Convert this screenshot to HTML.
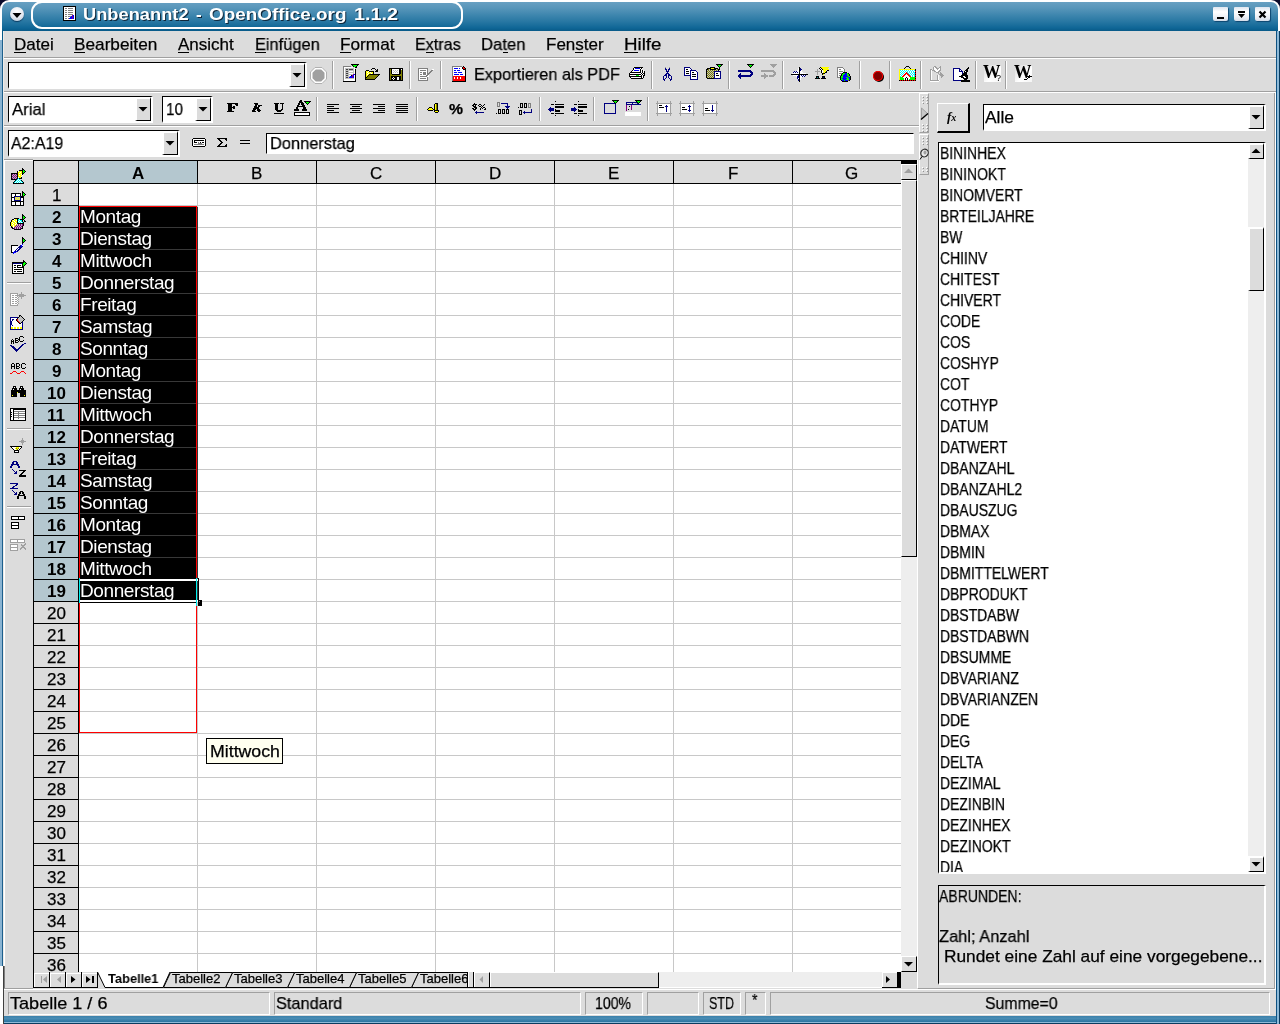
<!DOCTYPE html><html><head><meta charset="utf-8"><style>html,body{margin:0;padding:0;width:1280px;height:1024px;overflow:hidden;background:#dcdcdc;}.a{position:absolute;}.t{font-family:"Liberation Sans",sans-serif;white-space:nowrap;color:#000;will-change:transform;-webkit-text-stroke:0.25px currentColor;}svg.a{overflow:visible}</style></head><body>
<div class="a" style="left:0px;top:0px;width:2px;height:966px;background:#8ab4d2"></div>
<div class="a" style="left:2px;top:0px;width:1px;height:966px;background:#1d5f8c"></div>
<div class="a" style="left:0px;top:966px;width:3px;height:58px;background:#fff"></div>
<div class="a" style="left:3px;top:966px;width:1px;height:58px;background:#404040"></div>
<div class="a" style="left:4px;top:966px;width:1px;height:23px;background:#808080"></div>
<div class="a" style="left:4px;top:1016px;width:1272px;height:6px;background:linear-gradient(to bottom,#3a80aa,#4a8cb4 40%,#2a74a0)"></div>
<div class="a" style="left:4px;top:1022px;width:1275px;height:1px;background:#8ebad8"></div>
<div class="a" style="left:4px;top:1023px;width:1276px;height:1px;background:#0a3c60"></div>
<div class="a" style="left:0px;top:0px;width:1280px;height:31px;background:#0a0a2a"></div>
<div class="a" style="left:0;top:0;width:1280px;height:40px;border-radius:9px 9px 0 0;background:#fff"></div>
<div class="a" style="left:2px;top:2px;width:1276px;height:38px;border-radius:7px 7px 0 0;background:linear-gradient(to bottom,#68a0c2 0px,#5896ba 6px,#3e86ae 13px,#2676a2 20px,#0f6696 26px,#085a88 29px,#085a88 38px)"></div>
<div class="a" style="left:31px;top:1px;width:432px;height:28px;border:2px solid #fff;border-radius:11px;box-sizing:border-box"></div>
<div class="a" style="left:10px;top:7px;width:14px;height:14px;border-radius:50%;background:radial-gradient(circle at 50% 30%,#ffffff,#e4e8f0 55%,#b4c0d0);box-shadow:0 1px 1px #0a3a60"></div>
<svg class="a" style="left:12px;top:12px" width="10" height="7" viewBox="0 0 10 7" shape-rendering="crispEdges"><polygon points="0.5,1 9.5,1 5,6" fill="#000" shape-rendering="geometricPrecision"/></svg>
<svg class="a" style="left:63px;top:6px" width="13" height="15" shape-rendering="crispEdges"><rect x="0" y="0" width="13" height="1" fill="#000000"/><rect x="0" y="1" width="1" height="1" fill="#000000"/><rect x="1" y="1" width="11" height="1" fill="#ffffff"/><rect x="12" y="1" width="1" height="1" fill="#000000"/><rect x="0" y="2" width="1" height="1" fill="#000000"/><rect x="1" y="2" width="1" height="1" fill="#ffffff"/><rect x="2" y="2" width="2" height="1" fill="#808080"/><rect x="4" y="2" width="1" height="1" fill="#ffffff"/><rect x="5" y="2" width="5" height="1" fill="#808080"/><rect x="10" y="2" width="2" height="1" fill="#ffffff"/><rect x="12" y="2" width="1" height="1" fill="#000000"/><rect x="0" y="3" width="1" height="1" fill="#000000"/><rect x="1" y="3" width="11" height="1" fill="#ffffff"/><rect x="12" y="3" width="1" height="1" fill="#000000"/><rect x="0" y="4" width="1" height="1" fill="#000000"/><rect x="1" y="4" width="1" height="1" fill="#ffffff"/><rect x="2" y="4" width="2" height="1" fill="#808080"/><rect x="4" y="4" width="1" height="1" fill="#ffffff"/><rect x="5" y="4" width="5" height="1" fill="#808080"/><rect x="10" y="4" width="2" height="1" fill="#ffffff"/><rect x="12" y="4" width="1" height="1" fill="#000000"/><rect x="0" y="5" width="1" height="1" fill="#000000"/><rect x="1" y="5" width="11" height="1" fill="#ffffff"/><rect x="12" y="5" width="1" height="1" fill="#000000"/><rect x="0" y="6" width="1" height="1" fill="#000000"/><rect x="1" y="6" width="1" height="1" fill="#ffffff"/><rect x="2" y="6" width="2" height="1" fill="#808080"/><rect x="4" y="6" width="1" height="1" fill="#ffffff"/><rect x="5" y="6" width="5" height="1" fill="#808080"/><rect x="10" y="6" width="2" height="1" fill="#ffffff"/><rect x="12" y="6" width="1" height="1" fill="#000000"/><rect x="0" y="7" width="1" height="1" fill="#000000"/><rect x="1" y="7" width="11" height="1" fill="#ffffff"/><rect x="12" y="7" width="1" height="1" fill="#000000"/><rect x="0" y="8" width="1" height="1" fill="#000000"/><rect x="1" y="8" width="1" height="1" fill="#ffffff"/><rect x="2" y="8" width="2" height="1" fill="#808080"/><rect x="4" y="8" width="1" height="1" fill="#ffffff"/><rect x="5" y="8" width="5" height="1" fill="#808080"/><rect x="10" y="8" width="2" height="1" fill="#ffffff"/><rect x="12" y="8" width="1" height="1" fill="#000000"/><rect x="0" y="9" width="1" height="1" fill="#000000"/><rect x="1" y="9" width="8" height="1" fill="#ffffff"/><rect x="9" y="9" width="1" height="1" fill="#800080"/><rect x="10" y="9" width="1" height="1" fill="#0000ff"/><rect x="11" y="9" width="1" height="1" fill="#ffffff"/><rect x="12" y="9" width="1" height="1" fill="#000000"/><rect x="0" y="10" width="1" height="1" fill="#000000"/><rect x="1" y="10" width="1" height="1" fill="#ffffff"/><rect x="2" y="10" width="2" height="1" fill="#808080"/><rect x="4" y="10" width="1" height="1" fill="#ffffff"/><rect x="5" y="10" width="3" height="1" fill="#808080"/><rect x="8" y="10" width="1" height="1" fill="#0000ff"/><rect x="9" y="10" width="1" height="1" fill="#800080"/><rect x="10" y="10" width="1" height="1" fill="#0000ff"/><rect x="11" y="10" width="1" height="1" fill="#ffffff"/><rect x="12" y="10" width="1" height="1" fill="#000000"/><rect x="0" y="11" width="1" height="1" fill="#000000"/><rect x="1" y="11" width="6" height="1" fill="#ffffff"/><rect x="7" y="11" width="2" height="1" fill="#0000ff"/><rect x="9" y="11" width="1" height="1" fill="#800080"/><rect x="10" y="11" width="1" height="1" fill="#0000ff"/><rect x="11" y="11" width="1" height="1" fill="#ffffff"/><rect x="12" y="11" width="1" height="1" fill="#000000"/><rect x="0" y="12" width="1" height="1" fill="#000000"/><rect x="1" y="12" width="1" height="1" fill="#ffffff"/><rect x="2" y="12" width="2" height="1" fill="#808080"/><rect x="4" y="12" width="1" height="1" fill="#ffffff"/><rect x="5" y="12" width="1" height="1" fill="#808080"/><rect x="6" y="12" width="3" height="1" fill="#0000ff"/><rect x="9" y="12" width="1" height="1" fill="#800080"/><rect x="10" y="12" width="1" height="1" fill="#0000ff"/><rect x="11" y="12" width="1" height="1" fill="#ffffff"/><rect x="12" y="12" width="1" height="1" fill="#000000"/><rect x="0" y="13" width="1" height="1" fill="#000000"/><rect x="1" y="13" width="11" height="1" fill="#ffffff"/><rect x="12" y="13" width="1" height="1" fill="#000000"/><rect x="0" y="14" width="13" height="1" fill="#000000"/></svg>
<div class="a t" style="left:83.40px;top:5.61px;font-size:17px;line-height:17px;font-weight:bold;-webkit-text-stroke:0;transform:scaleX(1.0754);transform-origin:0 0;color:#fff;text-shadow:1px 1px 0 #10283c">Unbenannt2</div>
<div class="a t" style="left:196.20px;top:5.61px;font-size:17px;line-height:17px;font-weight:bold;-webkit-text-stroke:0;color:#fff;text-shadow:1px 1px 0 #10283c">-</div>
<div class="a t" style="left:208.75px;top:5.61px;font-size:17px;line-height:17px;font-weight:bold;-webkit-text-stroke:0;transform:scaleX(1.1112);transform-origin:0 0;color:#fff;text-shadow:1px 1px 0 #10283c">OpenOffice.org</div>
<div class="a t" style="left:354.30px;top:5.61px;font-size:17px;line-height:17px;font-weight:bold;-webkit-text-stroke:0;transform:scaleX(1.1640);transform-origin:0 0;color:#fff;text-shadow:1px 1px 0 #10283c">1.1.2</div>
<div class="a" style="left:1213px;top:7px;width:15px;height:14px;border-radius:1px 1px 2px 2px;background:linear-gradient(to bottom,#dfe6f0,#ffffff 35%,#eef1f6 70%,#d4dce8);box-shadow:1px 1px 1px #0c4670"></div>
<div class="a" style="left:1234px;top:7px;width:15px;height:14px;border-radius:1px 1px 2px 2px;background:linear-gradient(to bottom,#dfe6f0,#ffffff 35%,#eef1f6 70%,#d4dce8);box-shadow:1px 1px 1px #0c4670"></div>
<div class="a" style="left:1255px;top:7px;width:15px;height:14px;border-radius:1px 1px 2px 2px;background:linear-gradient(to bottom,#dfe6f0,#ffffff 35%,#eef1f6 70%,#d4dce8);box-shadow:1px 1px 1px #0c4670"></div>
<svg class="a" style="left:1217px;top:10px" width="9" height="9" viewBox="0 0 9 9" shape-rendering="crispEdges"><rect x="0" y="7" width="7" height="2" fill="#000"/></svg>
<svg class="a" style="left:1237px;top:10px" width="9" height="9" viewBox="0 0 9 9" shape-rendering="crispEdges"><rect x="1" y="1" width="7" height="2" fill="#000"/><polygon points="1,4 8,4 4.5,8" fill="#000" shape-rendering="geometricPrecision"/></svg>
<svg class="a" style="left:1258px;top:10px" width="9" height="9" viewBox="0 0 9 9" shape-rendering="crispEdges"><path d="M1.5 1.5 L7.5 7.5 M7.5 1.5 L1.5 7.5" stroke="#000" stroke-width="2.2" shape-rendering="geometricPrecision"/></svg>
<div class="a" style="left:1276px;top:31px;width:1px;height:993px;background:#0e5282"></div>
<div class="a" style="left:1277px;top:31px;width:2px;height:993px;background:#8ebad8"></div>
<div class="a" style="left:1279px;top:31px;width:1px;height:993px;background:#0a3c60"></div>
<div class="a" style="left:3px;top:31px;width:1273px;height:26px;background:#dcdcdc"></div>
<div class="a" style="left:3px;top:57px;width:1273px;height:1px;background:#a0a0a0"></div>
<div class="a" style="left:3px;top:58px;width:1273px;height:1px;background:#ffffff"></div>
<div class="a t" style="left:13.70px;top:35.61px;font-size:17px;line-height:17px;transform:scaleX(0.9924);transform-origin:0 0;">Datei</div>
<div class="a" style="left:14px;top:52px;width:12px;height:1px;background:#000"></div>
<div class="a t" style="left:74.25px;top:35.61px;font-size:17px;line-height:17px;transform:scaleX(1.0128);transform-origin:0 0;">Bearbeiten</div>
<div class="a" style="left:74px;top:52px;width:11px;height:1px;background:#000"></div>
<div class="a t" style="left:178.00px;top:35.61px;font-size:17px;line-height:17px;">Ansicht</div>
<div class="a" style="left:178px;top:52px;width:11px;height:1px;background:#000"></div>
<div class="a t" style="left:254.60px;top:35.61px;font-size:17px;line-height:17px;transform:scaleX(0.9642);transform-origin:0 0;">Einfügen</div>
<div class="a" style="left:255px;top:52px;width:11px;height:1px;background:#000"></div>
<div class="a t" style="left:340.00px;top:35.61px;font-size:17px;line-height:17px;transform:scaleX(1.0130);transform-origin:0 0;">Format</div>
<div class="a" style="left:340px;top:52px;width:11px;height:1px;background:#000"></div>
<div class="a t" style="left:415.00px;top:35.61px;font-size:17px;line-height:17px;transform:scaleX(0.9492);transform-origin:0 0;">Extras</div>
<div class="a" style="left:426px;top:52px;width:8px;height:1px;background:#000"></div>
<div class="a t" style="left:481.25px;top:35.61px;font-size:17px;line-height:17px;transform:scaleX(0.9802);transform-origin:0 0;">Daten</div>
<div class="a" style="left:503px;top:52px;width:5px;height:1px;background:#000"></div>
<div class="a t" style="left:546.25px;top:35.61px;font-size:17px;line-height:17px;">Fenster</div>
<div class="a" style="left:575px;top:52px;width:8px;height:1px;background:#000"></div>
<div class="a t" style="left:623.75px;top:35.61px;font-size:17px;line-height:17px;transform:scaleX(1.1029);transform-origin:0 0;">Hilfe</div>
<div class="a" style="left:624px;top:52px;width:14px;height:1px;background:#000"></div>
<div class="a" style="left:3px;top:91px;width:1273px;height:1px;background:#a0a0a0"></div>
<div class="a" style="left:3px;top:92px;width:1273px;height:1px;background:#ffffff"></div>
<div class="a" style="left:8px;top:62px;width:299px;height:27px;background:#fff;border-top:1px solid #000;border-left:1px solid #000;border-right:2px solid #fff;border-bottom:2px solid #fff;box-sizing:border-box"></div>
<div class="a" style="left:289px;top:63px;width:16px;height:24px;background:#dcdcdc;border-top:2px solid #fff;border-left:2px solid #fff;border-right:1px solid #000;border-bottom:1px solid #000;box-sizing:border-box"></div>
<svg class="a" style="left:289px;top:73px" width="16" height="6" viewBox="0 0 16 6" shape-rendering="crispEdges"><polygon points="3.5,0 12.5,0 8.0,4.5" fill="#000" shape-rendering="geometricPrecision"/></svg>
<div class="a" style="left:332px;top:61px;width:1px;height:28px;background:#a0a0a0"></div>
<div class="a" style="left:333px;top:61px;width:1px;height:28px;background:#fff"></div>
<div class="a" style="left:409px;top:61px;width:1px;height:28px;background:#a0a0a0"></div>
<div class="a" style="left:410px;top:61px;width:1px;height:28px;background:#fff"></div>
<div class="a" style="left:440px;top:61px;width:1px;height:28px;background:#a0a0a0"></div>
<div class="a" style="left:441px;top:61px;width:1px;height:28px;background:#fff"></div>
<div class="a" style="left:651px;top:61px;width:1px;height:28px;background:#a0a0a0"></div>
<div class="a" style="left:652px;top:61px;width:1px;height:28px;background:#fff"></div>
<div class="a" style="left:728px;top:61px;width:1px;height:28px;background:#a0a0a0"></div>
<div class="a" style="left:729px;top:61px;width:1px;height:28px;background:#fff"></div>
<div class="a" style="left:782px;top:61px;width:1px;height:28px;background:#a0a0a0"></div>
<div class="a" style="left:783px;top:61px;width:1px;height:28px;background:#fff"></div>
<div class="a" style="left:859px;top:61px;width:1px;height:28px;background:#a0a0a0"></div>
<div class="a" style="left:860px;top:61px;width:1px;height:28px;background:#fff"></div>
<div class="a" style="left:889px;top:61px;width:1px;height:28px;background:#a0a0a0"></div>
<div class="a" style="left:890px;top:61px;width:1px;height:28px;background:#fff"></div>
<div class="a" style="left:920px;top:61px;width:1px;height:28px;background:#a0a0a0"></div>
<div class="a" style="left:921px;top:61px;width:1px;height:28px;background:#fff"></div>
<div class="a" style="left:975px;top:61px;width:1px;height:28px;background:#a0a0a0"></div>
<div class="a" style="left:976px;top:61px;width:1px;height:28px;background:#fff"></div>
<div class="a" style="left:1005px;top:61px;width:1px;height:28px;background:#a0a0a0"></div>
<div class="a" style="left:1006px;top:61px;width:1px;height:28px;background:#fff"></div>
<div class="a t" style="left:473.60px;top:65.61px;font-size:17px;line-height:17px;transform:scaleX(0.9592);transform-origin:0 0;">Exportieren als PDF</div>
<div class="a" style="left:3px;top:125px;width:916px;height:1px;background:#a0a0a0"></div>
<div class="a" style="left:3px;top:126px;width:916px;height:1px;background:#ffffff"></div>
<div class="a" style="left:8px;top:96px;width:145px;height:27px;background:#fff;border-top:1px solid #000;border-left:1px solid #000;border-right:2px solid #fff;border-bottom:2px solid #fff;box-sizing:border-box"></div>
<div class="a" style="left:135px;top:97px;width:16px;height:24px;background:#dcdcdc;border-top:2px solid #fff;border-left:2px solid #fff;border-right:1px solid #000;border-bottom:1px solid #000;box-sizing:border-box"></div>
<svg class="a" style="left:135px;top:107px" width="16" height="6" viewBox="0 0 16 6" shape-rendering="crispEdges"><polygon points="3.5,0 12.5,0 8.0,4.5" fill="#000" shape-rendering="geometricPrecision"/></svg>
<div class="a" style="left:162px;top:96px;width:51px;height:27px;background:#fff;border-top:1px solid #000;border-left:1px solid #000;border-right:2px solid #fff;border-bottom:2px solid #fff;box-sizing:border-box"></div>
<div class="a" style="left:195px;top:97px;width:16px;height:24px;background:#dcdcdc;border-top:2px solid #fff;border-left:2px solid #fff;border-right:1px solid #000;border-bottom:1px solid #000;box-sizing:border-box"></div>
<svg class="a" style="left:195px;top:107px" width="16" height="6" viewBox="0 0 16 6" shape-rendering="crispEdges"><polygon points="3.5,0 12.5,0 8.0,4.5" fill="#000" shape-rendering="geometricPrecision"/></svg>
<div class="a t" style="left:11.50px;top:100.61px;font-size:17px;line-height:17px;transform:scaleX(0.9853);transform-origin:0 0;">Arial</div>
<div class="a t" style="left:166.00px;top:100.61px;font-size:17px;line-height:17px;transform:scaleX(0.8995);transform-origin:0 0;">10</div>
<div class="a" style="left:316px;top:97px;width:1px;height:24px;background:#a0a0a0"></div>
<div class="a" style="left:317px;top:97px;width:1px;height:24px;background:#fff"></div>
<div class="a" style="left:416px;top:97px;width:1px;height:24px;background:#a0a0a0"></div>
<div class="a" style="left:417px;top:97px;width:1px;height:24px;background:#fff"></div>
<div class="a" style="left:539px;top:97px;width:1px;height:24px;background:#a0a0a0"></div>
<div class="a" style="left:540px;top:97px;width:1px;height:24px;background:#fff"></div>
<div class="a" style="left:593px;top:97px;width:1px;height:24px;background:#a0a0a0"></div>
<div class="a" style="left:594px;top:97px;width:1px;height:24px;background:#fff"></div>
<div class="a" style="left:647px;top:97px;width:1px;height:24px;background:#a0a0a0"></div>
<div class="a" style="left:648px;top:97px;width:1px;height:24px;background:#fff"></div>
<div class="a" style="left:8px;top:130px;width:172px;height:27px;background:#fff;border-top:1px solid #000;border-left:1px solid #000;border-right:2px solid #fff;border-bottom:2px solid #fff;box-sizing:border-box"></div>
<div class="a" style="left:162px;top:131px;width:16px;height:24px;background:#dcdcdc;border-top:2px solid #fff;border-left:2px solid #fff;border-right:1px solid #000;border-bottom:1px solid #000;box-sizing:border-box"></div>
<svg class="a" style="left:162px;top:141px" width="16" height="6" viewBox="0 0 16 6" shape-rendering="crispEdges"><polygon points="3.5,0 12.5,0 8.0,4.5" fill="#000" shape-rendering="geometricPrecision"/></svg>
<div class="a t" style="left:11.20px;top:134.61px;font-size:17px;line-height:17px;transform:scaleX(0.9373);transform-origin:0 0;">A2:A19</div>
<div class="a" style="left:266px;top:133px;width:648px;height:21px;background:#fff;border-top:1px solid #000;border-left:1px solid #000;border-right:1px solid #fff;border-bottom:1px solid #fff;box-sizing:border-box"></div>
<div class="a t" style="left:270.30px;top:134.61px;font-size:17px;line-height:17px;transform:scaleX(0.9647);transform-origin:0 0;">Donnerstag</div>
<div class="a" style="left:3px;top:159px;width:30px;height:1px;background:#a0a0a0"></div>
<div class="a" style="left:4px;top:160px;width:29px;height:1px;background:#fff"></div>
<div class="a" style="left:4px;top:160px;width:1px;height:806px;background:#fff"></div>
<div class="a" style="left:3px;top:31px;width:1px;height:935px;background:#eeebe8"></div>
<div class="a" style="left:7px;top:282px;width:24px;height:1px;background:#a0a0a0"></div>
<div class="a" style="left:7px;top:283px;width:24px;height:1px;background:#fff"></div>
<div class="a" style="left:7px;top:428px;width:24px;height:1px;background:#a0a0a0"></div>
<div class="a" style="left:7px;top:429px;width:24px;height:1px;background:#fff"></div>
<div class="a" style="left:7px;top:506px;width:24px;height:1px;background:#a0a0a0"></div>
<div class="a" style="left:7px;top:507px;width:24px;height:1px;background:#fff"></div>
<div class="a" style="left:79px;top:184px;width:822px;height:788px;background:#fff"></div>
<div class="a" style="left:34px;top:161px;width:44px;height:22px;background:#dcdcdc"></div>
<div class="a" style="left:79px;top:161px;width:118px;height:22px;background:#b4c7cf"></div>
<div class="a" style="left:198px;top:161px;width:703px;height:22px;background:#dcdcdc"></div>
<div class="a" style="left:34px;top:184px;width:44px;height:21px;background:#dcdcdc"></div>
<div class="a" style="left:34px;top:206px;width:44px;height:21px;background:#b4c7cf"></div>
<div class="a" style="left:34px;top:228px;width:44px;height:21px;background:#b4c7cf"></div>
<div class="a" style="left:34px;top:250px;width:44px;height:21px;background:#b4c7cf"></div>
<div class="a" style="left:34px;top:272px;width:44px;height:21px;background:#b4c7cf"></div>
<div class="a" style="left:34px;top:294px;width:44px;height:21px;background:#b4c7cf"></div>
<div class="a" style="left:34px;top:316px;width:44px;height:21px;background:#b4c7cf"></div>
<div class="a" style="left:34px;top:338px;width:44px;height:21px;background:#b4c7cf"></div>
<div class="a" style="left:34px;top:360px;width:44px;height:21px;background:#b4c7cf"></div>
<div class="a" style="left:34px;top:382px;width:44px;height:21px;background:#b4c7cf"></div>
<div class="a" style="left:34px;top:404px;width:44px;height:21px;background:#b4c7cf"></div>
<div class="a" style="left:34px;top:426px;width:44px;height:21px;background:#b4c7cf"></div>
<div class="a" style="left:34px;top:448px;width:44px;height:21px;background:#b4c7cf"></div>
<div class="a" style="left:34px;top:470px;width:44px;height:21px;background:#b4c7cf"></div>
<div class="a" style="left:34px;top:492px;width:44px;height:21px;background:#b4c7cf"></div>
<div class="a" style="left:34px;top:514px;width:44px;height:21px;background:#b4c7cf"></div>
<div class="a" style="left:34px;top:536px;width:44px;height:21px;background:#b4c7cf"></div>
<div class="a" style="left:34px;top:558px;width:44px;height:21px;background:#b4c7cf"></div>
<div class="a" style="left:34px;top:580px;width:44px;height:21px;background:#b4c7cf"></div>
<div class="a" style="left:34px;top:602px;width:44px;height:21px;background:#dcdcdc"></div>
<div class="a" style="left:34px;top:624px;width:44px;height:21px;background:#dcdcdc"></div>
<div class="a" style="left:34px;top:646px;width:44px;height:21px;background:#dcdcdc"></div>
<div class="a" style="left:34px;top:668px;width:44px;height:21px;background:#dcdcdc"></div>
<div class="a" style="left:34px;top:690px;width:44px;height:21px;background:#dcdcdc"></div>
<div class="a" style="left:34px;top:712px;width:44px;height:21px;background:#dcdcdc"></div>
<div class="a" style="left:34px;top:734px;width:44px;height:21px;background:#dcdcdc"></div>
<div class="a" style="left:34px;top:756px;width:44px;height:21px;background:#dcdcdc"></div>
<div class="a" style="left:34px;top:778px;width:44px;height:21px;background:#dcdcdc"></div>
<div class="a" style="left:34px;top:800px;width:44px;height:21px;background:#dcdcdc"></div>
<div class="a" style="left:34px;top:822px;width:44px;height:21px;background:#dcdcdc"></div>
<div class="a" style="left:34px;top:844px;width:44px;height:21px;background:#dcdcdc"></div>
<div class="a" style="left:34px;top:866px;width:44px;height:21px;background:#dcdcdc"></div>
<div class="a" style="left:34px;top:888px;width:44px;height:21px;background:#dcdcdc"></div>
<div class="a" style="left:34px;top:910px;width:44px;height:21px;background:#dcdcdc"></div>
<div class="a" style="left:34px;top:932px;width:44px;height:21px;background:#dcdcdc"></div>
<div class="a" style="left:34px;top:954px;width:44px;height:18px;background:#dcdcdc"></div>
<div class="a" style="left:79px;top:205px;width:822px;height:1px;background:#c8c8c8"></div>
<div class="a" style="left:79px;top:227px;width:822px;height:1px;background:#c8c8c8"></div>
<div class="a" style="left:79px;top:249px;width:822px;height:1px;background:#c8c8c8"></div>
<div class="a" style="left:79px;top:271px;width:822px;height:1px;background:#c8c8c8"></div>
<div class="a" style="left:79px;top:293px;width:822px;height:1px;background:#c8c8c8"></div>
<div class="a" style="left:79px;top:315px;width:822px;height:1px;background:#c8c8c8"></div>
<div class="a" style="left:79px;top:337px;width:822px;height:1px;background:#c8c8c8"></div>
<div class="a" style="left:79px;top:359px;width:822px;height:1px;background:#c8c8c8"></div>
<div class="a" style="left:79px;top:381px;width:822px;height:1px;background:#c8c8c8"></div>
<div class="a" style="left:79px;top:403px;width:822px;height:1px;background:#c8c8c8"></div>
<div class="a" style="left:79px;top:425px;width:822px;height:1px;background:#c8c8c8"></div>
<div class="a" style="left:79px;top:447px;width:822px;height:1px;background:#c8c8c8"></div>
<div class="a" style="left:79px;top:469px;width:822px;height:1px;background:#c8c8c8"></div>
<div class="a" style="left:79px;top:491px;width:822px;height:1px;background:#c8c8c8"></div>
<div class="a" style="left:79px;top:513px;width:822px;height:1px;background:#c8c8c8"></div>
<div class="a" style="left:79px;top:535px;width:822px;height:1px;background:#c8c8c8"></div>
<div class="a" style="left:79px;top:557px;width:822px;height:1px;background:#c8c8c8"></div>
<div class="a" style="left:79px;top:579px;width:822px;height:1px;background:#c8c8c8"></div>
<div class="a" style="left:79px;top:601px;width:822px;height:1px;background:#c8c8c8"></div>
<div class="a" style="left:79px;top:623px;width:822px;height:1px;background:#c8c8c8"></div>
<div class="a" style="left:79px;top:645px;width:822px;height:1px;background:#c8c8c8"></div>
<div class="a" style="left:79px;top:667px;width:822px;height:1px;background:#c8c8c8"></div>
<div class="a" style="left:79px;top:689px;width:822px;height:1px;background:#c8c8c8"></div>
<div class="a" style="left:79px;top:711px;width:822px;height:1px;background:#c8c8c8"></div>
<div class="a" style="left:79px;top:733px;width:822px;height:1px;background:#c8c8c8"></div>
<div class="a" style="left:79px;top:755px;width:822px;height:1px;background:#c8c8c8"></div>
<div class="a" style="left:79px;top:777px;width:822px;height:1px;background:#c8c8c8"></div>
<div class="a" style="left:79px;top:799px;width:822px;height:1px;background:#c8c8c8"></div>
<div class="a" style="left:79px;top:821px;width:822px;height:1px;background:#c8c8c8"></div>
<div class="a" style="left:79px;top:843px;width:822px;height:1px;background:#c8c8c8"></div>
<div class="a" style="left:79px;top:865px;width:822px;height:1px;background:#c8c8c8"></div>
<div class="a" style="left:79px;top:887px;width:822px;height:1px;background:#c8c8c8"></div>
<div class="a" style="left:79px;top:909px;width:822px;height:1px;background:#c8c8c8"></div>
<div class="a" style="left:79px;top:931px;width:822px;height:1px;background:#c8c8c8"></div>
<div class="a" style="left:79px;top:953px;width:822px;height:1px;background:#c8c8c8"></div>
<div class="a" style="left:197px;top:184px;width:1px;height:788px;background:#c8c8c8"></div>
<div class="a" style="left:316px;top:184px;width:1px;height:788px;background:#c8c8c8"></div>
<div class="a" style="left:435px;top:184px;width:1px;height:788px;background:#c8c8c8"></div>
<div class="a" style="left:554px;top:184px;width:1px;height:788px;background:#c8c8c8"></div>
<div class="a" style="left:673px;top:184px;width:1px;height:788px;background:#c8c8c8"></div>
<div class="a" style="left:792px;top:184px;width:1px;height:788px;background:#c8c8c8"></div>
<div class="a" style="left:33px;top:160px;width:868px;height:1px;background:#000"></div>
<div class="a" style="left:33px;top:183px;width:868px;height:1px;background:#000"></div>
<div class="a" style="left:33px;top:160px;width:1px;height:812px;background:#000"></div>
<div class="a" style="left:78px;top:160px;width:1px;height:812px;background:#000"></div>
<div class="a" style="left:197px;top:161px;width:1px;height:22px;background:#000"></div>
<div class="a" style="left:316px;top:161px;width:1px;height:22px;background:#000"></div>
<div class="a" style="left:435px;top:161px;width:1px;height:22px;background:#000"></div>
<div class="a" style="left:554px;top:161px;width:1px;height:22px;background:#000"></div>
<div class="a" style="left:673px;top:161px;width:1px;height:22px;background:#000"></div>
<div class="a" style="left:792px;top:161px;width:1px;height:22px;background:#000"></div>
<div class="a" style="left:34px;top:205px;width:44px;height:1px;background:#000"></div>
<div class="a" style="left:34px;top:227px;width:44px;height:1px;background:#000"></div>
<div class="a" style="left:34px;top:249px;width:44px;height:1px;background:#000"></div>
<div class="a" style="left:34px;top:271px;width:44px;height:1px;background:#000"></div>
<div class="a" style="left:34px;top:293px;width:44px;height:1px;background:#000"></div>
<div class="a" style="left:34px;top:315px;width:44px;height:1px;background:#000"></div>
<div class="a" style="left:34px;top:337px;width:44px;height:1px;background:#000"></div>
<div class="a" style="left:34px;top:359px;width:44px;height:1px;background:#000"></div>
<div class="a" style="left:34px;top:381px;width:44px;height:1px;background:#000"></div>
<div class="a" style="left:34px;top:403px;width:44px;height:1px;background:#000"></div>
<div class="a" style="left:34px;top:425px;width:44px;height:1px;background:#000"></div>
<div class="a" style="left:34px;top:447px;width:44px;height:1px;background:#000"></div>
<div class="a" style="left:34px;top:469px;width:44px;height:1px;background:#000"></div>
<div class="a" style="left:34px;top:491px;width:44px;height:1px;background:#000"></div>
<div class="a" style="left:34px;top:513px;width:44px;height:1px;background:#000"></div>
<div class="a" style="left:34px;top:535px;width:44px;height:1px;background:#000"></div>
<div class="a" style="left:34px;top:557px;width:44px;height:1px;background:#000"></div>
<div class="a" style="left:34px;top:579px;width:44px;height:1px;background:#000"></div>
<div class="a" style="left:34px;top:601px;width:44px;height:1px;background:#000"></div>
<div class="a" style="left:34px;top:623px;width:44px;height:1px;background:#000"></div>
<div class="a" style="left:34px;top:645px;width:44px;height:1px;background:#000"></div>
<div class="a" style="left:34px;top:667px;width:44px;height:1px;background:#000"></div>
<div class="a" style="left:34px;top:689px;width:44px;height:1px;background:#000"></div>
<div class="a" style="left:34px;top:711px;width:44px;height:1px;background:#000"></div>
<div class="a" style="left:34px;top:733px;width:44px;height:1px;background:#000"></div>
<div class="a" style="left:34px;top:755px;width:44px;height:1px;background:#000"></div>
<div class="a" style="left:34px;top:777px;width:44px;height:1px;background:#000"></div>
<div class="a" style="left:34px;top:799px;width:44px;height:1px;background:#000"></div>
<div class="a" style="left:34px;top:821px;width:44px;height:1px;background:#000"></div>
<div class="a" style="left:34px;top:843px;width:44px;height:1px;background:#000"></div>
<div class="a" style="left:34px;top:865px;width:44px;height:1px;background:#000"></div>
<div class="a" style="left:34px;top:887px;width:44px;height:1px;background:#000"></div>
<div class="a" style="left:34px;top:909px;width:44px;height:1px;background:#000"></div>
<div class="a" style="left:34px;top:931px;width:44px;height:1px;background:#000"></div>
<div class="a" style="left:34px;top:953px;width:44px;height:1px;background:#000"></div>
<div class="a t" style="left:131.85px;top:164.61px;font-size:17px;line-height:17px;font-weight:bold;-webkit-text-stroke:0;">A</div>
<div class="a t" style="left:251.35px;top:164.61px;font-size:17px;line-height:17px;">B</div>
<div class="a t" style="left:369.85px;top:164.61px;font-size:17px;line-height:17px;">C</div>
<div class="a t" style="left:488.85px;top:164.61px;font-size:17px;line-height:17px;">D</div>
<div class="a t" style="left:608.35px;top:164.61px;font-size:17px;line-height:17px;">E</div>
<div class="a t" style="left:727.80px;top:164.61px;font-size:17px;line-height:17px;">F</div>
<div class="a t" style="left:845.40px;top:164.61px;font-size:17px;line-height:17px;">G</div>
<div class="a t" style="left:51.55px;top:186.61px;font-size:17px;line-height:17px;">1</div>
<div class="a t" style="left:51.55px;top:208.61px;font-size:17px;line-height:17px;font-weight:bold;-webkit-text-stroke:0;">2</div>
<div class="a t" style="left:51.55px;top:230.61px;font-size:17px;line-height:17px;font-weight:bold;-webkit-text-stroke:0;">3</div>
<div class="a t" style="left:51.55px;top:252.61px;font-size:17px;line-height:17px;font-weight:bold;-webkit-text-stroke:0;">4</div>
<div class="a t" style="left:51.55px;top:274.61px;font-size:17px;line-height:17px;font-weight:bold;-webkit-text-stroke:0;">5</div>
<div class="a t" style="left:51.55px;top:296.61px;font-size:17px;line-height:17px;font-weight:bold;-webkit-text-stroke:0;">6</div>
<div class="a t" style="left:51.55px;top:318.61px;font-size:17px;line-height:17px;font-weight:bold;-webkit-text-stroke:0;">7</div>
<div class="a t" style="left:51.55px;top:340.61px;font-size:17px;line-height:17px;font-weight:bold;-webkit-text-stroke:0;">8</div>
<div class="a t" style="left:51.55px;top:362.61px;font-size:17px;line-height:17px;font-weight:bold;-webkit-text-stroke:0;">9</div>
<div class="a t" style="left:46.85px;top:384.61px;font-size:17px;line-height:17px;font-weight:bold;-webkit-text-stroke:0;">10</div>
<div class="a t" style="left:47.30px;top:406.61px;font-size:17px;line-height:17px;font-weight:bold;-webkit-text-stroke:0;">11</div>
<div class="a t" style="left:46.85px;top:428.61px;font-size:17px;line-height:17px;font-weight:bold;-webkit-text-stroke:0;">12</div>
<div class="a t" style="left:46.85px;top:450.61px;font-size:17px;line-height:17px;font-weight:bold;-webkit-text-stroke:0;">13</div>
<div class="a t" style="left:46.85px;top:472.61px;font-size:17px;line-height:17px;font-weight:bold;-webkit-text-stroke:0;">14</div>
<div class="a t" style="left:46.85px;top:494.61px;font-size:17px;line-height:17px;font-weight:bold;-webkit-text-stroke:0;">15</div>
<div class="a t" style="left:46.85px;top:516.61px;font-size:17px;line-height:17px;font-weight:bold;-webkit-text-stroke:0;">16</div>
<div class="a t" style="left:46.85px;top:538.61px;font-size:17px;line-height:17px;font-weight:bold;-webkit-text-stroke:0;">17</div>
<div class="a t" style="left:46.85px;top:560.61px;font-size:17px;line-height:17px;font-weight:bold;-webkit-text-stroke:0;">18</div>
<div class="a t" style="left:46.85px;top:582.61px;font-size:17px;line-height:17px;font-weight:bold;-webkit-text-stroke:0;">19</div>
<div class="a t" style="left:46.85px;top:604.61px;font-size:17px;line-height:17px;">20</div>
<div class="a t" style="left:46.85px;top:626.61px;font-size:17px;line-height:17px;">21</div>
<div class="a t" style="left:46.85px;top:648.61px;font-size:17px;line-height:17px;">22</div>
<div class="a t" style="left:46.85px;top:670.61px;font-size:17px;line-height:17px;">23</div>
<div class="a t" style="left:46.85px;top:692.61px;font-size:17px;line-height:17px;">24</div>
<div class="a t" style="left:46.85px;top:714.61px;font-size:17px;line-height:17px;">25</div>
<div class="a t" style="left:46.85px;top:736.61px;font-size:17px;line-height:17px;">26</div>
<div class="a t" style="left:46.85px;top:758.61px;font-size:17px;line-height:17px;">27</div>
<div class="a t" style="left:46.85px;top:780.61px;font-size:17px;line-height:17px;">28</div>
<div class="a t" style="left:46.85px;top:802.61px;font-size:17px;line-height:17px;">29</div>
<div class="a t" style="left:46.85px;top:824.61px;font-size:17px;line-height:17px;">30</div>
<div class="a t" style="left:46.85px;top:846.61px;font-size:17px;line-height:17px;">31</div>
<div class="a t" style="left:46.85px;top:868.61px;font-size:17px;line-height:17px;">32</div>
<div class="a t" style="left:46.85px;top:890.61px;font-size:17px;line-height:17px;">33</div>
<div class="a t" style="left:46.85px;top:912.61px;font-size:17px;line-height:17px;">34</div>
<div class="a t" style="left:46.85px;top:934.61px;font-size:17px;line-height:17px;">35</div>
<div class="a t" style="left:46.85px;top:956.61px;font-size:17px;line-height:17px;">36</div>
<div class="a" style="left:80px;top:207px;width:118px;height:394px;background:#000"></div>
<div class="a" style="left:197px;top:207px;width:1px;height:394px;background:#303838"></div>
<div class="a" style="left:80px;top:227px;width:117px;height:1px;background:#383838"></div>
<div class="a" style="left:80px;top:249px;width:117px;height:1px;background:#383838"></div>
<div class="a" style="left:80px;top:271px;width:117px;height:1px;background:#383838"></div>
<div class="a" style="left:80px;top:293px;width:117px;height:1px;background:#383838"></div>
<div class="a" style="left:80px;top:315px;width:117px;height:1px;background:#383838"></div>
<div class="a" style="left:80px;top:337px;width:117px;height:1px;background:#383838"></div>
<div class="a" style="left:80px;top:359px;width:117px;height:1px;background:#383838"></div>
<div class="a" style="left:80px;top:381px;width:117px;height:1px;background:#383838"></div>
<div class="a" style="left:80px;top:403px;width:117px;height:1px;background:#383838"></div>
<div class="a" style="left:80px;top:425px;width:117px;height:1px;background:#383838"></div>
<div class="a" style="left:80px;top:447px;width:117px;height:1px;background:#383838"></div>
<div class="a" style="left:80px;top:469px;width:117px;height:1px;background:#383838"></div>
<div class="a" style="left:80px;top:491px;width:117px;height:1px;background:#383838"></div>
<div class="a" style="left:80px;top:513px;width:117px;height:1px;background:#383838"></div>
<div class="a" style="left:80px;top:535px;width:117px;height:1px;background:#383838"></div>
<div class="a" style="left:80px;top:557px;width:117px;height:1px;background:#383838"></div>
<div class="a" style="left:80px;top:579px;width:117px;height:1px;background:#383838"></div>
<div class="a t" style="left:79.6px;top:206.92px;font-size:19px;line-height:19px;color:#fff;letter-spacing:-0.4px;-webkit-text-stroke:0">Montag</div>
<div class="a t" style="left:79.6px;top:228.92px;font-size:19px;line-height:19px;color:#fff;letter-spacing:-0.4px;-webkit-text-stroke:0">Dienstag</div>
<div class="a t" style="left:79.6px;top:250.92px;font-size:19px;line-height:19px;color:#fff;letter-spacing:-0.4px;-webkit-text-stroke:0">Mittwoch</div>
<div class="a t" style="left:79.6px;top:272.92px;font-size:19px;line-height:19px;color:#fff;letter-spacing:-0.4px;-webkit-text-stroke:0">Donnerstag</div>
<div class="a t" style="left:79.6px;top:294.92px;font-size:19px;line-height:19px;color:#fff;letter-spacing:-0.4px;-webkit-text-stroke:0">Freitag</div>
<div class="a t" style="left:79.6px;top:316.92px;font-size:19px;line-height:19px;color:#fff;letter-spacing:-0.4px;-webkit-text-stroke:0">Samstag</div>
<div class="a t" style="left:79.6px;top:338.92px;font-size:19px;line-height:19px;color:#fff;letter-spacing:-0.4px;-webkit-text-stroke:0">Sonntag</div>
<div class="a t" style="left:79.6px;top:360.92px;font-size:19px;line-height:19px;color:#fff;letter-spacing:-0.4px;-webkit-text-stroke:0">Montag</div>
<div class="a t" style="left:79.6px;top:382.92px;font-size:19px;line-height:19px;color:#fff;letter-spacing:-0.4px;-webkit-text-stroke:0">Dienstag</div>
<div class="a t" style="left:79.6px;top:404.92px;font-size:19px;line-height:19px;color:#fff;letter-spacing:-0.4px;-webkit-text-stroke:0">Mittwoch</div>
<div class="a t" style="left:79.6px;top:426.92px;font-size:19px;line-height:19px;color:#fff;letter-spacing:-0.4px;-webkit-text-stroke:0">Donnerstag</div>
<div class="a t" style="left:79.6px;top:448.92px;font-size:19px;line-height:19px;color:#fff;letter-spacing:-0.4px;-webkit-text-stroke:0">Freitag</div>
<div class="a t" style="left:79.6px;top:470.92px;font-size:19px;line-height:19px;color:#fff;letter-spacing:-0.4px;-webkit-text-stroke:0">Samstag</div>
<div class="a t" style="left:79.6px;top:492.92px;font-size:19px;line-height:19px;color:#fff;letter-spacing:-0.4px;-webkit-text-stroke:0">Sonntag</div>
<div class="a t" style="left:79.6px;top:514.92px;font-size:19px;line-height:19px;color:#fff;letter-spacing:-0.4px;-webkit-text-stroke:0">Montag</div>
<div class="a t" style="left:79.6px;top:536.92px;font-size:19px;line-height:19px;color:#fff;letter-spacing:-0.4px;-webkit-text-stroke:0">Dienstag</div>
<div class="a t" style="left:79.6px;top:558.92px;font-size:19px;line-height:19px;color:#fff;letter-spacing:-0.4px;-webkit-text-stroke:0">Mittwoch</div>
<div class="a t" style="left:79.6px;top:580.92px;font-size:19px;line-height:19px;color:#fff;letter-spacing:-0.4px;-webkit-text-stroke:0">Donnerstag</div>
<div class="a" style="left:79px;top:206px;width:118px;height:527px;border:1px solid #ff0000;box-sizing:border-box"></div>
<div class="a" style="left:80px;top:579px;width:118px;height:1px;background:#fff"></div>
<div class="a" style="left:80px;top:580px;width:118px;height:1px;background:#fff"></div>
<div class="a" style="left:80px;top:600px;width:118px;height:1px;background:#fff"></div>
<div class="a" style="left:80px;top:601px;width:118px;height:1px;background:#fff"></div>
<div class="a" style="left:79px;top:578px;width:1px;height:25px;background:#00f0f0"></div>
<div class="a" style="left:196px;top:578px;width:1px;height:28px;background:#00f0f0"></div>
<div class="a" style="left:80px;top:602px;width:116px;height:1px;background:#000"></div>
<div class="a" style="left:198px;top:578px;width:1px;height:24px;background:#000"></div>
<div class="a" style="left:198px;top:600px;width:4px;height:6px;background:#000"></div>
<div class="a" style="left:199px;top:601px;width:1px;height:1px;background:#808080"></div>
<div class="a" style="left:206px;top:738px;width:77px;height:26px;background:#fffff0;border:1px solid #000;box-sizing:border-box"></div>
<div class="a t" style="left:209.50px;top:742.61px;font-size:17px;line-height:17px;transform:scaleX(1.0432);transform-origin:0 0;">Mittwoch</div>
<div class="a" style="left:901px;top:160px;width:16px;height:812px;background:#eeeeee"></div>
<div class="a" style="left:901px;top:160px;width:16px;height:4px;background:#000"></div>
<div class="a" style="left:901px;top:164px;width:16px;height:16px;background:#dcdcdc;border-top:1px solid #fff;border-left:1px solid #fff;border-bottom:1px solid #000;border-right:1px solid #000;box-sizing:border-box"></div>
<svg class="a" style="left:901px;top:168px" width="15" height="6" viewBox="0 0 15 6" shape-rendering="crispEdges"><polygon points="3,5 12,5 7.5,0.5" fill="#a0a0a0" shape-rendering="geometricPrecision"/></svg>
<div class="a" style="left:901px;top:180px;width:16px;height:377px;background:#dcdcdc;border-top:1px solid #fff;border-left:1px solid #fff;border-bottom:1px solid #000;border-right:1px solid #000;box-sizing:border-box"></div>
<div class="a" style="left:901px;top:956px;width:16px;height:16px;background:#dcdcdc;border-top:1px solid #fff;border-left:1px solid #fff;border-bottom:1px solid #000;border-right:1px solid #000;box-sizing:border-box"></div>
<svg class="a" style="left:901px;top:962px" width="15" height="6" viewBox="0 0 15 6" shape-rendering="crispEdges"><polygon points="3,0 12,0 7.5,4.5" fill="#000" shape-rendering="geometricPrecision"/></svg>
<div class="a" style="left:33px;top:972px;width:884px;height:16px;background:#dcdcdc"></div>
<div class="a" style="left:33px;top:972px;width:17px;height:16px;background:#dcdcdc;border-left:1px solid #000;border-right:1px solid #000;border-bottom:1px solid #000;box-sizing:border-box"></div>
<div class="a" style="left:34px;top:973px;width:15px;height:14px;border-top:1px solid #fff;border-left:1px solid #fff;box-sizing:border-box"></div>
<div class="a" style="left:49px;top:972px;width:17px;height:16px;background:#dcdcdc;border-left:1px solid #000;border-right:1px solid #000;border-bottom:1px solid #000;box-sizing:border-box"></div>
<div class="a" style="left:50px;top:973px;width:15px;height:14px;border-top:1px solid #fff;border-left:1px solid #fff;box-sizing:border-box"></div>
<div class="a" style="left:65px;top:972px;width:17px;height:16px;background:#dcdcdc;border-left:1px solid #000;border-right:1px solid #000;border-bottom:1px solid #000;box-sizing:border-box"></div>
<div class="a" style="left:66px;top:973px;width:15px;height:14px;border-top:1px solid #fff;border-left:1px solid #fff;box-sizing:border-box"></div>
<div class="a" style="left:81px;top:972px;width:17px;height:16px;background:#dcdcdc;border-left:1px solid #000;border-right:1px solid #000;border-bottom:1px solid #000;box-sizing:border-box"></div>
<div class="a" style="left:82px;top:973px;width:15px;height:14px;border-top:1px solid #fff;border-left:1px solid #fff;box-sizing:border-box"></div>
<svg class="a" style="left:41px;top:976px" width="8" height="8" viewBox="0 0 8 8" shape-rendering="crispEdges"><rect x="0" y="0" width="1" height="7" fill="#a0a0a0"/><polygon points="6,0 6,7 2,3.5" fill="#a0a0a0" shape-rendering="geometricPrecision"/></svg>
<svg class="a" style="left:56px;top:976px" width="8" height="8" viewBox="0 0 8 8" shape-rendering="crispEdges"><polygon points="5,0 5,7 1,3.5" fill="#a0a0a0" shape-rendering="geometricPrecision"/></svg>
<svg class="a" style="left:71px;top:976px" width="8" height="8" viewBox="0 0 8 8" shape-rendering="crispEdges"><polygon points="0,0 0,7 4.5,3.5" fill="#000" shape-rendering="geometricPrecision"/></svg>
<svg class="a" style="left:86px;top:976px" width="9" height="8" viewBox="0 0 9 8" shape-rendering="crispEdges"><polygon points="0,0 0,7 4.5,3.5" fill="#000" shape-rendering="geometricPrecision"/><rect x="6" y="0" width="1.5" height="7" fill="#000"/></svg>
<svg class="a" style="left:97px;top:972px" width="380" height="16" viewBox="0 0 380 16"><polygon points="314.5,15.5 321.5,0.5 383.5,0.5 376.5,15.5" fill="#dcdcdc" stroke="#000" stroke-width="1"/><polygon points="252.5,15.5 259.5,0.5 321.5,0.5 314.5,15.5" fill="#dcdcdc" stroke="#000" stroke-width="1"/><polygon points="190.5,15.5 197.5,0.5 259.5,0.5 252.5,15.5" fill="#dcdcdc" stroke="#000" stroke-width="1"/><polygon points="128.5,15.5 135.5,0.5 197.5,0.5 190.5,15.5" fill="#dcdcdc" stroke="#000" stroke-width="1"/><polygon points="66.5,15.5 73.5,0.5 135.5,0.5 128.5,15.5" fill="#dcdcdc" stroke="#000" stroke-width="1"/><polygon points="0.5,0 8,15.5 66,15.5 73,0" fill="#fff"/><polyline points="0.5,0 8,15.5 66,15.5 73,0" fill="none" stroke="#000" stroke-width="1"/></svg>
<div class="a t" style="left:108.30px;top:972.40px;font-size:13px;line-height:13px;font-weight:bold;-webkit-text-stroke:0;transform:scaleX(0.9873);transform-origin:0 0;">Tabelle1</div>
<div class="a t" style="left:171.60px;top:972.40px;font-size:13px;line-height:13px;">Tabelle2</div>
<div class="a t" style="left:233.60px;top:972.40px;font-size:13px;line-height:13px;">Tabelle3</div>
<div class="a t" style="left:295.60px;top:972.40px;font-size:13px;line-height:13px;">Tabelle4</div>
<div class="a t" style="left:357.60px;top:972.40px;font-size:13px;line-height:13px;">Tabelle5</div>
<div class="a t" style="left:419.60px;top:972.40px;font-size:13px;line-height:13px;">Tabelle6</div>
<div class="a" style="left:467px;top:972px;width:1px;height:16px;background:#000"></div>
<div class="a" style="left:468px;top:972px;width:5px;height:15px;background:#dcdcdc;border-left:1px solid #fff;box-sizing:border-box"></div>
<div class="a" style="left:473px;top:972px;width:1px;height:16px;background:#000"></div>
<div class="a" style="left:474px;top:972px;width:427px;height:16px;background:#eeeeee"></div>
<div class="a" style="left:468px;top:987px;width:191px;height:1px;background:#000"></div>
<div class="a" style="left:882px;top:987px;width:19px;height:1px;background:#000"></div>
<div class="a" style="left:659px;top:987px;width:223px;height:1px;background:#fff"></div>
<div class="a" style="left:474px;top:972px;width:16px;height:15px;background:#dcdcdc;border-top:1px solid #fff;border-left:1px solid #fff;border-right:1px solid #000;box-sizing:border-box"></div>
<svg class="a" style="left:478px;top:976px" width="8" height="8" viewBox="0 0 8 8" shape-rendering="crispEdges"><polygon points="5,0 5,7 1.5,3.5" fill="#a0a0a0" shape-rendering="geometricPrecision"/></svg>
<div class="a" style="left:490px;top:972px;width:169px;height:15px;background:#dcdcdc;border-top:1px solid #fff;border-left:1px solid #fff;border-right:1px solid #000;box-sizing:border-box"></div>
<div class="a" style="left:882px;top:972px;width:15px;height:15px;background:#dcdcdc;border-top:1px solid #fff;border-left:1px solid #fff;box-sizing:border-box"></div>
<svg class="a" style="left:886px;top:976px" width="8" height="8" viewBox="0 0 8 8" shape-rendering="crispEdges"><polygon points="0,0 0,7 4,3.5" fill="#000" shape-rendering="geometricPrecision"/></svg>
<div class="a" style="left:897px;top:972px;width:4px;height:16px;background:#000"></div>
<div class="a" style="left:901px;top:972px;width:16px;height:16px;background:#dcdcdc"></div>
<div class="a" style="left:4px;top:988px;width:29px;height:1px;background:#a0a0a0"></div>
<div class="a" style="left:4px;top:989px;width:1272px;height:1px;background:#fff"></div>
<div class="a" style="left:8px;top:992px;width:262px;height:23px;border-top:1px solid #a0a0a0;border-left:1px solid #a0a0a0;border-right:1px solid #fff;border-bottom:1px solid #fff;box-sizing:border-box"></div>
<div class="a" style="left:274px;top:992px;width:307px;height:23px;border-top:1px solid #a0a0a0;border-left:1px solid #a0a0a0;border-right:1px solid #fff;border-bottom:1px solid #fff;box-sizing:border-box"></div>
<div class="a" style="left:585px;top:992px;width:58px;height:23px;border-top:1px solid #a0a0a0;border-left:1px solid #a0a0a0;border-right:1px solid #fff;border-bottom:1px solid #fff;box-sizing:border-box"></div>
<div class="a" style="left:647px;top:992px;width:52px;height:23px;border-top:1px solid #a0a0a0;border-left:1px solid #a0a0a0;border-right:1px solid #fff;border-bottom:1px solid #fff;box-sizing:border-box"></div>
<div class="a" style="left:703px;top:992px;width:38px;height:23px;border-top:1px solid #a0a0a0;border-left:1px solid #a0a0a0;border-right:1px solid #fff;border-bottom:1px solid #fff;box-sizing:border-box"></div>
<div class="a" style="left:745px;top:992px;width:21px;height:23px;border-top:1px solid #a0a0a0;border-left:1px solid #a0a0a0;border-right:1px solid #fff;border-bottom:1px solid #fff;box-sizing:border-box"></div>
<div class="a" style="left:770px;top:992px;width:500px;height:23px;border-top:1px solid #a0a0a0;border-left:1px solid #a0a0a0;border-right:1px solid #fff;border-bottom:1px solid #fff;box-sizing:border-box"></div>
<div class="a t" style="left:9.50px;top:995.01px;font-size:17px;line-height:17px;transform:scaleX(1.0632);transform-origin:0 0;">Tabelle 1 / 6</div>
<div class="a t" style="left:275.60px;top:995.01px;font-size:17px;line-height:17px;transform:scaleX(0.9609);transform-origin:0 0;">Standard</div>
<div class="a t" style="left:595.00px;top:995.01px;font-size:17px;line-height:17px;transform:scaleX(0.8276);transform-origin:0 0;">100%</div>
<div class="a t" style="left:709.00px;top:995.01px;font-size:17px;line-height:17px;transform:scaleX(0.7353);transform-origin:0 0;">STD</div>
<div class="a t" style="left:752.00px;top:992.11px;font-size:17px;line-height:17px;transform:scaleX(0.8333);transform-origin:0 0;">*</div>
<div class="a t" style="left:984.60px;top:995.21px;font-size:17px;line-height:17px;transform:scaleX(0.9321);transform-origin:0 0;">Summe=0</div>
<div class="a" style="left:917px;top:160px;width:1px;height:828px;background:#fff"></div>
<div class="a" style="left:1274px;top:93px;width:1px;height:895px;background:#a0a0a0"></div>
<div class="a" style="left:1275px;top:93px;width:1px;height:896px;background:#fff"></div>
<div class="a" style="left:918px;top:988px;width:357px;height:1px;background:#a0a0a0"></div>
<div class="a" style="left:919px;top:93px;width:10px;height:40px;background:#dcdcdc;border-right:1px solid #a0a0a0;border-bottom:1px solid #a0a0a0;border-top:1px solid #fff;border-left:1px solid #fff;box-sizing:border-box"></div>
<div class="a" style="left:919px;top:134px;width:10px;height:41px;background:#dcdcdc;border-right:1px solid #a0a0a0;border-bottom:1px solid #a0a0a0;border-top:1px solid #fff;border-left:1px solid #fff;box-sizing:border-box"></div>
<div class="a" style="left:922px;top:96px;width:1px;height:1px;background:#fff"></div>
<div class="a" style="left:923px;top:97px;width:1px;height:1px;background:#909090"></div>
<div class="a" style="left:926px;top:96px;width:1px;height:1px;background:#fff"></div>
<div class="a" style="left:927px;top:97px;width:1px;height:1px;background:#909090"></div>
<div class="a" style="left:922px;top:99px;width:1px;height:1px;background:#fff"></div>
<div class="a" style="left:923px;top:100px;width:1px;height:1px;background:#909090"></div>
<div class="a" style="left:926px;top:99px;width:1px;height:1px;background:#fff"></div>
<div class="a" style="left:927px;top:100px;width:1px;height:1px;background:#909090"></div>
<div class="a" style="left:922px;top:102px;width:1px;height:1px;background:#fff"></div>
<div class="a" style="left:923px;top:103px;width:1px;height:1px;background:#909090"></div>
<div class="a" style="left:926px;top:102px;width:1px;height:1px;background:#fff"></div>
<div class="a" style="left:927px;top:103px;width:1px;height:1px;background:#909090"></div>
<div class="a" style="left:922px;top:124px;width:1px;height:1px;background:#fff"></div>
<div class="a" style="left:923px;top:125px;width:1px;height:1px;background:#909090"></div>
<div class="a" style="left:926px;top:124px;width:1px;height:1px;background:#fff"></div>
<div class="a" style="left:927px;top:125px;width:1px;height:1px;background:#909090"></div>
<div class="a" style="left:922px;top:127px;width:1px;height:1px;background:#fff"></div>
<div class="a" style="left:923px;top:128px;width:1px;height:1px;background:#909090"></div>
<div class="a" style="left:926px;top:127px;width:1px;height:1px;background:#fff"></div>
<div class="a" style="left:927px;top:128px;width:1px;height:1px;background:#909090"></div>
<div class="a" style="left:922px;top:130px;width:1px;height:1px;background:#fff"></div>
<div class="a" style="left:923px;top:131px;width:1px;height:1px;background:#909090"></div>
<div class="a" style="left:926px;top:130px;width:1px;height:1px;background:#fff"></div>
<div class="a" style="left:927px;top:131px;width:1px;height:1px;background:#909090"></div>
<div class="a" style="left:922px;top:137px;width:1px;height:1px;background:#fff"></div>
<div class="a" style="left:923px;top:138px;width:1px;height:1px;background:#909090"></div>
<div class="a" style="left:926px;top:137px;width:1px;height:1px;background:#fff"></div>
<div class="a" style="left:927px;top:138px;width:1px;height:1px;background:#909090"></div>
<div class="a" style="left:922px;top:140px;width:1px;height:1px;background:#fff"></div>
<div class="a" style="left:923px;top:141px;width:1px;height:1px;background:#909090"></div>
<div class="a" style="left:926px;top:140px;width:1px;height:1px;background:#fff"></div>
<div class="a" style="left:927px;top:141px;width:1px;height:1px;background:#909090"></div>
<div class="a" style="left:922px;top:143px;width:1px;height:1px;background:#fff"></div>
<div class="a" style="left:923px;top:144px;width:1px;height:1px;background:#909090"></div>
<div class="a" style="left:926px;top:143px;width:1px;height:1px;background:#fff"></div>
<div class="a" style="left:927px;top:144px;width:1px;height:1px;background:#909090"></div>
<div class="a" style="left:922px;top:167px;width:1px;height:1px;background:#fff"></div>
<div class="a" style="left:923px;top:168px;width:1px;height:1px;background:#909090"></div>
<div class="a" style="left:926px;top:167px;width:1px;height:1px;background:#fff"></div>
<div class="a" style="left:927px;top:168px;width:1px;height:1px;background:#909090"></div>
<div class="a" style="left:922px;top:170px;width:1px;height:1px;background:#fff"></div>
<div class="a" style="left:923px;top:171px;width:1px;height:1px;background:#909090"></div>
<div class="a" style="left:926px;top:170px;width:1px;height:1px;background:#fff"></div>
<div class="a" style="left:927px;top:171px;width:1px;height:1px;background:#909090"></div>
<svg class="a" style="left:920px;top:107px" width="9" height="13" viewBox="0 0 9 13"><polygon points="1.5,1 7.5,6.5 1.5,12" fill="#c8c8c8" stroke="#a0a0a0" stroke-width="1"/><line x1="1" y1="12.5" x2="8" y2="6.5" stroke="#000" stroke-width="1.3"/></svg>
<svg class="a" style="left:919px;top:148px" width="10" height="12" viewBox="0 0 10 12"><ellipse cx="5.5" cy="5" rx="3.6" ry="4" fill="#e8e8e8" stroke="#303030" stroke-width="1.2" transform="rotate(35 5.5 5)"/><ellipse cx="6" cy="4.5" rx="1.5" ry="2" fill="#a0a0a0"/><line x1="1" y1="11.5" x2="3" y2="8.5" stroke="#000" stroke-width="1"/></svg>
<div class="a" style="left:937px;top:103px;width:33px;height:30px;background:#dcdcdc;border-top:1px solid #fff;border-left:1px solid #fff;border-right:2px solid #000;border-bottom:2px solid #000;box-sizing:border-box"></div>
<div class="a" style="left:947px;top:110px;font-family:'Liberation Serif',serif;font-style:italic;font-weight:bold;font-size:13px;line-height:13px;color:#000;will-change:transform">f<span style="font-size:10px">x</span></div>
<div class="a" style="left:983px;top:104px;width:283px;height:27px;background:#fff;border-top:1px solid #000;border-left:1px solid #000;border-right:2px solid #fff;border-bottom:2px solid #fff;box-sizing:border-box"></div>
<div class="a" style="left:1248px;top:105px;width:16px;height:24px;background:#dcdcdc;border-top:2px solid #fff;border-left:2px solid #fff;border-right:1px solid #000;border-bottom:1px solid #000;box-sizing:border-box"></div>
<svg class="a" style="left:1248px;top:115px" width="16" height="6" viewBox="0 0 16 6" shape-rendering="crispEdges"><polygon points="3.5,0 12.5,0 8.0,4.5" fill="#000" shape-rendering="geometricPrecision"/></svg>
<div class="a t" style="left:985.20px;top:108.61px;font-size:17px;line-height:17px;transform:scaleX(1.0212);transform-origin:0 0;">Alle</div>
<div class="a" style="left:938px;top:142px;width:328px;height:732px;background:#fff;border-top:1px solid #000;border-left:1px solid #000;border-right:2px solid #fff;border-bottom:2px solid #fff;box-sizing:border-box"></div>
<div class="a" style="left:939px;top:143px;width:309px;height:729px;overflow:hidden">
<div class="a t" style="left:1.20px;top:1.61px;font-size:17px;line-height:17px;transform:scaleX(0.82);transform-origin:0 0">BININHEX</div>
<div class="a t" style="left:1.20px;top:22.61px;font-size:17px;line-height:17px;transform:scaleX(0.82);transform-origin:0 0">BININOKT</div>
<div class="a t" style="left:1.20px;top:43.61px;font-size:17px;line-height:17px;transform:scaleX(0.82);transform-origin:0 0">BINOMVERT</div>
<div class="a t" style="left:1.20px;top:64.61px;font-size:17px;line-height:17px;transform:scaleX(0.82);transform-origin:0 0">BRTEILJAHRE</div>
<div class="a t" style="left:1.20px;top:85.61px;font-size:17px;line-height:17px;transform:scaleX(0.82);transform-origin:0 0">BW</div>
<div class="a t" style="left:1.20px;top:106.61px;font-size:17px;line-height:17px;transform:scaleX(0.82);transform-origin:0 0">CHIINV</div>
<div class="a t" style="left:1.20px;top:127.61px;font-size:17px;line-height:17px;transform:scaleX(0.82);transform-origin:0 0">CHITEST</div>
<div class="a t" style="left:1.20px;top:148.61px;font-size:17px;line-height:17px;transform:scaleX(0.82);transform-origin:0 0">CHIVERT</div>
<div class="a t" style="left:1.20px;top:169.61px;font-size:17px;line-height:17px;transform:scaleX(0.82);transform-origin:0 0">CODE</div>
<div class="a t" style="left:1.20px;top:190.61px;font-size:17px;line-height:17px;transform:scaleX(0.82);transform-origin:0 0">COS</div>
<div class="a t" style="left:1.20px;top:211.61px;font-size:17px;line-height:17px;transform:scaleX(0.82);transform-origin:0 0">COSHYP</div>
<div class="a t" style="left:1.20px;top:232.61px;font-size:17px;line-height:17px;transform:scaleX(0.82);transform-origin:0 0">COT</div>
<div class="a t" style="left:1.20px;top:253.61px;font-size:17px;line-height:17px;transform:scaleX(0.82);transform-origin:0 0">COTHYP</div>
<div class="a t" style="left:1.20px;top:274.61px;font-size:17px;line-height:17px;transform:scaleX(0.82);transform-origin:0 0">DATUM</div>
<div class="a t" style="left:1.20px;top:295.61px;font-size:17px;line-height:17px;transform:scaleX(0.82);transform-origin:0 0">DATWERT</div>
<div class="a t" style="left:1.20px;top:316.61px;font-size:17px;line-height:17px;transform:scaleX(0.82);transform-origin:0 0">DBANZAHL</div>
<div class="a t" style="left:1.20px;top:337.61px;font-size:17px;line-height:17px;transform:scaleX(0.82);transform-origin:0 0">DBANZAHL2</div>
<div class="a t" style="left:1.20px;top:358.61px;font-size:17px;line-height:17px;transform:scaleX(0.82);transform-origin:0 0">DBAUSZUG</div>
<div class="a t" style="left:1.20px;top:379.61px;font-size:17px;line-height:17px;transform:scaleX(0.82);transform-origin:0 0">DBMAX</div>
<div class="a t" style="left:1.20px;top:400.61px;font-size:17px;line-height:17px;transform:scaleX(0.82);transform-origin:0 0">DBMIN</div>
<div class="a t" style="left:1.20px;top:421.61px;font-size:17px;line-height:17px;transform:scaleX(0.82);transform-origin:0 0">DBMITTELWERT</div>
<div class="a t" style="left:1.20px;top:442.61px;font-size:17px;line-height:17px;transform:scaleX(0.82);transform-origin:0 0">DBPRODUKT</div>
<div class="a t" style="left:1.20px;top:463.61px;font-size:17px;line-height:17px;transform:scaleX(0.82);transform-origin:0 0">DBSTDABW</div>
<div class="a t" style="left:1.20px;top:484.61px;font-size:17px;line-height:17px;transform:scaleX(0.82);transform-origin:0 0">DBSTDABWN</div>
<div class="a t" style="left:1.20px;top:505.61px;font-size:17px;line-height:17px;transform:scaleX(0.82);transform-origin:0 0">DBSUMME</div>
<div class="a t" style="left:1.20px;top:526.61px;font-size:17px;line-height:17px;transform:scaleX(0.82);transform-origin:0 0">DBVARIANZ</div>
<div class="a t" style="left:1.20px;top:547.61px;font-size:17px;line-height:17px;transform:scaleX(0.82);transform-origin:0 0">DBVARIANZEN</div>
<div class="a t" style="left:1.20px;top:568.61px;font-size:17px;line-height:17px;transform:scaleX(0.82);transform-origin:0 0">DDE</div>
<div class="a t" style="left:1.20px;top:589.61px;font-size:17px;line-height:17px;transform:scaleX(0.82);transform-origin:0 0">DEG</div>
<div class="a t" style="left:1.20px;top:610.61px;font-size:17px;line-height:17px;transform:scaleX(0.82);transform-origin:0 0">DELTA</div>
<div class="a t" style="left:1.20px;top:631.61px;font-size:17px;line-height:17px;transform:scaleX(0.82);transform-origin:0 0">DEZIMAL</div>
<div class="a t" style="left:1.20px;top:652.61px;font-size:17px;line-height:17px;transform:scaleX(0.82);transform-origin:0 0">DEZINBIN</div>
<div class="a t" style="left:1.20px;top:673.61px;font-size:17px;line-height:17px;transform:scaleX(0.82);transform-origin:0 0">DEZINHEX</div>
<div class="a t" style="left:1.20px;top:694.61px;font-size:17px;line-height:17px;transform:scaleX(0.82);transform-origin:0 0">DEZINOKT</div>
<div class="a t" style="left:1.20px;top:715.61px;font-size:17px;line-height:17px;transform:scaleX(0.82);transform-origin:0 0">DIA</div>
</div>
<div class="a" style="left:1248px;top:143px;width:16px;height:729px;background:#eeeeee"></div>
<div class="a" style="left:1248px;top:143px;width:16px;height:16px;background:#dcdcdc;border-top:2px solid #fff;border-left:2px solid #fff;border-right:1px solid #000;border-bottom:1px solid #000;box-sizing:border-box"></div>
<svg class="a" style="left:1248px;top:148px" width="16" height="6" viewBox="0 0 16 6" shape-rendering="crispEdges"><polygon points="3.5,5 12.5,5 8.0,0.5" fill="#000" shape-rendering="geometricPrecision"/></svg>
<div class="a" style="left:1248px;top:227px;width:16px;height:64px;background:#dcdcdc;border-top:2px solid #fff;border-left:2px solid #fff;border-right:1px solid #000;border-bottom:1px solid #000;box-sizing:border-box"></div>
<div class="a" style="left:1248px;top:856px;width:16px;height:16px;background:#dcdcdc;border-top:2px solid #fff;border-left:2px solid #fff;border-right:1px solid #000;border-bottom:1px solid #000;box-sizing:border-box"></div>
<svg class="a" style="left:1248px;top:862px" width="16" height="6" viewBox="0 0 16 6" shape-rendering="crispEdges"><polygon points="3.5,0 12.5,0 8.0,4.5" fill="#000" shape-rendering="geometricPrecision"/></svg>
<div class="a" style="left:938px;top:885px;width:328px;height:100px;background:#dcdcdc;border-top:1px solid #000;border-left:1px solid #000;border-right:2px solid #fff;border-bottom:2px solid #fff;box-sizing:border-box"></div>
<div class="a t" style="left:939.40px;top:887.61px;font-size:17px;line-height:17px;transform:scaleX(0.8242);transform-origin:0 0;">ABRUNDEN:</div>
<div class="a t" style="left:939.40px;top:927.61px;font-size:17px;line-height:17px;transform:scaleX(0.9679);transform-origin:0 0;">Zahl; Anzahl</div>
<div class="a t" style="left:944.40px;top:947.61px;font-size:17px;line-height:17px;transform:scaleX(1.0179);transform-origin:0 0;">Rundet eine Zahl auf eine vorgegebene...</div>
<svg class="a" style="left:343px;top:64px" width="16" height="18" shape-rendering="crispEdges"><rect x="8" y="0" width="8" height="1" fill="#000000"/><rect x="9" y="1" width="1" height="1" fill="#000000"/><rect x="10" y="1" width="4" height="1" fill="#00ff00"/><rect x="14" y="1" width="1" height="1" fill="#000000"/><rect x="0" y="2" width="8" height="1" fill="#808080"/><rect x="10" y="2" width="1" height="1" fill="#000000"/><rect x="11" y="2" width="2" height="1" fill="#00ff00"/><rect x="13" y="2" width="1" height="1" fill="#000000"/><rect x="0" y="3" width="1" height="1" fill="#808080"/><rect x="1" y="3" width="9" height="1" fill="#ffffff"/><rect x="12" y="3" width="2" height="1" fill="#000000"/><rect x="0" y="4" width="1" height="1" fill="#808080"/><rect x="1" y="4" width="1" height="1" fill="#ffffff"/><rect x="2" y="4" width="9" height="1" fill="#c0c0c0"/><rect x="11" y="4" width="1" height="1" fill="#ffffff"/><rect x="0" y="5" width="1" height="1" fill="#808080"/><rect x="1" y="5" width="1" height="1" fill="#ffffff"/><rect x="2" y="5" width="1" height="1" fill="#c0c0c0"/><rect x="3" y="5" width="2" height="1" fill="#404040"/><rect x="5" y="5" width="1" height="1" fill="#c0c0c0"/><rect x="6" y="5" width="4" height="1" fill="#404040"/><rect x="10" y="5" width="1" height="1" fill="#c0c0c0"/><rect x="11" y="5" width="1" height="1" fill="#ffffff"/><rect x="12" y="5" width="1" height="1" fill="#000000"/><rect x="0" y="6" width="1" height="1" fill="#808080"/><rect x="1" y="6" width="1" height="1" fill="#ffffff"/><rect x="2" y="6" width="9" height="1" fill="#c0c0c0"/><rect x="11" y="6" width="1" height="1" fill="#ffffff"/><rect x="12" y="6" width="1" height="1" fill="#000000"/><rect x="0" y="7" width="1" height="1" fill="#808080"/><rect x="1" y="7" width="1" height="1" fill="#ffffff"/><rect x="2" y="7" width="1" height="1" fill="#c0c0c0"/><rect x="3" y="7" width="2" height="1" fill="#404040"/><rect x="5" y="7" width="1" height="1" fill="#c0c0c0"/><rect x="6" y="7" width="4" height="1" fill="#ffffff"/><rect x="10" y="7" width="1" height="1" fill="#c0c0c0"/><rect x="11" y="7" width="1" height="1" fill="#ffffff"/><rect x="12" y="7" width="1" height="1" fill="#000000"/><rect x="0" y="8" width="1" height="1" fill="#808080"/><rect x="1" y="8" width="1" height="1" fill="#ffffff"/><rect x="2" y="8" width="9" height="1" fill="#c0c0c0"/><rect x="11" y="8" width="1" height="1" fill="#ffffff"/><rect x="12" y="8" width="1" height="1" fill="#000000"/><rect x="0" y="9" width="1" height="1" fill="#808080"/><rect x="1" y="9" width="1" height="1" fill="#ffffff"/><rect x="2" y="9" width="1" height="1" fill="#c0c0c0"/><rect x="3" y="9" width="2" height="1" fill="#404040"/><rect x="5" y="9" width="1" height="1" fill="#c0c0c0"/><rect x="6" y="9" width="4" height="1" fill="#ffffff"/><rect x="10" y="9" width="1" height="1" fill="#c0c0c0"/><rect x="11" y="9" width="1" height="1" fill="#ffffff"/><rect x="12" y="9" width="1" height="1" fill="#000000"/><rect x="0" y="10" width="1" height="1" fill="#808080"/><rect x="1" y="10" width="1" height="1" fill="#ffffff"/><rect x="2" y="10" width="8" height="1" fill="#c0c0c0"/><rect x="10" y="10" width="1" height="1" fill="#800080"/><rect x="11" y="10" width="1" height="1" fill="#0000ff"/><rect x="12" y="10" width="1" height="1" fill="#000000"/><rect x="0" y="11" width="1" height="1" fill="#808080"/><rect x="1" y="11" width="1" height="1" fill="#ffffff"/><rect x="2" y="11" width="1" height="1" fill="#c0c0c0"/><rect x="3" y="11" width="2" height="1" fill="#404040"/><rect x="5" y="11" width="1" height="1" fill="#c0c0c0"/><rect x="6" y="11" width="2" height="1" fill="#ffffff"/><rect x="8" y="11" width="1" height="1" fill="#000000"/><rect x="9" y="11" width="1" height="1" fill="#800080"/><rect x="10" y="11" width="1" height="1" fill="#0000ff"/><rect x="11" y="11" width="1" height="1" fill="#ffffff"/><rect x="12" y="11" width="1" height="1" fill="#000000"/><rect x="0" y="12" width="1" height="1" fill="#808080"/><rect x="1" y="12" width="1" height="1" fill="#ffffff"/><rect x="2" y="12" width="5" height="1" fill="#c0c0c0"/><rect x="7" y="12" width="2" height="1" fill="#0000ff"/><rect x="9" y="12" width="1" height="1" fill="#800080"/><rect x="10" y="12" width="1" height="1" fill="#0000ff"/><rect x="11" y="12" width="1" height="1" fill="#ffffff"/><rect x="12" y="12" width="1" height="1" fill="#000000"/><rect x="0" y="13" width="1" height="1" fill="#808080"/><rect x="1" y="13" width="1" height="1" fill="#ffffff"/><rect x="2" y="13" width="1" height="1" fill="#c0c0c0"/><rect x="3" y="13" width="2" height="1" fill="#404040"/><rect x="5" y="13" width="1" height="1" fill="#c0c0c0"/><rect x="6" y="13" width="3" height="1" fill="#0000ff"/><rect x="9" y="13" width="1" height="1" fill="#800080"/><rect x="10" y="13" width="1" height="1" fill="#0000ff"/><rect x="11" y="13" width="1" height="1" fill="#ffffff"/><rect x="12" y="13" width="1" height="1" fill="#000000"/><rect x="0" y="14" width="1" height="1" fill="#808080"/><rect x="1" y="14" width="1" height="1" fill="#ffffff"/><rect x="2" y="14" width="9" height="1" fill="#c0c0c0"/><rect x="11" y="14" width="1" height="1" fill="#ffffff"/><rect x="12" y="14" width="1" height="1" fill="#000000"/><rect x="0" y="15" width="1" height="1" fill="#808080"/><rect x="1" y="15" width="11" height="1" fill="#ffffff"/><rect x="12" y="15" width="1" height="1" fill="#000000"/><rect x="0" y="16" width="1" height="1" fill="#808080"/><rect x="1" y="16" width="11" height="1" fill="#ffffff"/><rect x="12" y="16" width="1" height="1" fill="#000000"/><rect x="0" y="17" width="13" height="1" fill="#000000"/></svg>
<svg class="a" style="left:365px;top:68px" width="16" height="12" shape-rendering="crispEdges"><rect x="7" y="0" width="3" height="1" fill="#000000"/><rect x="6" y="1" width="1" height="1" fill="#000000"/><rect x="10" y="1" width="1" height="1" fill="#000000"/><rect x="12" y="1" width="1" height="1" fill="#000000"/><rect x="1" y="2" width="3" height="1" fill="#000000"/><rect x="11" y="2" width="2" height="1" fill="#000000"/><rect x="0" y="3" width="1" height="1" fill="#000000"/><rect x="1" y="3" width="2" height="1" fill="#ffff00"/><rect x="3" y="3" width="1" height="1" fill="#ffffff"/><rect x="4" y="3" width="5" height="1" fill="#000000"/><rect x="10" y="3" width="3" height="1" fill="#000000"/><rect x="0" y="4" width="1" height="1" fill="#000000"/><rect x="1" y="4" width="1" height="1" fill="#ffff00"/><rect x="2" y="4" width="1" height="1" fill="#ffffff"/><rect x="3" y="4" width="2" height="1" fill="#ffff00"/><rect x="5" y="4" width="1" height="1" fill="#ffffff"/><rect x="6" y="4" width="2" height="1" fill="#ffff00"/><rect x="8" y="4" width="1" height="1" fill="#000000"/><rect x="0" y="5" width="1" height="1" fill="#000000"/><rect x="1" y="5" width="2" height="1" fill="#ffff00"/><rect x="3" y="5" width="1" height="1" fill="#ffffff"/><rect x="4" y="5" width="2" height="1" fill="#ffff00"/><rect x="6" y="5" width="1" height="1" fill="#ffffff"/><rect x="7" y="5" width="1" height="1" fill="#ffff00"/><rect x="8" y="5" width="1" height="1" fill="#000000"/><rect x="0" y="6" width="1" height="1" fill="#000000"/><rect x="1" y="6" width="1" height="1" fill="#ffff00"/><rect x="2" y="6" width="1" height="1" fill="#ffffff"/><rect x="3" y="6" width="1" height="1" fill="#ffff00"/><rect x="4" y="6" width="11" height="1" fill="#000000"/><rect x="0" y="7" width="1" height="1" fill="#000000"/><rect x="1" y="7" width="2" height="1" fill="#ffff00"/><rect x="3" y="7" width="1" height="1" fill="#000000"/><rect x="4" y="7" width="9" height="1" fill="#808000"/><rect x="13" y="7" width="1" height="1" fill="#000000"/><rect x="0" y="8" width="1" height="1" fill="#000000"/><rect x="1" y="8" width="1" height="1" fill="#ffff00"/><rect x="2" y="8" width="1" height="1" fill="#000000"/><rect x="3" y="8" width="9" height="1" fill="#808000"/><rect x="12" y="8" width="1" height="1" fill="#000000"/><rect x="0" y="9" width="2" height="1" fill="#000000"/><rect x="2" y="9" width="9" height="1" fill="#808000"/><rect x="11" y="9" width="1" height="1" fill="#000000"/><rect x="0" y="10" width="1" height="1" fill="#000000"/><rect x="1" y="10" width="9" height="1" fill="#808000"/><rect x="10" y="10" width="1" height="1" fill="#000000"/><rect x="0" y="11" width="10" height="1" fill="#000000"/></svg>
<svg class="a" style="left:389px;top:68px" width="14" height="13" shape-rendering="crispEdges"><rect x="0" y="0" width="14" height="1" fill="#000000"/><rect x="0" y="1" width="1" height="1" fill="#000000"/><rect x="1" y="1" width="1" height="1" fill="#808000"/><rect x="2" y="1" width="1" height="1" fill="#000000"/><rect x="3" y="1" width="7" height="1" fill="#ffffff"/><rect x="10" y="1" width="2" height="1" fill="#000000"/><rect x="12" y="1" width="1" height="1" fill="#ffffff"/><rect x="13" y="1" width="1" height="1" fill="#000000"/><rect x="0" y="2" width="1" height="1" fill="#000000"/><rect x="1" y="2" width="1" height="1" fill="#808000"/><rect x="2" y="2" width="1" height="1" fill="#000000"/><rect x="3" y="2" width="1" height="1" fill="#ffffff"/><rect x="4" y="2" width="1" height="1" fill="#c0c0c0"/><rect x="5" y="2" width="1" height="1" fill="#ffffff"/><rect x="6" y="2" width="1" height="1" fill="#c0c0c0"/><rect x="7" y="2" width="1" height="1" fill="#ffffff"/><rect x="8" y="2" width="1" height="1" fill="#c0c0c0"/><rect x="9" y="2" width="1" height="1" fill="#ffffff"/><rect x="10" y="2" width="2" height="1" fill="#000000"/><rect x="12" y="2" width="1" height="1" fill="#808000"/><rect x="13" y="2" width="1" height="1" fill="#000000"/><rect x="0" y="3" width="1" height="1" fill="#000000"/><rect x="1" y="3" width="1" height="1" fill="#808000"/><rect x="2" y="3" width="1" height="1" fill="#000000"/><rect x="3" y="3" width="2" height="1" fill="#ffffff"/><rect x="5" y="3" width="1" height="1" fill="#c0c0c0"/><rect x="6" y="3" width="1" height="1" fill="#ffffff"/><rect x="7" y="3" width="1" height="1" fill="#c0c0c0"/><rect x="8" y="3" width="2" height="1" fill="#ffffff"/><rect x="10" y="3" width="2" height="1" fill="#000000"/><rect x="12" y="3" width="1" height="1" fill="#808000"/><rect x="13" y="3" width="1" height="1" fill="#000000"/><rect x="0" y="4" width="1" height="1" fill="#000000"/><rect x="1" y="4" width="1" height="1" fill="#808000"/><rect x="2" y="4" width="1" height="1" fill="#000000"/><rect x="3" y="4" width="1" height="1" fill="#ffffff"/><rect x="4" y="4" width="1" height="1" fill="#c0c0c0"/><rect x="5" y="4" width="1" height="1" fill="#ffffff"/><rect x="6" y="4" width="1" height="1" fill="#c0c0c0"/><rect x="7" y="4" width="1" height="1" fill="#ffffff"/><rect x="8" y="4" width="1" height="1" fill="#c0c0c0"/><rect x="9" y="4" width="1" height="1" fill="#ffffff"/><rect x="10" y="4" width="2" height="1" fill="#000000"/><rect x="12" y="4" width="1" height="1" fill="#808000"/><rect x="13" y="4" width="1" height="1" fill="#000000"/><rect x="0" y="5" width="1" height="1" fill="#000000"/><rect x="1" y="5" width="1" height="1" fill="#808000"/><rect x="2" y="5" width="1" height="1" fill="#000000"/><rect x="3" y="5" width="7" height="1" fill="#ffffff"/><rect x="10" y="5" width="2" height="1" fill="#000000"/><rect x="12" y="5" width="1" height="1" fill="#808000"/><rect x="13" y="5" width="1" height="1" fill="#000000"/><rect x="0" y="6" width="1" height="1" fill="#000000"/><rect x="1" y="6" width="2" height="1" fill="#808000"/><rect x="3" y="6" width="8" height="1" fill="#000000"/><rect x="11" y="6" width="2" height="1" fill="#808000"/><rect x="13" y="6" width="1" height="1" fill="#000000"/><rect x="0" y="7" width="1" height="1" fill="#000000"/><rect x="1" y="7" width="12" height="1" fill="#808000"/><rect x="13" y="7" width="1" height="1" fill="#000000"/><rect x="0" y="8" width="1" height="1" fill="#000000"/><rect x="1" y="8" width="1" height="1" fill="#808000"/><rect x="2" y="8" width="10" height="1" fill="#000000"/><rect x="12" y="8" width="1" height="1" fill="#808000"/><rect x="13" y="8" width="1" height="1" fill="#000000"/><rect x="0" y="9" width="1" height="1" fill="#000000"/><rect x="1" y="9" width="1" height="1" fill="#808000"/><rect x="2" y="9" width="2" height="1" fill="#000000"/><rect x="4" y="9" width="1" height="1" fill="#ffffff"/><rect x="5" y="9" width="3" height="1" fill="#000000"/><rect x="8" y="9" width="2" height="1" fill="#ffffff"/><rect x="10" y="9" width="2" height="1" fill="#000000"/><rect x="12" y="9" width="1" height="1" fill="#808000"/><rect x="13" y="9" width="1" height="1" fill="#000000"/><rect x="0" y="10" width="1" height="1" fill="#000000"/><rect x="1" y="10" width="1" height="1" fill="#808000"/><rect x="2" y="10" width="1" height="1" fill="#000000"/><rect x="3" y="10" width="1" height="1" fill="#ffffff"/><rect x="4" y="10" width="1" height="1" fill="#000000"/><rect x="5" y="10" width="1" height="1" fill="#ffffff"/><rect x="6" y="10" width="2" height="1" fill="#000000"/><rect x="8" y="10" width="2" height="1" fill="#ffffff"/><rect x="10" y="10" width="2" height="1" fill="#000000"/><rect x="12" y="10" width="1" height="1" fill="#808000"/><rect x="13" y="10" width="1" height="1" fill="#000000"/><rect x="0" y="11" width="1" height="1" fill="#000000"/><rect x="1" y="11" width="1" height="1" fill="#808000"/><rect x="2" y="11" width="2" height="1" fill="#000000"/><rect x="4" y="11" width="1" height="1" fill="#ffffff"/><rect x="5" y="11" width="3" height="1" fill="#000000"/><rect x="8" y="11" width="2" height="1" fill="#ffffff"/><rect x="10" y="11" width="2" height="1" fill="#000000"/><rect x="12" y="11" width="1" height="1" fill="#808000"/><rect x="13" y="11" width="1" height="1" fill="#000000"/><rect x="0" y="12" width="14" height="1" fill="#000000"/></svg>
<svg class="a" style="left:418px;top:68px" width="16" height="13" shape-rendering="crispEdges"><rect x="0" y="0" width="10" height="1" fill="#808080"/><rect x="0" y="1" width="1" height="1" fill="#808080"/><rect x="1" y="1" width="8" height="1" fill="#ffffff"/><rect x="9" y="1" width="1" height="1" fill="#808080"/><rect x="14" y="1" width="2" height="1" fill="#ffffff"/><rect x="0" y="2" width="1" height="1" fill="#808080"/><rect x="1" y="2" width="1" height="1" fill="#ffffff"/><rect x="2" y="2" width="6" height="1" fill="#808080"/><rect x="8" y="2" width="1" height="1" fill="#ffffff"/><rect x="9" y="2" width="1" height="1" fill="#808080"/><rect x="13" y="2" width="2" height="1" fill="#808080"/><rect x="0" y="3" width="1" height="1" fill="#808080"/><rect x="1" y="3" width="8" height="1" fill="#ffffff"/><rect x="9" y="3" width="1" height="1" fill="#808080"/><rect x="12" y="3" width="2" height="1" fill="#808080"/><rect x="0" y="4" width="1" height="1" fill="#808080"/><rect x="1" y="4" width="1" height="1" fill="#ffffff"/><rect x="2" y="4" width="2" height="1" fill="#808080"/><rect x="4" y="4" width="1" height="1" fill="#ffffff"/><rect x="5" y="4" width="3" height="1" fill="#808080"/><rect x="8" y="4" width="1" height="1" fill="#ffffff"/><rect x="9" y="4" width="1" height="1" fill="#808080"/><rect x="11" y="4" width="2" height="1" fill="#808080"/><rect x="0" y="5" width="1" height="1" fill="#808080"/><rect x="1" y="5" width="4" height="1" fill="#ffffff"/><rect x="5" y="5" width="3" height="1" fill="#808080"/><rect x="8" y="5" width="1" height="1" fill="#ffffff"/><rect x="9" y="5" width="3" height="1" fill="#808080"/><rect x="0" y="6" width="1" height="1" fill="#808080"/><rect x="1" y="6" width="1" height="1" fill="#ffffff"/><rect x="2" y="6" width="2" height="1" fill="#808080"/><rect x="4" y="6" width="1" height="1" fill="#ffffff"/><rect x="5" y="6" width="3" height="1" fill="#808080"/><rect x="8" y="6" width="1" height="1" fill="#ffffff"/><rect x="9" y="6" width="2" height="1" fill="#808080"/><rect x="0" y="7" width="1" height="1" fill="#808080"/><rect x="1" y="7" width="7" height="1" fill="#ffffff"/><rect x="8" y="7" width="2" height="1" fill="#808080"/><rect x="10" y="7" width="1" height="1" fill="#ffffff"/><rect x="0" y="8" width="1" height="1" fill="#808080"/><rect x="1" y="8" width="1" height="1" fill="#ffffff"/><rect x="2" y="8" width="7" height="1" fill="#808080"/><rect x="9" y="8" width="2" height="1" fill="#ffffff"/><rect x="0" y="9" width="1" height="1" fill="#808080"/><rect x="1" y="9" width="8" height="1" fill="#ffffff"/><rect x="9" y="9" width="1" height="1" fill="#808080"/><rect x="0" y="10" width="1" height="1" fill="#808080"/><rect x="1" y="10" width="1" height="1" fill="#ffffff"/><rect x="2" y="10" width="6" height="1" fill="#808080"/><rect x="8" y="10" width="1" height="1" fill="#ffffff"/><rect x="9" y="10" width="1" height="1" fill="#808080"/><rect x="0" y="11" width="1" height="1" fill="#808080"/><rect x="1" y="11" width="8" height="1" fill="#ffffff"/><rect x="9" y="11" width="1" height="1" fill="#808080"/><rect x="0" y="12" width="10" height="1" fill="#808080"/></svg>
<svg class="a" style="left:452px;top:66px" width="14" height="16" shape-rendering="crispEdges"><rect x="0" y="0" width="10" height="1" fill="#808080"/><rect x="11" y="0" width="1" height="1" fill="#000000"/><rect x="0" y="1" width="1" height="1" fill="#808080"/><rect x="1" y="1" width="9" height="1" fill="#ffffff"/><rect x="10" y="1" width="1" height="1" fill="#000000"/><rect x="11" y="1" width="1" height="1" fill="#ff0000"/><rect x="12" y="1" width="1" height="1" fill="#000000"/><rect x="0" y="2" width="1" height="1" fill="#808080"/><rect x="1" y="2" width="1" height="1" fill="#ffffff"/><rect x="2" y="2" width="4" height="1" fill="#0000ff"/><rect x="6" y="2" width="1" height="1" fill="#ffffff"/><rect x="7" y="2" width="1" height="1" fill="#0000ff"/><rect x="8" y="2" width="2" height="1" fill="#ffffff"/><rect x="10" y="2" width="1" height="1" fill="#000000"/><rect x="11" y="2" width="2" height="1" fill="#ff0000"/><rect x="13" y="2" width="1" height="1" fill="#000000"/><rect x="0" y="3" width="1" height="1" fill="#808080"/><rect x="1" y="3" width="10" height="1" fill="#ffffff"/><rect x="11" y="3" width="3" height="1" fill="#000000"/><rect x="0" y="4" width="1" height="1" fill="#808080"/><rect x="1" y="4" width="1" height="1" fill="#ffffff"/><rect x="2" y="4" width="2" height="1" fill="#0000ff"/><rect x="4" y="4" width="1" height="1" fill="#ffffff"/><rect x="5" y="4" width="3" height="1" fill="#0000ff"/><rect x="8" y="4" width="5" height="1" fill="#ffffff"/><rect x="13" y="4" width="1" height="1" fill="#000000"/><rect x="0" y="5" width="1" height="1" fill="#808080"/><rect x="1" y="5" width="12" height="1" fill="#ffffff"/><rect x="13" y="5" width="1" height="1" fill="#000000"/><rect x="0" y="6" width="1" height="1" fill="#808080"/><rect x="1" y="6" width="1" height="1" fill="#ffffff"/><rect x="2" y="6" width="3" height="1" fill="#0000ff"/><rect x="5" y="6" width="1" height="1" fill="#ffffff"/><rect x="6" y="6" width="4" height="1" fill="#0000ff"/><rect x="10" y="6" width="3" height="1" fill="#ffffff"/><rect x="13" y="6" width="1" height="1" fill="#000000"/><rect x="0" y="7" width="1" height="1" fill="#808080"/><rect x="1" y="7" width="12" height="1" fill="#ffffff"/><rect x="13" y="7" width="1" height="1" fill="#000000"/><rect x="0" y="8" width="1" height="1" fill="#808080"/><rect x="1" y="8" width="1" height="1" fill="#ffffff"/><rect x="2" y="8" width="5" height="1" fill="#0000ff"/><rect x="7" y="8" width="1" height="1" fill="#ffffff"/><rect x="8" y="8" width="3" height="1" fill="#0000ff"/><rect x="11" y="8" width="2" height="1" fill="#ffffff"/><rect x="13" y="8" width="1" height="1" fill="#000000"/><rect x="0" y="9" width="1" height="1" fill="#808080"/><rect x="1" y="9" width="12" height="1" fill="#ffffff"/><rect x="13" y="9" width="1" height="1" fill="#000000"/><rect x="0" y="10" width="1" height="1" fill="#808080"/><rect x="1" y="10" width="12" height="1" fill="#ff0000"/><rect x="13" y="10" width="1" height="1" fill="#000000"/><rect x="0" y="11" width="1" height="1" fill="#808080"/><rect x="1" y="11" width="1" height="1" fill="#ff0000"/><rect x="2" y="11" width="1" height="1" fill="#ffffff"/><rect x="3" y="11" width="2" height="1" fill="#ff0000"/><rect x="5" y="11" width="1" height="1" fill="#ffffff"/><rect x="6" y="11" width="2" height="1" fill="#ff0000"/><rect x="8" y="11" width="1" height="1" fill="#ffffff"/><rect x="9" y="11" width="4" height="1" fill="#ff0000"/><rect x="13" y="11" width="1" height="1" fill="#000000"/><rect x="0" y="12" width="1" height="1" fill="#808080"/><rect x="1" y="12" width="1" height="1" fill="#ff0000"/><rect x="2" y="12" width="1" height="1" fill="#ffffff"/><rect x="3" y="12" width="2" height="1" fill="#ff0000"/><rect x="5" y="12" width="1" height="1" fill="#ffffff"/><rect x="6" y="12" width="2" height="1" fill="#ff0000"/><rect x="8" y="12" width="1" height="1" fill="#ffffff"/><rect x="9" y="12" width="4" height="1" fill="#ff0000"/><rect x="13" y="12" width="1" height="1" fill="#000000"/><rect x="0" y="13" width="1" height="1" fill="#808080"/><rect x="1" y="13" width="12" height="1" fill="#ff0000"/><rect x="13" y="13" width="1" height="1" fill="#000000"/><rect x="0" y="14" width="1" height="1" fill="#808080"/><rect x="1" y="14" width="12" height="1" fill="#ff0000"/><rect x="13" y="14" width="1" height="1" fill="#000000"/><rect x="0" y="15" width="14" height="1" fill="#000000"/></svg>
<svg class="a" style="left:629px;top:67px" width="16" height="12" shape-rendering="crispEdges"><rect x="5" y="0" width="9" height="1" fill="#000000"/><rect x="4" y="1" width="1" height="1" fill="#000000"/><rect x="5" y="1" width="1" height="1" fill="#ffffff"/><rect x="6" y="1" width="5" height="1" fill="#0000ff"/><rect x="11" y="1" width="1" height="1" fill="#ffffff"/><rect x="12" y="1" width="1" height="1" fill="#000000"/><rect x="13" y="1" width="1" height="1" fill="#ffffff"/><rect x="4" y="2" width="1" height="1" fill="#000000"/><rect x="5" y="2" width="6" height="1" fill="#ffffff"/><rect x="11" y="2" width="1" height="1" fill="#000000"/><rect x="12" y="2" width="1" height="1" fill="#ffffff"/><rect x="3" y="3" width="1" height="1" fill="#000000"/><rect x="4" y="3" width="1" height="1" fill="#ffffff"/><rect x="5" y="3" width="5" height="1" fill="#0000ff"/><rect x="10" y="3" width="1" height="1" fill="#ffffff"/><rect x="11" y="3" width="1" height="1" fill="#000000"/><rect x="12" y="3" width="1" height="1" fill="#ffffff"/><rect x="13" y="3" width="1" height="1" fill="#000000"/><rect x="14" y="3" width="1" height="1" fill="#ffffff"/><rect x="2" y="4" width="1" height="1" fill="#000000"/><rect x="3" y="4" width="8" height="1" fill="#ffffff"/><rect x="11" y="4" width="1" height="1" fill="#000000"/><rect x="12" y="4" width="1" height="1" fill="#ffffff"/><rect x="13" y="4" width="1" height="1" fill="#000000"/><rect x="14" y="4" width="1" height="1" fill="#ffffff"/><rect x="15" y="4" width="1" height="1" fill="#000000"/><rect x="1" y="5" width="11" height="1" fill="#000000"/><rect x="12" y="5" width="1" height="1" fill="#ffffff"/><rect x="13" y="5" width="1" height="1" fill="#000000"/><rect x="14" y="5" width="1" height="1" fill="#ffffff"/><rect x="15" y="5" width="1" height="1" fill="#000000"/><rect x="0" y="6" width="1" height="1" fill="#000000"/><rect x="1" y="6" width="11" height="1" fill="#ffffff"/><rect x="12" y="6" width="1" height="1" fill="#000000"/><rect x="13" y="6" width="1" height="1" fill="#ffffff"/><rect x="14" y="6" width="2" height="1" fill="#000000"/><rect x="0" y="7" width="12" height="1" fill="#000000"/><rect x="12" y="7" width="1" height="1" fill="#ffffff"/><rect x="13" y="7" width="1" height="1" fill="#000000"/><rect x="14" y="7" width="1" height="1" fill="#ffffff"/><rect x="15" y="7" width="1" height="1" fill="#000000"/><rect x="0" y="8" width="1" height="1" fill="#000000"/><rect x="1" y="8" width="6" height="1" fill="#ffffff"/><rect x="7" y="8" width="3" height="1" fill="#00ff00"/><rect x="10" y="8" width="2" height="1" fill="#ffffff"/><rect x="12" y="8" width="1" height="1" fill="#000000"/><rect x="13" y="8" width="1" height="1" fill="#ffffff"/><rect x="14" y="8" width="2" height="1" fill="#000000"/><rect x="0" y="9" width="13" height="1" fill="#000000"/><rect x="13" y="9" width="1" height="1" fill="#ffffff"/><rect x="14" y="9" width="1" height="1" fill="#000000"/><rect x="1" y="10" width="1" height="1" fill="#000000"/><rect x="2" y="10" width="10" height="1" fill="#ffffff"/><rect x="12" y="10" width="1" height="1" fill="#000000"/><rect x="13" y="10" width="1" height="1" fill="#ffffff"/><rect x="14" y="10" width="1" height="1" fill="#000000"/><rect x="2" y="11" width="12" height="1" fill="#000000"/></svg>
<svg class="a" style="left:663px;top:67px" width="10" height="14" shape-rendering="crispEdges"><rect x="2" y="0" width="1" height="1" fill="#a0a0a0"/><rect x="6" y="0" width="1" height="1" fill="#a0a0a0"/><rect x="2" y="1" width="1" height="1" fill="#000080"/><rect x="6" y="1" width="1" height="1" fill="#000080"/><rect x="2" y="2" width="2" height="1" fill="#000080"/><rect x="5" y="2" width="2" height="1" fill="#000080"/><rect x="3" y="3" width="1" height="1" fill="#000080"/><rect x="5" y="3" width="1" height="1" fill="#000080"/><rect x="3" y="4" width="3" height="1" fill="#000080"/><rect x="4" y="5" width="1" height="1" fill="#000080"/><rect x="3" y="6" width="3" height="1" fill="#000080"/><rect x="2" y="7" width="2" height="1" fill="#000080"/><rect x="5" y="7" width="2" height="1" fill="#000080"/><rect x="1" y="8" width="3" height="1" fill="#000080"/><rect x="5" y="8" width="3" height="1" fill="#000080"/><rect x="0" y="9" width="1" height="1" fill="#000080"/><rect x="3" y="9" width="1" height="1" fill="#000080"/><rect x="5" y="9" width="1" height="1" fill="#000080"/><rect x="8" y="9" width="1" height="1" fill="#000080"/><rect x="0" y="10" width="1" height="1" fill="#000080"/><rect x="3" y="10" width="1" height="1" fill="#000080"/><rect x="5" y="10" width="1" height="1" fill="#000080"/><rect x="8" y="10" width="1" height="1" fill="#000080"/><rect x="0" y="11" width="1" height="1" fill="#000080"/><rect x="2" y="11" width="1" height="1" fill="#000080"/><rect x="6" y="11" width="1" height="1" fill="#000080"/><rect x="8" y="11" width="1" height="1" fill="#000080"/><rect x="0" y="12" width="2" height="1" fill="#000080"/><rect x="7" y="12" width="2" height="1" fill="#000080"/><rect x="1" y="13" width="1" height="1" fill="#000080"/><rect x="7" y="13" width="1" height="1" fill="#000080"/></svg>
<svg class="a" style="left:684px;top:67px" width="16" height="13" shape-rendering="crispEdges"><rect x="0" y="0" width="6" height="1" fill="#000080"/><rect x="0" y="1" width="1" height="1" fill="#000080"/><rect x="1" y="1" width="5" height="1" fill="#ffffff"/><rect x="6" y="1" width="1" height="1" fill="#000080"/><rect x="0" y="2" width="1" height="1" fill="#000080"/><rect x="1" y="2" width="1" height="1" fill="#ffffff"/><rect x="2" y="2" width="2" height="1" fill="#000000"/><rect x="4" y="2" width="3" height="1" fill="#ffffff"/><rect x="7" y="2" width="1" height="1" fill="#000080"/><rect x="0" y="3" width="1" height="1" fill="#000080"/><rect x="1" y="3" width="5" height="1" fill="#ffffff"/><rect x="6" y="3" width="6" height="1" fill="#000080"/><rect x="0" y="4" width="1" height="1" fill="#000080"/><rect x="1" y="4" width="1" height="1" fill="#ffffff"/><rect x="2" y="4" width="3" height="1" fill="#000000"/><rect x="5" y="4" width="1" height="1" fill="#ffffff"/><rect x="6" y="4" width="1" height="1" fill="#000080"/><rect x="7" y="4" width="5" height="1" fill="#ffffff"/><rect x="12" y="4" width="1" height="1" fill="#000080"/><rect x="0" y="5" width="1" height="1" fill="#000080"/><rect x="1" y="5" width="5" height="1" fill="#ffffff"/><rect x="6" y="5" width="1" height="1" fill="#000080"/><rect x="7" y="5" width="1" height="1" fill="#ffffff"/><rect x="8" y="5" width="2" height="1" fill="#000000"/><rect x="10" y="5" width="3" height="1" fill="#ffffff"/><rect x="13" y="5" width="1" height="1" fill="#000080"/><rect x="0" y="6" width="1" height="1" fill="#000080"/><rect x="1" y="6" width="1" height="1" fill="#ffffff"/><rect x="2" y="6" width="3" height="1" fill="#000000"/><rect x="5" y="6" width="1" height="1" fill="#ffffff"/><rect x="6" y="6" width="1" height="1" fill="#000080"/><rect x="7" y="6" width="6" height="1" fill="#ffffff"/><rect x="13" y="6" width="1" height="1" fill="#000080"/><rect x="0" y="7" width="1" height="1" fill="#000080"/><rect x="1" y="7" width="5" height="1" fill="#ffffff"/><rect x="6" y="7" width="1" height="1" fill="#000080"/><rect x="7" y="7" width="1" height="1" fill="#ffffff"/><rect x="8" y="7" width="4" height="1" fill="#000000"/><rect x="12" y="7" width="1" height="1" fill="#ffffff"/><rect x="13" y="7" width="1" height="1" fill="#000080"/><rect x="0" y="8" width="7" height="1" fill="#000080"/><rect x="7" y="8" width="6" height="1" fill="#ffffff"/><rect x="13" y="8" width="1" height="1" fill="#000080"/><rect x="6" y="9" width="1" height="1" fill="#000080"/><rect x="7" y="9" width="1" height="1" fill="#ffffff"/><rect x="8" y="9" width="4" height="1" fill="#000000"/><rect x="12" y="9" width="1" height="1" fill="#ffffff"/><rect x="13" y="9" width="1" height="1" fill="#000080"/><rect x="6" y="10" width="1" height="1" fill="#000080"/><rect x="7" y="10" width="6" height="1" fill="#ffffff"/><rect x="13" y="10" width="1" height="1" fill="#000080"/><rect x="6" y="11" width="1" height="1" fill="#000080"/><rect x="7" y="11" width="6" height="1" fill="#ffffff"/><rect x="13" y="11" width="1" height="1" fill="#000080"/><rect x="6" y="12" width="8" height="1" fill="#000080"/></svg>
<svg class="a" style="left:706px;top:64px" width="18" height="15" shape-rendering="crispEdges"><rect x="10" y="0" width="7" height="1" fill="#000000"/><rect x="11" y="1" width="1" height="1" fill="#000000"/><rect x="12" y="1" width="3" height="1" fill="#00ff00"/><rect x="15" y="1" width="1" height="1" fill="#000000"/><rect x="12" y="2" width="1" height="1" fill="#000000"/><rect x="13" y="2" width="1" height="1" fill="#00ff00"/><rect x="14" y="2" width="1" height="1" fill="#000000"/><rect x="4" y="3" width="5" height="1" fill="#000000"/><rect x="13" y="3" width="1" height="1" fill="#000000"/><rect x="1" y="4" width="4" height="1" fill="#000000"/><rect x="5" y="4" width="3" height="1" fill="#ffff00"/><rect x="8" y="4" width="4" height="1" fill="#000000"/><rect x="13" y="4" width="1" height="1" fill="#000000"/><rect x="0" y="5" width="2" height="1" fill="#000000"/><rect x="2" y="5" width="1" height="1" fill="#808000"/><rect x="3" y="5" width="1" height="1" fill="#c0c0c0"/><rect x="4" y="5" width="6" height="1" fill="#000000"/><rect x="10" y="5" width="1" height="1" fill="#c0c0c0"/><rect x="11" y="5" width="1" height="1" fill="#808000"/><rect x="12" y="5" width="2" height="1" fill="#000000"/><rect x="0" y="6" width="1" height="1" fill="#000000"/><rect x="1" y="6" width="1" height="1" fill="#c0c0c0"/><rect x="2" y="6" width="1" height="1" fill="#808000"/><rect x="3" y="6" width="1" height="1" fill="#c0c0c0"/><rect x="4" y="6" width="1" height="1" fill="#808000"/><rect x="5" y="6" width="1" height="1" fill="#c0c0c0"/><rect x="6" y="6" width="1" height="1" fill="#808000"/><rect x="7" y="6" width="1" height="1" fill="#c0c0c0"/><rect x="8" y="6" width="1" height="1" fill="#808000"/><rect x="9" y="6" width="1" height="1" fill="#c0c0c0"/><rect x="10" y="6" width="1" height="1" fill="#808000"/><rect x="11" y="6" width="1" height="1" fill="#c0c0c0"/><rect x="12" y="6" width="1" height="1" fill="#000000"/><rect x="0" y="7" width="1" height="1" fill="#000000"/><rect x="1" y="7" width="1" height="1" fill="#808000"/><rect x="2" y="7" width="1" height="1" fill="#c0c0c0"/><rect x="3" y="7" width="1" height="1" fill="#808000"/><rect x="4" y="7" width="1" height="1" fill="#c0c0c0"/><rect x="5" y="7" width="1" height="1" fill="#808000"/><rect x="6" y="7" width="1" height="1" fill="#c0c0c0"/><rect x="7" y="7" width="1" height="1" fill="#808000"/><rect x="8" y="7" width="7" height="1" fill="#000080"/><rect x="0" y="8" width="1" height="1" fill="#000000"/><rect x="1" y="8" width="1" height="1" fill="#c0c0c0"/><rect x="2" y="8" width="1" height="1" fill="#808000"/><rect x="3" y="8" width="1" height="1" fill="#c0c0c0"/><rect x="4" y="8" width="1" height="1" fill="#808000"/><rect x="5" y="8" width="1" height="1" fill="#c0c0c0"/><rect x="6" y="8" width="1" height="1" fill="#808000"/><rect x="7" y="8" width="1" height="1" fill="#c0c0c0"/><rect x="8" y="8" width="1" height="1" fill="#000080"/><rect x="9" y="8" width="5" height="1" fill="#ffffff"/><rect x="14" y="8" width="1" height="1" fill="#000080"/><rect x="0" y="9" width="1" height="1" fill="#000000"/><rect x="1" y="9" width="1" height="1" fill="#808000"/><rect x="2" y="9" width="1" height="1" fill="#c0c0c0"/><rect x="3" y="9" width="1" height="1" fill="#808000"/><rect x="4" y="9" width="1" height="1" fill="#c0c0c0"/><rect x="5" y="9" width="1" height="1" fill="#808000"/><rect x="6" y="9" width="1" height="1" fill="#c0c0c0"/><rect x="7" y="9" width="1" height="1" fill="#808000"/><rect x="8" y="9" width="1" height="1" fill="#000080"/><rect x="9" y="9" width="1" height="1" fill="#ffffff"/><rect x="10" y="9" width="2" height="1" fill="#000000"/><rect x="12" y="9" width="2" height="1" fill="#ffffff"/><rect x="14" y="9" width="1" height="1" fill="#000080"/><rect x="0" y="10" width="1" height="1" fill="#000000"/><rect x="1" y="10" width="1" height="1" fill="#c0c0c0"/><rect x="2" y="10" width="1" height="1" fill="#808000"/><rect x="3" y="10" width="1" height="1" fill="#c0c0c0"/><rect x="4" y="10" width="1" height="1" fill="#808000"/><rect x="5" y="10" width="1" height="1" fill="#c0c0c0"/><rect x="6" y="10" width="1" height="1" fill="#808000"/><rect x="7" y="10" width="1" height="1" fill="#c0c0c0"/><rect x="8" y="10" width="1" height="1" fill="#000080"/><rect x="9" y="10" width="5" height="1" fill="#ffffff"/><rect x="14" y="10" width="1" height="1" fill="#000080"/><rect x="0" y="11" width="1" height="1" fill="#000000"/><rect x="1" y="11" width="1" height="1" fill="#808000"/><rect x="2" y="11" width="1" height="1" fill="#c0c0c0"/><rect x="3" y="11" width="1" height="1" fill="#808000"/><rect x="4" y="11" width="1" height="1" fill="#c0c0c0"/><rect x="5" y="11" width="1" height="1" fill="#808000"/><rect x="6" y="11" width="1" height="1" fill="#c0c0c0"/><rect x="7" y="11" width="1" height="1" fill="#808000"/><rect x="8" y="11" width="1" height="1" fill="#000080"/><rect x="9" y="11" width="1" height="1" fill="#ffffff"/><rect x="10" y="11" width="3" height="1" fill="#000000"/><rect x="13" y="11" width="1" height="1" fill="#ffffff"/><rect x="14" y="11" width="1" height="1" fill="#000080"/><rect x="0" y="12" width="1" height="1" fill="#000000"/><rect x="1" y="12" width="1" height="1" fill="#c0c0c0"/><rect x="2" y="12" width="1" height="1" fill="#808000"/><rect x="3" y="12" width="1" height="1" fill="#c0c0c0"/><rect x="4" y="12" width="1" height="1" fill="#808000"/><rect x="5" y="12" width="1" height="1" fill="#c0c0c0"/><rect x="6" y="12" width="1" height="1" fill="#808000"/><rect x="7" y="12" width="1" height="1" fill="#c0c0c0"/><rect x="8" y="12" width="1" height="1" fill="#000080"/><rect x="9" y="12" width="5" height="1" fill="#ffffff"/><rect x="14" y="12" width="1" height="1" fill="#000080"/><rect x="0" y="13" width="1" height="1" fill="#000000"/><rect x="1" y="13" width="1" height="1" fill="#808000"/><rect x="2" y="13" width="1" height="1" fill="#c0c0c0"/><rect x="3" y="13" width="1" height="1" fill="#808000"/><rect x="4" y="13" width="1" height="1" fill="#c0c0c0"/><rect x="5" y="13" width="1" height="1" fill="#808000"/><rect x="6" y="13" width="1" height="1" fill="#c0c0c0"/><rect x="7" y="13" width="1" height="1" fill="#808000"/><rect x="8" y="13" width="1" height="1" fill="#000080"/><rect x="9" y="13" width="5" height="1" fill="#ffffff"/><rect x="14" y="13" width="1" height="1" fill="#000080"/><rect x="1" y="14" width="7" height="1" fill="#000000"/><rect x="8" y="14" width="7" height="1" fill="#000080"/></svg>
<svg class="a" style="left:737px;top:64px" width="18" height="15" shape-rendering="crispEdges"><rect x="10" y="0" width="7" height="1" fill="#000000"/><rect x="11" y="1" width="1" height="1" fill="#000000"/><rect x="12" y="1" width="3" height="1" fill="#00ff00"/><rect x="15" y="1" width="1" height="1" fill="#000000"/><rect x="12" y="2" width="1" height="1" fill="#000000"/><rect x="13" y="2" width="1" height="1" fill="#00ff00"/><rect x="14" y="2" width="1" height="1" fill="#000000"/><rect x="13" y="3" width="1" height="1" fill="#000000"/><rect x="1" y="6" width="13" height="1" fill="#000080"/><rect x="1" y="7" width="14" height="1" fill="#000080"/><rect x="13" y="8" width="3" height="1" fill="#000080"/><rect x="3" y="9" width="1" height="1" fill="#000080"/><rect x="14" y="9" width="2" height="1" fill="#000080"/><rect x="2" y="10" width="2" height="1" fill="#000080"/><rect x="13" y="10" width="3" height="1" fill="#000080"/><rect x="1" y="11" width="14" height="1" fill="#000080"/><rect x="1" y="12" width="13" height="1" fill="#000080"/><rect x="2" y="13" width="2" height="1" fill="#000080"/><rect x="3" y="14" width="1" height="1" fill="#000080"/></svg>
<svg class="a" style="left:760px;top:64px" width="18" height="15" shape-rendering="crispEdges"><rect x="10" y="0" width="7" height="1" fill="#a0a0a0"/><rect x="11" y="1" width="5" height="1" fill="#a0a0a0"/><rect x="12" y="2" width="3" height="1" fill="#a0a0a0"/><rect x="13" y="3" width="1" height="1" fill="#a0a0a0"/><rect x="1" y="6" width="13" height="1" fill="#a0a0a0"/><rect x="1" y="7" width="14" height="1" fill="#a0a0a0"/><rect x="13" y="8" width="3" height="1" fill="#a0a0a0"/><rect x="4" y="9" width="1" height="1" fill="#a0a0a0"/><rect x="14" y="9" width="2" height="1" fill="#a0a0a0"/><rect x="4" y="10" width="2" height="1" fill="#a0a0a0"/><rect x="13" y="10" width="3" height="1" fill="#a0a0a0"/><rect x="1" y="11" width="7" height="1" fill="#a0a0a0"/><rect x="9" y="11" width="6" height="1" fill="#a0a0a0"/><rect x="1" y="12" width="7" height="1" fill="#a0a0a0"/><rect x="9" y="12" width="5" height="1" fill="#a0a0a0"/><rect x="4" y="13" width="2" height="1" fill="#a0a0a0"/><rect x="4" y="14" width="1" height="1" fill="#a0a0a0"/></svg>
<svg class="a" style="left:791px;top:67px" width="17" height="15" shape-rendering="crispEdges"><rect x="8" y="0" width="1" height="1" fill="#000000"/><rect x="7" y="1" width="1" height="1" fill="#ffffff"/><rect x="8" y="1" width="1" height="1" fill="#000000"/><rect x="9" y="1" width="1" height="1" fill="#000080"/><rect x="7" y="2" width="1" height="1" fill="#ffffff"/><rect x="8" y="2" width="1" height="1" fill="#000000"/><rect x="9" y="2" width="2" height="1" fill="#000080"/><rect x="6" y="3" width="2" height="1" fill="#ffffff"/><rect x="8" y="3" width="1" height="1" fill="#000000"/><rect x="9" y="3" width="1" height="1" fill="#000080"/><rect x="10" y="3" width="1" height="1" fill="#ffffff"/><rect x="3" y="4" width="1" height="1" fill="#000080"/><rect x="5" y="4" width="1" height="1" fill="#000080"/><rect x="6" y="4" width="2" height="1" fill="#ffffff"/><rect x="8" y="4" width="1" height="1" fill="#000000"/><rect x="9" y="4" width="2" height="1" fill="#ffffff"/><rect x="2" y="5" width="1" height="1" fill="#000080"/><rect x="3" y="5" width="1" height="1" fill="#ffffff"/><rect x="4" y="5" width="1" height="1" fill="#000080"/><rect x="5" y="5" width="1" height="1" fill="#ffffff"/><rect x="6" y="5" width="1" height="1" fill="#000080"/><rect x="7" y="5" width="1" height="1" fill="#ffffff"/><rect x="8" y="5" width="1" height="1" fill="#000000"/><rect x="9" y="5" width="3" height="1" fill="#ffffff"/><rect x="1" y="6" width="7" height="1" fill="#ffffff"/><rect x="8" y="6" width="1" height="1" fill="#000000"/><rect x="9" y="6" width="6" height="1" fill="#ffffff"/><rect x="0" y="7" width="17" height="1" fill="#000000"/><rect x="2" y="8" width="5" height="1" fill="#ffffff"/><rect x="7" y="8" width="1" height="1" fill="#000080"/><rect x="8" y="8" width="1" height="1" fill="#000000"/><rect x="9" y="8" width="1" height="1" fill="#ffffff"/><rect x="10" y="8" width="1" height="1" fill="#000080"/><rect x="11" y="8" width="1" height="1" fill="#ffffff"/><rect x="12" y="8" width="1" height="1" fill="#000080"/><rect x="13" y="8" width="1" height="1" fill="#ffffff"/><rect x="14" y="8" width="1" height="1" fill="#000080"/><rect x="5" y="9" width="1" height="1" fill="#ffffff"/><rect x="6" y="9" width="2" height="1" fill="#000080"/><rect x="8" y="9" width="1" height="1" fill="#000000"/><rect x="9" y="9" width="2" height="1" fill="#ffffff"/><rect x="11" y="9" width="1" height="1" fill="#000080"/><rect x="12" y="9" width="1" height="1" fill="#ffffff"/><rect x="13" y="9" width="1" height="1" fill="#000080"/><rect x="6" y="10" width="2" height="1" fill="#000080"/><rect x="8" y="10" width="1" height="1" fill="#000000"/><rect x="9" y="10" width="2" height="1" fill="#ffffff"/><rect x="6" y="11" width="1" height="1" fill="#000080"/><rect x="7" y="11" width="1" height="1" fill="#ffffff"/><rect x="8" y="11" width="1" height="1" fill="#000000"/><rect x="9" y="11" width="1" height="1" fill="#ffffff"/><rect x="7" y="12" width="1" height="1" fill="#000080"/><rect x="8" y="12" width="1" height="1" fill="#000000"/><rect x="9" y="12" width="1" height="1" fill="#ffffff"/><rect x="7" y="13" width="1" height="1" fill="#000080"/><rect x="8" y="13" width="1" height="1" fill="#000000"/><rect x="8" y="14" width="1" height="1" fill="#000000"/></svg>
<svg class="a" style="left:814px;top:67px" width="17" height="12" shape-rendering="crispEdges"><rect x="6" y="0" width="1" height="1" fill="#000000"/><rect x="7" y="0" width="8" height="1" fill="#ffff00"/><rect x="5" y="1" width="1" height="1" fill="#000000"/><rect x="6" y="1" width="1" height="1" fill="#ffffff"/><rect x="7" y="1" width="1" height="1" fill="#000000"/><rect x="8" y="1" width="6" height="1" fill="#ffff00"/><rect x="3" y="2" width="1" height="1" fill="#a0a0a0"/><rect x="6" y="2" width="1" height="1" fill="#000000"/><rect x="7" y="2" width="1" height="1" fill="#ffffff"/><rect x="8" y="2" width="1" height="1" fill="#000000"/><rect x="9" y="2" width="6" height="1" fill="#ffff00"/><rect x="3" y="3" width="1" height="1" fill="#a0a0a0"/><rect x="6" y="3" width="1" height="1" fill="#ffffff"/><rect x="7" y="3" width="1" height="1" fill="#000000"/><rect x="8" y="3" width="1" height="1" fill="#ffffff"/><rect x="9" y="3" width="3" height="1" fill="#ffff00"/><rect x="13" y="3" width="2" height="1" fill="#000000"/><rect x="1" y="4" width="5" height="1" fill="#a0a0a0"/><rect x="7" y="4" width="1" height="1" fill="#000000"/><rect x="8" y="4" width="1" height="1" fill="#ffffff"/><rect x="10" y="4" width="2" height="1" fill="#ffff00"/><rect x="12" y="4" width="1" height="1" fill="#000000"/><rect x="3" y="5" width="1" height="1" fill="#a0a0a0"/><rect x="7" y="5" width="1" height="1" fill="#000000"/><rect x="8" y="5" width="1" height="1" fill="#ffffff"/><rect x="9" y="5" width="2" height="1" fill="#ffff00"/><rect x="11" y="5" width="2" height="1" fill="#000000"/><rect x="3" y="6" width="1" height="1" fill="#a0a0a0"/><rect x="8" y="6" width="3" height="1" fill="#000000"/><rect x="3" y="7" width="1" height="1" fill="#a0a0a0"/><rect x="8" y="7" width="1" height="1" fill="#000000"/><rect x="9" y="7" width="1" height="1" fill="#ffff00"/><rect x="2" y="9" width="3" height="1" fill="#000000"/><rect x="8" y="9" width="3" height="1" fill="#000000"/><rect x="2" y="10" width="1" height="1" fill="#000000"/><rect x="3" y="10" width="1" height="1" fill="#008080"/><rect x="4" y="10" width="1" height="1" fill="#000000"/><rect x="8" y="10" width="1" height="1" fill="#000000"/><rect x="9" y="10" width="1" height="1" fill="#000080"/><rect x="10" y="10" width="1" height="1" fill="#000000"/><rect x="1" y="11" width="5" height="1" fill="#000000"/><rect x="7" y="11" width="5" height="1" fill="#000000"/></svg>
<svg class="a" style="left:837px;top:67px" width="16" height="15" shape-rendering="crispEdges"><rect x="0" y="0" width="6" height="1" fill="#808080"/><rect x="0" y="1" width="1" height="1" fill="#808080"/><rect x="1" y="1" width="5" height="1" fill="#ffffff"/><rect x="6" y="1" width="1" height="1" fill="#808080"/><rect x="0" y="2" width="1" height="1" fill="#808080"/><rect x="1" y="2" width="1" height="1" fill="#ffffff"/><rect x="2" y="2" width="2" height="1" fill="#808080"/><rect x="4" y="2" width="3" height="1" fill="#ffffff"/><rect x="7" y="2" width="1" height="1" fill="#808080"/><rect x="0" y="3" width="1" height="1" fill="#808080"/><rect x="1" y="3" width="6" height="1" fill="#ffffff"/><rect x="7" y="3" width="1" height="1" fill="#808080"/><rect x="0" y="4" width="1" height="1" fill="#808080"/><rect x="1" y="4" width="1" height="1" fill="#ffffff"/><rect x="2" y="4" width="4" height="1" fill="#808080"/><rect x="6" y="4" width="1" height="1" fill="#ffffff"/><rect x="7" y="4" width="1" height="1" fill="#808080"/><rect x="0" y="5" width="1" height="1" fill="#808080"/><rect x="1" y="5" width="5" height="1" fill="#ffffff"/><rect x="6" y="5" width="4" height="1" fill="#000000"/><rect x="0" y="6" width="1" height="1" fill="#808080"/><rect x="1" y="6" width="1" height="1" fill="#ffffff"/><rect x="2" y="6" width="3" height="1" fill="#808080"/><rect x="5" y="6" width="1" height="1" fill="#000000"/><rect x="6" y="6" width="2" height="1" fill="#00ff00"/><rect x="8" y="6" width="2" height="1" fill="#0000ff"/><rect x="10" y="6" width="1" height="1" fill="#00ff00"/><rect x="11" y="6" width="1" height="1" fill="#000000"/><rect x="0" y="7" width="1" height="1" fill="#808080"/><rect x="1" y="7" width="3" height="1" fill="#ffffff"/><rect x="4" y="7" width="1" height="1" fill="#000000"/><rect x="5" y="7" width="2" height="1" fill="#00ff00"/><rect x="7" y="7" width="3" height="1" fill="#0000ff"/><rect x="10" y="7" width="2" height="1" fill="#00ff00"/><rect x="12" y="7" width="1" height="1" fill="#000000"/><rect x="0" y="8" width="1" height="1" fill="#808080"/><rect x="1" y="8" width="1" height="1" fill="#ffffff"/><rect x="2" y="8" width="2" height="1" fill="#808080"/><rect x="4" y="8" width="1" height="1" fill="#000000"/><rect x="5" y="8" width="1" height="1" fill="#00ff00"/><rect x="6" y="8" width="4" height="1" fill="#0000ff"/><rect x="10" y="8" width="1" height="1" fill="#00ff00"/><rect x="11" y="8" width="1" height="1" fill="#808000"/><rect x="12" y="8" width="1" height="1" fill="#000000"/><rect x="0" y="9" width="1" height="1" fill="#808080"/><rect x="1" y="9" width="2" height="1" fill="#ffffff"/><rect x="3" y="9" width="1" height="1" fill="#000000"/><rect x="4" y="9" width="2" height="1" fill="#00ff00"/><rect x="6" y="9" width="5" height="1" fill="#0000ff"/><rect x="11" y="9" width="2" height="1" fill="#00ff00"/><rect x="13" y="9" width="1" height="1" fill="#000000"/><rect x="0" y="10" width="3" height="1" fill="#808080"/><rect x="3" y="10" width="1" height="1" fill="#000000"/><rect x="4" y="10" width="2" height="1" fill="#00ff00"/><rect x="6" y="10" width="3" height="1" fill="#0000ff"/><rect x="9" y="10" width="2" height="1" fill="#00ff00"/><rect x="11" y="10" width="2" height="1" fill="#0000ff"/><rect x="13" y="10" width="1" height="1" fill="#000000"/><rect x="3" y="11" width="1" height="1" fill="#000000"/><rect x="4" y="11" width="1" height="1" fill="#00ff00"/><rect x="5" y="11" width="5" height="1" fill="#0000ff"/><rect x="10" y="11" width="2" height="1" fill="#00ff00"/><rect x="12" y="11" width="1" height="1" fill="#0000ff"/><rect x="13" y="11" width="1" height="1" fill="#000000"/><rect x="3" y="12" width="1" height="1" fill="#000000"/><rect x="4" y="12" width="2" height="1" fill="#00ff00"/><rect x="6" y="12" width="3" height="1" fill="#0000ff"/><rect x="9" y="12" width="3" height="1" fill="#00ff00"/><rect x="12" y="12" width="1" height="1" fill="#0000ff"/><rect x="13" y="12" width="1" height="1" fill="#000000"/><rect x="4" y="13" width="1" height="1" fill="#000000"/><rect x="5" y="13" width="2" height="1" fill="#0000ff"/><rect x="7" y="13" width="1" height="1" fill="#00ff00"/><rect x="8" y="13" width="3" height="1" fill="#0000ff"/><rect x="11" y="13" width="1" height="1" fill="#808000"/><rect x="12" y="13" width="1" height="1" fill="#000000"/><rect x="5" y="14" width="6" height="1" fill="#000000"/></svg>
<div class="a" style="left:873px;top:71px;width:10px;height:10px;border-radius:50%;background:#800000;box-shadow:inset 0 0 0 1px #ff0000, 1px 1px 0 #000"></div>
<svg class="a" style="left:899px;top:66px" width="17" height="15" shape-rendering="crispEdges"><rect x="7" y="0" width="3" height="1" fill="#000000"/><rect x="6" y="1" width="1" height="1" fill="#000000"/><rect x="10" y="1" width="1" height="1" fill="#000000"/><rect x="5" y="2" width="1" height="1" fill="#000000"/><rect x="11" y="2" width="1" height="1" fill="#000000"/><rect x="0" y="3" width="16" height="1" fill="#ffff00"/><rect x="16" y="3" width="1" height="1" fill="#000000"/><rect x="0" y="4" width="1" height="1" fill="#ffff00"/><rect x="1" y="4" width="1" height="1" fill="#00ffff"/><rect x="2" y="4" width="1" height="1" fill="#ffffff"/><rect x="3" y="4" width="1" height="1" fill="#00ffff"/><rect x="4" y="4" width="1" height="1" fill="#ffffff"/><rect x="5" y="4" width="1" height="1" fill="#00ffff"/><rect x="6" y="4" width="1" height="1" fill="#ffffff"/><rect x="7" y="4" width="1" height="1" fill="#00ffff"/><rect x="8" y="4" width="1" height="1" fill="#ffffff"/><rect x="9" y="4" width="1" height="1" fill="#00ffff"/><rect x="10" y="4" width="1" height="1" fill="#ffffff"/><rect x="11" y="4" width="1" height="1" fill="#00ffff"/><rect x="12" y="4" width="1" height="1" fill="#ffffff"/><rect x="13" y="4" width="1" height="1" fill="#00ffff"/><rect x="14" y="4" width="1" height="1" fill="#ffffff"/><rect x="15" y="4" width="1" height="1" fill="#00ffff"/><rect x="16" y="4" width="1" height="1" fill="#000000"/><rect x="0" y="5" width="1" height="1" fill="#ffff00"/><rect x="1" y="5" width="1" height="1" fill="#ffffff"/><rect x="2" y="5" width="1" height="1" fill="#00ffff"/><rect x="3" y="5" width="1" height="1" fill="#ffffff"/><rect x="4" y="5" width="1" height="1" fill="#00ffff"/><rect x="5" y="5" width="1" height="1" fill="#ffffff"/><rect x="6" y="5" width="1" height="1" fill="#00ffff"/><rect x="7" y="5" width="1" height="1" fill="#ffffff"/><rect x="8" y="5" width="1" height="1" fill="#00ffff"/><rect x="9" y="5" width="1" height="1" fill="#ffffff"/><rect x="10" y="5" width="1" height="1" fill="#00ffff"/><rect x="11" y="5" width="1" height="1" fill="#ffffff"/><rect x="12" y="5" width="1" height="1" fill="#00ffff"/><rect x="13" y="5" width="1" height="1" fill="#ffffff"/><rect x="14" y="5" width="1" height="1" fill="#00ffff"/><rect x="15" y="5" width="1" height="1" fill="#ffffff"/><rect x="16" y="5" width="1" height="1" fill="#ff0000"/><rect x="0" y="6" width="1" height="1" fill="#ffff00"/><rect x="1" y="6" width="1" height="1" fill="#00ffff"/><rect x="2" y="6" width="1" height="1" fill="#ffffff"/><rect x="3" y="6" width="1" height="1" fill="#00ffff"/><rect x="4" y="6" width="1" height="1" fill="#ffffff"/><rect x="5" y="6" width="1" height="1" fill="#00ffff"/><rect x="6" y="6" width="1" height="1" fill="#ffffff"/><rect x="7" y="6" width="1" height="1" fill="#ff0000"/><rect x="8" y="6" width="1" height="1" fill="#00ffff"/><rect x="9" y="6" width="1" height="1" fill="#ffffff"/><rect x="10" y="6" width="1" height="1" fill="#00ffff"/><rect x="11" y="6" width="1" height="1" fill="#ffffff"/><rect x="12" y="6" width="1" height="1" fill="#00ffff"/><rect x="13" y="6" width="1" height="1" fill="#ffffff"/><rect x="14" y="6" width="2" height="1" fill="#00ffff"/><rect x="16" y="6" width="1" height="1" fill="#000000"/><rect x="0" y="7" width="1" height="1" fill="#ffff00"/><rect x="1" y="7" width="1" height="1" fill="#ffffff"/><rect x="2" y="7" width="1" height="1" fill="#00ffff"/><rect x="3" y="7" width="1" height="1" fill="#ffffff"/><rect x="4" y="7" width="1" height="1" fill="#00ffff"/><rect x="5" y="7" width="1" height="1" fill="#ffffff"/><rect x="6" y="7" width="3" height="1" fill="#ff0000"/><rect x="9" y="7" width="1" height="1" fill="#00ffff"/><rect x="10" y="7" width="1" height="1" fill="#ffffff"/><rect x="11" y="7" width="1" height="1" fill="#00ffff"/><rect x="12" y="7" width="1" height="1" fill="#ffffff"/><rect x="13" y="7" width="1" height="1" fill="#00ffff"/><rect x="14" y="7" width="1" height="1" fill="#ffffff"/><rect x="15" y="7" width="1" height="1" fill="#00ffff"/><rect x="16" y="7" width="1" height="1" fill="#ff0000"/><rect x="0" y="8" width="1" height="1" fill="#ffff00"/><rect x="1" y="8" width="1" height="1" fill="#00ffff"/><rect x="2" y="8" width="1" height="1" fill="#ffffff"/><rect x="3" y="8" width="1" height="1" fill="#00ffff"/><rect x="4" y="8" width="1" height="1" fill="#ffffff"/><rect x="5" y="8" width="2" height="1" fill="#ff0000"/><rect x="7" y="8" width="1" height="1" fill="#ffffff"/><rect x="8" y="8" width="2" height="1" fill="#ff0000"/><rect x="10" y="8" width="1" height="1" fill="#00ffff"/><rect x="11" y="8" width="1" height="1" fill="#ffffff"/><rect x="12" y="8" width="1" height="1" fill="#00ffff"/><rect x="13" y="8" width="1" height="1" fill="#ffffff"/><rect x="14" y="8" width="2" height="1" fill="#00ffff"/><rect x="16" y="8" width="1" height="1" fill="#000000"/><rect x="0" y="9" width="1" height="1" fill="#ffff00"/><rect x="1" y="9" width="1" height="1" fill="#ffffff"/><rect x="2" y="9" width="1" height="1" fill="#00ffff"/><rect x="3" y="9" width="1" height="1" fill="#ffffff"/><rect x="4" y="9" width="2" height="1" fill="#ff0000"/><rect x="6" y="9" width="3" height="1" fill="#ffffff"/><rect x="9" y="9" width="2" height="1" fill="#ff0000"/><rect x="11" y="9" width="1" height="1" fill="#00ffff"/><rect x="12" y="9" width="1" height="1" fill="#ffffff"/><rect x="13" y="9" width="1" height="1" fill="#00ffff"/><rect x="14" y="9" width="1" height="1" fill="#ffffff"/><rect x="15" y="9" width="1" height="1" fill="#00ffff"/><rect x="16" y="9" width="1" height="1" fill="#ff0000"/><rect x="0" y="10" width="1" height="1" fill="#ffff00"/><rect x="1" y="10" width="1" height="1" fill="#00ffff"/><rect x="2" y="10" width="1" height="1" fill="#ffffff"/><rect x="3" y="10" width="2" height="1" fill="#ff0000"/><rect x="5" y="10" width="5" height="1" fill="#ffffff"/><rect x="10" y="10" width="2" height="1" fill="#ff0000"/><rect x="12" y="10" width="1" height="1" fill="#ffffff"/><rect x="13" y="10" width="1" height="1" fill="#00ffff"/><rect x="14" y="10" width="1" height="1" fill="#ffffff"/><rect x="15" y="10" width="1" height="1" fill="#00ffff"/><rect x="16" y="10" width="1" height="1" fill="#000000"/><rect x="0" y="11" width="1" height="1" fill="#ffff00"/><rect x="1" y="11" width="3" height="1" fill="#00ff00"/><rect x="4" y="11" width="3" height="1" fill="#ffffff"/><rect x="7" y="11" width="1" height="1" fill="#000000"/><rect x="8" y="11" width="3" height="1" fill="#ffffff"/><rect x="11" y="11" width="5" height="1" fill="#00ff00"/><rect x="16" y="11" width="1" height="1" fill="#ff0000"/><rect x="0" y="12" width="1" height="1" fill="#ffff00"/><rect x="1" y="12" width="4" height="1" fill="#00ff00"/><rect x="5" y="12" width="1" height="1" fill="#ffffff"/><rect x="6" y="12" width="1" height="1" fill="#000000"/><rect x="7" y="12" width="1" height="1" fill="#ffffff"/><rect x="8" y="12" width="1" height="1" fill="#000000"/><rect x="9" y="12" width="2" height="1" fill="#ffffff"/><rect x="11" y="12" width="5" height="1" fill="#00ff00"/><rect x="16" y="12" width="1" height="1" fill="#000000"/><rect x="0" y="13" width="1" height="1" fill="#ffff00"/><rect x="1" y="13" width="4" height="1" fill="#00ff00"/><rect x="5" y="13" width="1" height="1" fill="#ffffff"/><rect x="6" y="13" width="1" height="1" fill="#000000"/><rect x="7" y="13" width="1" height="1" fill="#ffffff"/><rect x="8" y="13" width="1" height="1" fill="#000000"/><rect x="9" y="13" width="1" height="1" fill="#ffffff"/><rect x="10" y="13" width="6" height="1" fill="#00ff00"/><rect x="16" y="13" width="1" height="1" fill="#ff0000"/><rect x="0" y="14" width="1" height="1" fill="#000000"/><rect x="1" y="14" width="1" height="1" fill="#ff0000"/><rect x="2" y="14" width="1" height="1" fill="#000000"/><rect x="3" y="14" width="1" height="1" fill="#ff0000"/><rect x="4" y="14" width="1" height="1" fill="#000000"/><rect x="5" y="14" width="1" height="1" fill="#ff0000"/><rect x="6" y="14" width="1" height="1" fill="#000000"/><rect x="7" y="14" width="1" height="1" fill="#ff0000"/><rect x="8" y="14" width="1" height="1" fill="#000000"/><rect x="9" y="14" width="1" height="1" fill="#ff0000"/><rect x="10" y="14" width="1" height="1" fill="#000000"/><rect x="11" y="14" width="1" height="1" fill="#ff0000"/><rect x="12" y="14" width="1" height="1" fill="#000000"/><rect x="13" y="14" width="1" height="1" fill="#ff0000"/><rect x="14" y="14" width="1" height="1" fill="#000000"/><rect x="15" y="14" width="1" height="1" fill="#ff0000"/><rect x="16" y="14" width="1" height="1" fill="#000000"/></svg>
<svg class="a" style="left:930px;top:66px" width="16" height="16" shape-rendering="crispEdges"><rect x="4" y="0" width="2" height="1" fill="#a0a0a0"/><rect x="10" y="0" width="1" height="1" fill="#a0a0a0"/><rect x="3" y="1" width="1" height="1" fill="#a0a0a0"/><rect x="4" y="1" width="1" height="1" fill="#ffffff"/><rect x="5" y="1" width="2" height="1" fill="#a0a0a0"/><rect x="9" y="1" width="2" height="1" fill="#a0a0a0"/><rect x="3" y="2" width="1" height="1" fill="#a0a0a0"/><rect x="4" y="2" width="2" height="1" fill="#ffffff"/><rect x="6" y="2" width="3" height="1" fill="#a0a0a0"/><rect x="9" y="2" width="1" height="1" fill="#ffffff"/><rect x="10" y="2" width="1" height="1" fill="#a0a0a0"/><rect x="0" y="3" width="2" height="1" fill="#a0a0a0"/><rect x="3" y="3" width="1" height="1" fill="#a0a0a0"/><rect x="4" y="3" width="3" height="1" fill="#ffffff"/><rect x="7" y="3" width="1" height="1" fill="#a0a0a0"/><rect x="8" y="3" width="2" height="1" fill="#ffffff"/><rect x="10" y="3" width="1" height="1" fill="#a0a0a0"/><rect x="0" y="4" width="1" height="1" fill="#a0a0a0"/><rect x="1" y="4" width="1" height="1" fill="#ffffff"/><rect x="2" y="4" width="3" height="1" fill="#a0a0a0"/><rect x="5" y="4" width="4" height="1" fill="#ffffff"/><rect x="9" y="4" width="2" height="1" fill="#a0a0a0"/><rect x="0" y="5" width="1" height="1" fill="#a0a0a0"/><rect x="1" y="5" width="1" height="1" fill="#ffffff"/><rect x="4" y="5" width="2" height="1" fill="#a0a0a0"/><rect x="6" y="5" width="2" height="1" fill="#ffffff"/><rect x="8" y="5" width="2" height="1" fill="#a0a0a0"/><rect x="0" y="6" width="1" height="1" fill="#a0a0a0"/><rect x="1" y="6" width="1" height="1" fill="#ffffff"/><rect x="6" y="6" width="3" height="1" fill="#a0a0a0"/><rect x="10" y="6" width="1" height="1" fill="#a0a0a0"/><rect x="0" y="7" width="1" height="1" fill="#a0a0a0"/><rect x="1" y="7" width="1" height="1" fill="#ffffff"/><rect x="8" y="7" width="1" height="1" fill="#a0a0a0"/><rect x="10" y="7" width="2" height="1" fill="#a0a0a0"/><rect x="0" y="8" width="1" height="1" fill="#a0a0a0"/><rect x="1" y="8" width="1" height="1" fill="#ffffff"/><rect x="9" y="8" width="4" height="1" fill="#a0a0a0"/><rect x="0" y="9" width="1" height="1" fill="#a0a0a0"/><rect x="1" y="9" width="1" height="1" fill="#ffffff"/><rect x="7" y="9" width="1" height="1" fill="#a0a0a0"/><rect x="8" y="9" width="1" height="1" fill="#ffffff"/><rect x="10" y="9" width="4" height="1" fill="#a0a0a0"/><rect x="0" y="10" width="1" height="1" fill="#a0a0a0"/><rect x="1" y="10" width="1" height="1" fill="#ffffff"/><rect x="7" y="10" width="1" height="1" fill="#a0a0a0"/><rect x="8" y="10" width="1" height="1" fill="#ffffff"/><rect x="11" y="10" width="2" height="1" fill="#a0a0a0"/><rect x="0" y="11" width="1" height="1" fill="#a0a0a0"/><rect x="1" y="11" width="1" height="1" fill="#ffffff"/><rect x="7" y="11" width="1" height="1" fill="#a0a0a0"/><rect x="8" y="11" width="1" height="1" fill="#ffffff"/><rect x="11" y="11" width="1" height="1" fill="#a0a0a0"/><rect x="0" y="12" width="1" height="1" fill="#a0a0a0"/><rect x="1" y="12" width="1" height="1" fill="#ffffff"/><rect x="7" y="12" width="1" height="1" fill="#a0a0a0"/><rect x="8" y="12" width="1" height="1" fill="#ffffff"/><rect x="0" y="13" width="1" height="1" fill="#a0a0a0"/><rect x="1" y="13" width="1" height="1" fill="#ffffff"/><rect x="7" y="13" width="1" height="1" fill="#a0a0a0"/><rect x="8" y="13" width="1" height="1" fill="#ffffff"/><rect x="0" y="14" width="9" height="1" fill="#a0a0a0"/><rect x="9" y="14" width="1" height="1" fill="#ffffff"/><rect x="0" y="15" width="9" height="1" fill="#ffffff"/></svg>
<svg class="a" style="left:953px;top:67px" width="17" height="15" shape-rendering="crispEdges"><rect x="15" y="0" width="1" height="1" fill="#000000"/><rect x="0" y="1" width="7" height="1" fill="#000080"/><rect x="14" y="1" width="2" height="1" fill="#000000"/><rect x="0" y="2" width="1" height="1" fill="#000080"/><rect x="1" y="2" width="5" height="1" fill="#ffffff"/><rect x="6" y="2" width="2" height="1" fill="#000080"/><rect x="13" y="2" width="2" height="1" fill="#000000"/><rect x="0" y="3" width="1" height="1" fill="#000080"/><rect x="1" y="3" width="5" height="1" fill="#ffffff"/><rect x="6" y="3" width="1" height="1" fill="#000080"/><rect x="7" y="3" width="1" height="1" fill="#ffffff"/><rect x="8" y="3" width="1" height="1" fill="#000080"/><rect x="12" y="3" width="3" height="1" fill="#000000"/><rect x="0" y="4" width="1" height="1" fill="#000080"/><rect x="1" y="4" width="5" height="1" fill="#ffffff"/><rect x="6" y="4" width="4" height="1" fill="#000080"/><rect x="11" y="4" width="1" height="1" fill="#000000"/><rect x="12" y="4" width="1" height="1" fill="#ffffff"/><rect x="13" y="4" width="2" height="1" fill="#000000"/><rect x="0" y="5" width="1" height="1" fill="#000080"/><rect x="1" y="5" width="8" height="1" fill="#ffffff"/><rect x="9" y="5" width="1" height="1" fill="#000080"/><rect x="11" y="5" width="3" height="1" fill="#000000"/><rect x="0" y="6" width="1" height="1" fill="#000080"/><rect x="1" y="6" width="8" height="1" fill="#ffffff"/><rect x="9" y="6" width="1" height="1" fill="#000080"/><rect x="10" y="6" width="4" height="1" fill="#000000"/><rect x="0" y="7" width="1" height="1" fill="#000080"/><rect x="1" y="7" width="8" height="1" fill="#ffffff"/><rect x="9" y="7" width="5" height="1" fill="#000000"/><rect x="0" y="8" width="1" height="1" fill="#000080"/><rect x="1" y="8" width="7" height="1" fill="#ffffff"/><rect x="8" y="8" width="7" height="1" fill="#000000"/><rect x="0" y="9" width="1" height="1" fill="#000080"/><rect x="1" y="9" width="5" height="1" fill="#ffffff"/><rect x="6" y="9" width="4" height="1" fill="#000000"/><rect x="10" y="9" width="2" height="1" fill="#ffffff"/><rect x="12" y="9" width="3" height="1" fill="#000000"/><rect x="0" y="10" width="1" height="1" fill="#000080"/><rect x="1" y="10" width="7" height="1" fill="#ffffff"/><rect x="8" y="10" width="3" height="1" fill="#000000"/><rect x="11" y="10" width="2" height="1" fill="#ffffff"/><rect x="13" y="10" width="2" height="1" fill="#000000"/><rect x="0" y="11" width="1" height="1" fill="#000080"/><rect x="1" y="11" width="9" height="1" fill="#ffffff"/><rect x="10" y="11" width="5" height="1" fill="#000000"/><rect x="0" y="12" width="1" height="1" fill="#000080"/><rect x="1" y="12" width="10" height="1" fill="#ffffff"/><rect x="11" y="12" width="3" height="1" fill="#000000"/><rect x="0" y="13" width="8" height="1" fill="#000080"/><rect x="8" y="13" width="9" height="1" fill="#000000"/><rect x="8" y="14" width="9" height="1" fill="#000000"/></svg>
<div class="a" style="left:984px;top:65px;width:17px;height:17px;background:linear-gradient(to bottom right,#d8d8d8,#ffffff 60%,#f4f4f4)"></div>
<div class="a" style="left:983px;top:62px;font-family:'Liberation Serif',serif;font-weight:bold;font-size:19px;line-height:19px;color:#000;transform:scaleX(0.92);transform-origin:0 0">W</div>
<div class="a" style="left:1015px;top:65px;width:17px;height:17px;background:linear-gradient(to bottom right,#d8d8d8,#ffffff 60%,#f4f4f4)"></div>
<div class="a" style="left:1014px;top:62px;font-family:'Liberation Serif',serif;font-weight:bold;font-size:19px;line-height:19px;color:#000;transform:scaleX(0.92);transform-origin:0 0">W</div>
<div class="a" style="left:996px;top:74px;font-family:'Liberation Sans',sans-serif;font-size:9px;line-height:9px;color:#000">?</div>
<svg class="a" style="left:1024px;top:75px" width="8" height="5" shape-rendering="crispEdges"><rect x="5" y="0" width="1" height="1" fill="#000000"/><rect x="3" y="1" width="5" height="1" fill="#000000"/><rect x="4" y="2" width="2" height="1" fill="#000000"/><rect x="3" y="3" width="1" height="1" fill="#000000"/><rect x="0" y="4" width="3" height="1" fill="#000000"/></svg>
<svg class="a" style="left:310px;top:67px" width="17" height="17"><polygon points="5,0.5 12,0.5 16.5,5 16.5,12 12,16.5 5,16.5 0.5,12 0.5,5" fill="#fff" stroke="#b0b0b0" stroke-width="1"/><polygon points="5.8,2.5 11.2,2.5 14.5,5.8 14.5,11.2 11.2,14.5 5.8,14.5 2.5,11.2 2.5,5.8" fill="#a0a0a0"/></svg>
<svg class="a" style="left:227px;top:103px" width="11" height="9" shape-rendering="crispEdges"><rect x="0" y="0" width="11" height="1" fill="#000000"/><rect x="1" y="1" width="4" height="1" fill="#000000"/><rect x="8" y="1" width="3" height="1" fill="#000000"/><rect x="1" y="2" width="4" height="1" fill="#000000"/><rect x="9" y="2" width="2" height="1" fill="#000000"/><rect x="1" y="3" width="4" height="1" fill="#000000"/><rect x="6" y="3" width="2" height="1" fill="#000000"/><rect x="1" y="4" width="7" height="1" fill="#000000"/><rect x="1" y="5" width="4" height="1" fill="#000000"/><rect x="6" y="5" width="2" height="1" fill="#000000"/><rect x="1" y="6" width="4" height="1" fill="#000000"/><rect x="1" y="7" width="4" height="1" fill="#000000"/><rect x="0" y="8" width="7" height="1" fill="#000000"/></svg>
<svg class="a" style="left:252px;top:103px" width="10" height="9" shape-rendering="crispEdges"><rect x="2" y="0" width="4" height="1" fill="#000000"/><rect x="3" y="1" width="3" height="1" fill="#000000"/><rect x="3" y="2" width="2" height="1" fill="#000000"/><rect x="6" y="2" width="4" height="1" fill="#000000"/><rect x="2" y="3" width="3" height="1" fill="#000000"/><rect x="6" y="3" width="2" height="1" fill="#000000"/><rect x="2" y="4" width="5" height="1" fill="#000000"/><rect x="1" y="5" width="6" height="1" fill="#000000"/><rect x="1" y="6" width="3" height="1" fill="#000000"/><rect x="5" y="6" width="3" height="1" fill="#000000"/><rect x="0" y="7" width="3" height="1" fill="#000000"/><rect x="5" y="7" width="4" height="1" fill="#000000"/><rect x="0" y="8" width="4" height="1" fill="#000000"/><rect x="6" y="8" width="2" height="1" fill="#000000"/></svg>
<svg class="a" style="left:274px;top:103px" width="10" height="11" shape-rendering="crispEdges"><rect x="0" y="0" width="5" height="1" fill="#000000"/><rect x="6" y="0" width="4" height="1" fill="#000000"/><rect x="1" y="1" width="3" height="1" fill="#000000"/><rect x="8" y="1" width="1" height="1" fill="#000000"/><rect x="1" y="2" width="3" height="1" fill="#000000"/><rect x="8" y="2" width="1" height="1" fill="#000000"/><rect x="1" y="3" width="3" height="1" fill="#000000"/><rect x="8" y="3" width="1" height="1" fill="#000000"/><rect x="1" y="4" width="3" height="1" fill="#000000"/><rect x="8" y="4" width="1" height="1" fill="#000000"/><rect x="1" y="5" width="3" height="1" fill="#000000"/><rect x="8" y="5" width="1" height="1" fill="#000000"/><rect x="1" y="6" width="3" height="1" fill="#000000"/><rect x="7" y="6" width="2" height="1" fill="#000000"/><rect x="2" y="7" width="6" height="1" fill="#000000"/><rect x="3" y="8" width="4" height="1" fill="#000000"/><rect x="0" y="10" width="10" height="1" fill="#000000"/></svg>
<svg class="a" style="left:294px;top:100px" width="18" height="16" shape-rendering="crispEdges"><rect x="6" y="0" width="2" height="1" fill="#000000"/><rect x="5" y="1" width="3" height="1" fill="#000000"/><rect x="10" y="1" width="7" height="1" fill="#000000"/><rect x="5" y="2" width="4" height="1" fill="#000000"/><rect x="11" y="2" width="1" height="1" fill="#000000"/><rect x="12" y="2" width="3" height="1" fill="#00ff00"/><rect x="15" y="2" width="1" height="1" fill="#000000"/><rect x="4" y="3" width="2" height="1" fill="#000000"/><rect x="7" y="3" width="3" height="1" fill="#000000"/><rect x="12" y="3" width="1" height="1" fill="#000000"/><rect x="13" y="3" width="1" height="1" fill="#00ff00"/><rect x="14" y="3" width="1" height="1" fill="#000000"/><rect x="4" y="4" width="2" height="1" fill="#000000"/><rect x="7" y="4" width="3" height="1" fill="#000000"/><rect x="13" y="4" width="1" height="1" fill="#000000"/><rect x="3" y="5" width="2" height="1" fill="#000000"/><rect x="8" y="5" width="3" height="1" fill="#000000"/><rect x="3" y="6" width="8" height="1" fill="#000000"/><rect x="2" y="7" width="2" height="1" fill="#000000"/><rect x="9" y="7" width="3" height="1" fill="#000000"/><rect x="2" y="8" width="2" height="1" fill="#000000"/><rect x="9" y="8" width="3" height="1" fill="#000000"/><rect x="0" y="9" width="5" height="1" fill="#000000"/><rect x="8" y="9" width="5" height="1" fill="#000000"/><rect x="0" y="10" width="5" height="1" fill="#000000"/><rect x="8" y="10" width="5" height="1" fill="#000000"/><rect x="0" y="12" width="16" height="1" fill="#000000"/><rect x="0" y="13" width="1" height="1" fill="#000000"/><rect x="1" y="13" width="14" height="1" fill="#ffffff"/><rect x="15" y="13" width="1" height="1" fill="#000000"/><rect x="0" y="14" width="1" height="1" fill="#000000"/><rect x="1" y="14" width="14" height="1" fill="#ffffff"/><rect x="15" y="14" width="1" height="1" fill="#000000"/><rect x="0" y="15" width="16" height="1" fill="#000000"/></svg>
<svg class="a" style="left:327px;top:104px" width="12" height="9" shape-rendering="crispEdges"><rect x="0" y="0" width="12" height="1" fill="#000000"/><rect x="0" y="2" width="7" height="1" fill="#000000"/><rect x="0" y="4" width="12" height="1" fill="#000000"/><rect x="0" y="6" width="7" height="1" fill="#000000"/><rect x="0" y="8" width="12" height="1" fill="#000000"/></svg>
<svg class="a" style="left:350px;top:104px" width="12" height="9" shape-rendering="crispEdges"><rect x="0" y="0" width="12" height="1" fill="#000000"/><rect x="2" y="2" width="8" height="1" fill="#000000"/><rect x="0" y="4" width="12" height="1" fill="#000000"/><rect x="2" y="6" width="8" height="1" fill="#000000"/><rect x="0" y="8" width="12" height="1" fill="#000000"/></svg>
<svg class="a" style="left:373px;top:104px" width="12" height="9" shape-rendering="crispEdges"><rect x="0" y="0" width="12" height="1" fill="#000000"/><rect x="5" y="2" width="7" height="1" fill="#000000"/><rect x="0" y="4" width="12" height="1" fill="#000000"/><rect x="5" y="6" width="7" height="1" fill="#000000"/><rect x="0" y="8" width="12" height="1" fill="#000000"/></svg>
<svg class="a" style="left:396px;top:104px" width="12" height="9" shape-rendering="crispEdges"><rect x="0" y="0" width="12" height="1" fill="#000000"/><rect x="0" y="2" width="12" height="1" fill="#000000"/><rect x="0" y="4" width="12" height="1" fill="#000000"/><rect x="0" y="6" width="12" height="1" fill="#000000"/><rect x="0" y="8" width="12" height="1" fill="#000000"/></svg>
<svg class="a" style="left:427px;top:103px" width="12" height="10" shape-rendering="crispEdges"><rect x="8" y="0" width="3" height="1" fill="#000000"/><rect x="7" y="1" width="1" height="1" fill="#000000"/><rect x="8" y="1" width="1" height="1" fill="#ffff00"/><rect x="9" y="1" width="1" height="1" fill="#808000"/><rect x="10" y="1" width="1" height="1" fill="#000000"/><rect x="7" y="2" width="1" height="1" fill="#000000"/><rect x="8" y="2" width="1" height="1" fill="#ffff00"/><rect x="9" y="2" width="1" height="1" fill="#808000"/><rect x="10" y="2" width="1" height="1" fill="#000000"/><rect x="7" y="3" width="1" height="1" fill="#000000"/><rect x="8" y="3" width="1" height="1" fill="#ffff00"/><rect x="9" y="3" width="1" height="1" fill="#808000"/><rect x="10" y="3" width="1" height="1" fill="#000000"/><rect x="2" y="4" width="3" height="1" fill="#000000"/><rect x="7" y="4" width="1" height="1" fill="#000000"/><rect x="8" y="4" width="1" height="1" fill="#ffff00"/><rect x="9" y="4" width="1" height="1" fill="#808000"/><rect x="10" y="4" width="1" height="1" fill="#000000"/><rect x="1" y="5" width="1" height="1" fill="#000000"/><rect x="2" y="5" width="3" height="1" fill="#ffff00"/><rect x="5" y="5" width="1" height="1" fill="#000000"/><rect x="7" y="5" width="1" height="1" fill="#000000"/><rect x="8" y="5" width="1" height="1" fill="#ffff00"/><rect x="9" y="5" width="1" height="1" fill="#808000"/><rect x="10" y="5" width="1" height="1" fill="#000000"/><rect x="0" y="6" width="1" height="1" fill="#000000"/><rect x="1" y="6" width="5" height="1" fill="#ffff00"/><rect x="6" y="6" width="2" height="1" fill="#000000"/><rect x="8" y="6" width="1" height="1" fill="#ffff00"/><rect x="9" y="6" width="1" height="1" fill="#808000"/><rect x="10" y="6" width="1" height="1" fill="#000000"/><rect x="1" y="7" width="5" height="1" fill="#000000"/><rect x="7" y="7" width="5" height="1" fill="#000000"/><rect x="7" y="8" width="1" height="1" fill="#000000"/><rect x="8" y="8" width="3" height="1" fill="#ffff00"/><rect x="11" y="8" width="1" height="1" fill="#000000"/><rect x="8" y="9" width="3" height="1" fill="#000000"/></svg>
<div class="a t" style="left:449px;top:101px;font-weight:bold;font-size:15px;line-height:15px;transform:scaleX(1.05);transform-origin:0 0">%</div>
<svg class="a" style="left:472px;top:103px" width="15" height="11" shape-rendering="crispEdges"><rect x="2" y="0" width="1" height="1" fill="#000000"/><rect x="1" y="1" width="4" height="1" fill="#000000"/><rect x="7" y="1" width="2" height="1" fill="#000000"/><rect x="12" y="1" width="1" height="1" fill="#000000"/><rect x="0" y="2" width="2" height="1" fill="#000000"/><rect x="3" y="2" width="1" height="1" fill="#000000"/><rect x="6" y="2" width="1" height="1" fill="#000000"/><rect x="9" y="2" width="1" height="1" fill="#000000"/><rect x="11" y="2" width="1" height="1" fill="#000000"/><rect x="1" y="3" width="3" height="1" fill="#000000"/><rect x="7" y="3" width="2" height="1" fill="#000000"/><rect x="10" y="3" width="1" height="1" fill="#000000"/><rect x="2" y="4" width="3" height="1" fill="#000000"/><rect x="9" y="4" width="1" height="1" fill="#000000"/><rect x="11" y="4" width="2" height="1" fill="#000000"/><rect x="0" y="5" width="2" height="1" fill="#000000"/><rect x="3" y="5" width="2" height="1" fill="#000000"/><rect x="8" y="5" width="1" height="1" fill="#000000"/><rect x="10" y="5" width="1" height="1" fill="#000000"/><rect x="13" y="5" width="1" height="1" fill="#000000"/><rect x="1" y="6" width="3" height="1" fill="#000000"/><rect x="8" y="6" width="1" height="1" fill="#000000"/><rect x="12" y="6" width="2" height="1" fill="#000000"/><rect x="2" y="7" width="1" height="1" fill="#000000"/><rect x="4" y="8" width="1" height="1" fill="#000080"/><rect x="3" y="9" width="9" height="1" fill="#000080"/><rect x="4" y="10" width="1" height="1" fill="#000080"/></svg>
<svg class="a" style="left:496px;top:102px" width="15" height="12" shape-rendering="crispEdges"><rect x="1" y="0" width="3" height="1" fill="#808080"/><rect x="1" y="1" width="1" height="1" fill="#808080"/><rect x="3" y="1" width="1" height="1" fill="#808080"/><rect x="5" y="1" width="7" height="1" fill="#000080"/><rect x="1" y="2" width="1" height="1" fill="#808080"/><rect x="3" y="2" width="1" height="1" fill="#808080"/><rect x="11" y="2" width="1" height="1" fill="#000080"/><rect x="1" y="3" width="1" height="1" fill="#808080"/><rect x="3" y="3" width="1" height="1" fill="#808080"/><rect x="11" y="3" width="1" height="1" fill="#000080"/><rect x="1" y="4" width="3" height="1" fill="#808080"/><rect x="9" y="4" width="5" height="1" fill="#000080"/><rect x="10" y="5" width="3" height="1" fill="#000080"/><rect x="11" y="6" width="1" height="1" fill="#000080"/><rect x="2" y="7" width="3" height="1" fill="#000000"/><rect x="6" y="7" width="3" height="1" fill="#000000"/><rect x="10" y="7" width="3" height="1" fill="#000000"/><rect x="2" y="8" width="1" height="1" fill="#000000"/><rect x="4" y="8" width="1" height="1" fill="#000000"/><rect x="6" y="8" width="1" height="1" fill="#000000"/><rect x="8" y="8" width="1" height="1" fill="#000000"/><rect x="10" y="8" width="1" height="1" fill="#000000"/><rect x="12" y="8" width="1" height="1" fill="#000000"/><rect x="2" y="9" width="1" height="1" fill="#000000"/><rect x="4" y="9" width="1" height="1" fill="#000000"/><rect x="6" y="9" width="1" height="1" fill="#000000"/><rect x="8" y="9" width="1" height="1" fill="#000000"/><rect x="10" y="9" width="1" height="1" fill="#000000"/><rect x="12" y="9" width="1" height="1" fill="#000000"/><rect x="2" y="10" width="1" height="1" fill="#000000"/><rect x="4" y="10" width="1" height="1" fill="#000000"/><rect x="6" y="10" width="1" height="1" fill="#000000"/><rect x="8" y="10" width="1" height="1" fill="#000000"/><rect x="10" y="10" width="1" height="1" fill="#000000"/><rect x="12" y="10" width="1" height="1" fill="#000000"/><rect x="0" y="11" width="1" height="1" fill="#000000"/><rect x="2" y="11" width="3" height="1" fill="#000000"/><rect x="6" y="11" width="3" height="1" fill="#000000"/><rect x="10" y="11" width="3" height="1" fill="#000000"/></svg>
<svg class="a" style="left:518px;top:103px" width="15" height="12" shape-rendering="crispEdges"><rect x="2" y="0" width="3" height="1" fill="#000000"/><rect x="6" y="0" width="3" height="1" fill="#000000"/><rect x="10" y="0" width="3" height="1" fill="#808080"/><rect x="2" y="1" width="1" height="1" fill="#000000"/><rect x="4" y="1" width="1" height="1" fill="#000000"/><rect x="6" y="1" width="1" height="1" fill="#000000"/><rect x="8" y="1" width="1" height="1" fill="#000000"/><rect x="10" y="1" width="1" height="1" fill="#808080"/><rect x="12" y="1" width="1" height="1" fill="#808080"/><rect x="2" y="2" width="1" height="1" fill="#000000"/><rect x="4" y="2" width="1" height="1" fill="#000000"/><rect x="6" y="2" width="1" height="1" fill="#000000"/><rect x="8" y="2" width="1" height="1" fill="#000000"/><rect x="10" y="2" width="1" height="1" fill="#808080"/><rect x="12" y="2" width="1" height="1" fill="#808080"/><rect x="2" y="3" width="1" height="1" fill="#000000"/><rect x="4" y="3" width="1" height="1" fill="#000000"/><rect x="6" y="3" width="1" height="1" fill="#000000"/><rect x="8" y="3" width="1" height="1" fill="#000000"/><rect x="10" y="3" width="1" height="1" fill="#808080"/><rect x="12" y="3" width="1" height="1" fill="#808080"/><rect x="0" y="4" width="1" height="1" fill="#000000"/><rect x="2" y="4" width="3" height="1" fill="#000000"/><rect x="6" y="4" width="3" height="1" fill="#000000"/><rect x="10" y="4" width="3" height="1" fill="#808080"/><rect x="13" y="6" width="1" height="1" fill="#000080"/><rect x="1" y="7" width="3" height="1" fill="#000000"/><rect x="13" y="7" width="1" height="1" fill="#000080"/><rect x="1" y="8" width="1" height="1" fill="#000000"/><rect x="3" y="8" width="1" height="1" fill="#000000"/><rect x="6" y="8" width="1" height="1" fill="#000080"/><rect x="13" y="8" width="1" height="1" fill="#000080"/><rect x="1" y="9" width="1" height="1" fill="#000000"/><rect x="3" y="9" width="1" height="1" fill="#000000"/><rect x="5" y="9" width="9" height="1" fill="#000080"/><rect x="1" y="10" width="1" height="1" fill="#000000"/><rect x="3" y="10" width="1" height="1" fill="#000000"/><rect x="6" y="10" width="1" height="1" fill="#000080"/><rect x="1" y="11" width="3" height="1" fill="#000000"/></svg>
<svg class="a" style="left:548px;top:101px" width="16" height="15" shape-rendering="crispEdges"><rect x="7" y="0" width="1" height="1" fill="#000000"/><rect x="3" y="3" width="3" height="1" fill="#000000"/><rect x="7" y="3" width="9" height="1" fill="#000000"/><rect x="7" y="5" width="9" height="1" fill="#000000"/><rect x="2" y="6" width="1" height="1" fill="#000080"/><rect x="7" y="6" width="9" height="1" fill="#000000"/><rect x="1" y="7" width="5" height="1" fill="#000080"/><rect x="0" y="8" width="6" height="1" fill="#000080"/><rect x="7" y="8" width="1" height="1" fill="#000000"/><rect x="1" y="9" width="5" height="1" fill="#000080"/><rect x="7" y="9" width="5" height="1" fill="#000000"/><rect x="2" y="10" width="1" height="1" fill="#000080"/><rect x="7" y="10" width="5" height="1" fill="#000000"/><rect x="3" y="12" width="3" height="1" fill="#000000"/><rect x="7" y="12" width="9" height="1" fill="#000000"/><rect x="7" y="14" width="1" height="1" fill="#000000"/></svg>
<svg class="a" style="left:571px;top:101px" width="16" height="15" shape-rendering="crispEdges"><rect x="7" y="0" width="1" height="1" fill="#000000"/><rect x="3" y="3" width="3" height="1" fill="#000000"/><rect x="7" y="3" width="9" height="1" fill="#000000"/><rect x="7" y="5" width="9" height="1" fill="#000000"/><rect x="3" y="6" width="1" height="1" fill="#000080"/><rect x="7" y="6" width="9" height="1" fill="#000000"/><rect x="0" y="7" width="5" height="1" fill="#000080"/><rect x="0" y="8" width="6" height="1" fill="#000080"/><rect x="7" y="8" width="1" height="1" fill="#000000"/><rect x="0" y="9" width="5" height="1" fill="#000080"/><rect x="7" y="9" width="5" height="1" fill="#000000"/><rect x="3" y="10" width="1" height="1" fill="#000080"/><rect x="7" y="10" width="5" height="1" fill="#000000"/><rect x="3" y="12" width="3" height="1" fill="#000000"/><rect x="7" y="12" width="9" height="1" fill="#000000"/><rect x="7" y="14" width="1" height="1" fill="#000000"/></svg>
<svg class="a" style="left:604px;top:100px" width="15" height="14" shape-rendering="crispEdges"><rect x="8" y="0" width="7" height="1" fill="#000000"/><rect x="9" y="1" width="1" height="1" fill="#000000"/><rect x="10" y="1" width="3" height="1" fill="#00ff00"/><rect x="13" y="1" width="1" height="1" fill="#000000"/><rect x="10" y="2" width="1" height="1" fill="#000000"/><rect x="11" y="2" width="1" height="1" fill="#00ff00"/><rect x="12" y="2" width="1" height="1" fill="#000000"/><rect x="0" y="3" width="11" height="1" fill="#000080"/><rect x="11" y="3" width="1" height="1" fill="#000000"/><rect x="0" y="4" width="1" height="1" fill="#000080"/><rect x="11" y="4" width="1" height="1" fill="#000080"/><rect x="0" y="5" width="1" height="1" fill="#000080"/><rect x="11" y="5" width="1" height="1" fill="#000080"/><rect x="0" y="6" width="1" height="1" fill="#000080"/><rect x="11" y="6" width="1" height="1" fill="#000080"/><rect x="0" y="7" width="1" height="1" fill="#000080"/><rect x="11" y="7" width="1" height="1" fill="#000080"/><rect x="0" y="8" width="1" height="1" fill="#000080"/><rect x="11" y="8" width="1" height="1" fill="#000080"/><rect x="0" y="9" width="1" height="1" fill="#000080"/><rect x="11" y="9" width="1" height="1" fill="#000080"/><rect x="0" y="10" width="1" height="1" fill="#000080"/><rect x="11" y="10" width="1" height="1" fill="#000080"/><rect x="0" y="11" width="1" height="1" fill="#000080"/><rect x="11" y="11" width="1" height="1" fill="#000080"/><rect x="0" y="12" width="1" height="1" fill="#000080"/><rect x="11" y="12" width="1" height="1" fill="#000080"/><rect x="0" y="13" width="12" height="1" fill="#000080"/></svg>
<svg class="a" style="left:625px;top:100px" width="17" height="16" shape-rendering="crispEdges"><rect x="10" y="0" width="7" height="1" fill="#000000"/><rect x="11" y="1" width="1" height="1" fill="#000000"/><rect x="12" y="1" width="3" height="1" fill="#00ff00"/><rect x="15" y="1" width="1" height="1" fill="#000000"/><rect x="1" y="2" width="11" height="1" fill="#000080"/><rect x="12" y="2" width="1" height="1" fill="#000000"/><rect x="13" y="2" width="1" height="1" fill="#00ff00"/><rect x="14" y="2" width="1" height="1" fill="#000000"/><rect x="1" y="3" width="1" height="1" fill="#000080"/><rect x="2" y="3" width="5" height="1" fill="#e0e0e0"/><rect x="7" y="3" width="1" height="1" fill="#000080"/><rect x="8" y="3" width="2" height="1" fill="#e0e0e0"/><rect x="10" y="3" width="2" height="1" fill="#c0c0c0"/><rect x="12" y="3" width="1" height="1" fill="#000080"/><rect x="13" y="3" width="1" height="1" fill="#000000"/><rect x="1" y="4" width="15" height="1" fill="#000080"/><rect x="1" y="5" width="1" height="1" fill="#800080"/><rect x="6" y="5" width="1" height="1" fill="#800080"/><rect x="1" y="6" width="1" height="1" fill="#800080"/><rect x="4" y="6" width="1" height="1" fill="#000000"/><rect x="6" y="6" width="1" height="1" fill="#800080"/><rect x="1" y="7" width="1" height="1" fill="#800080"/><rect x="6" y="7" width="1" height="1" fill="#800080"/><rect x="1" y="8" width="1" height="1" fill="#800080"/><rect x="6" y="8" width="1" height="1" fill="#800080"/><rect x="1" y="9" width="1" height="1" fill="#800080"/><rect x="3" y="9" width="1" height="1" fill="#000000"/><rect x="6" y="9" width="1" height="1" fill="#800080"/><rect x="1" y="10" width="1" height="1" fill="#800080"/><rect x="0" y="12" width="16" height="1" fill="#ffffff"/><rect x="0" y="13" width="16" height="1" fill="#ffffff"/><rect x="0" y="14" width="16" height="1" fill="#ffffff"/><rect x="0" y="15" width="16" height="1" fill="#ffffff"/></svg>
<svg class="a" style="left:656px;top:101px" width="16" height="15" shape-rendering="crispEdges"><rect x="1" y="0" width="1" height="1" fill="#a0a0a0"/><rect x="14" y="0" width="1" height="1" fill="#a0a0a0"/><rect x="1" y="1" width="1" height="1" fill="#a0a0a0"/><rect x="14" y="1" width="1" height="1" fill="#a0a0a0"/><rect x="0" y="2" width="16" height="1" fill="#a0a0a0"/><rect x="1" y="3" width="1" height="1" fill="#a0a0a0"/><rect x="2" y="3" width="12" height="1" fill="#ffffff"/><rect x="14" y="3" width="1" height="1" fill="#a0a0a0"/><rect x="1" y="4" width="1" height="1" fill="#a0a0a0"/><rect x="2" y="4" width="1" height="1" fill="#ffffff"/><rect x="3" y="4" width="3" height="1" fill="#000000"/><rect x="6" y="4" width="4" height="1" fill="#ffffff"/><rect x="10" y="4" width="1" height="1" fill="#000080"/><rect x="11" y="4" width="3" height="1" fill="#ffffff"/><rect x="14" y="4" width="1" height="1" fill="#a0a0a0"/><rect x="1" y="5" width="1" height="1" fill="#a0a0a0"/><rect x="2" y="5" width="7" height="1" fill="#ffffff"/><rect x="9" y="5" width="3" height="1" fill="#000080"/><rect x="12" y="5" width="2" height="1" fill="#ffffff"/><rect x="14" y="5" width="1" height="1" fill="#a0a0a0"/><rect x="1" y="6" width="1" height="1" fill="#a0a0a0"/><rect x="2" y="6" width="1" height="1" fill="#ffffff"/><rect x="3" y="6" width="5" height="1" fill="#000000"/><rect x="8" y="6" width="2" height="1" fill="#ffffff"/><rect x="10" y="6" width="1" height="1" fill="#000080"/><rect x="11" y="6" width="3" height="1" fill="#ffffff"/><rect x="14" y="6" width="1" height="1" fill="#a0a0a0"/><rect x="1" y="7" width="1" height="1" fill="#a0a0a0"/><rect x="2" y="7" width="8" height="1" fill="#ffffff"/><rect x="10" y="7" width="1" height="1" fill="#000080"/><rect x="11" y="7" width="3" height="1" fill="#ffffff"/><rect x="14" y="7" width="1" height="1" fill="#a0a0a0"/><rect x="1" y="8" width="1" height="1" fill="#a0a0a0"/><rect x="2" y="8" width="8" height="1" fill="#ffffff"/><rect x="10" y="8" width="1" height="1" fill="#000080"/><rect x="11" y="8" width="3" height="1" fill="#ffffff"/><rect x="14" y="8" width="1" height="1" fill="#a0a0a0"/><rect x="1" y="9" width="1" height="1" fill="#a0a0a0"/><rect x="2" y="9" width="8" height="1" fill="#ffffff"/><rect x="10" y="9" width="1" height="1" fill="#000080"/><rect x="11" y="9" width="3" height="1" fill="#ffffff"/><rect x="14" y="9" width="1" height="1" fill="#a0a0a0"/><rect x="1" y="10" width="1" height="1" fill="#a0a0a0"/><rect x="2" y="10" width="8" height="1" fill="#ffffff"/><rect x="10" y="10" width="1" height="1" fill="#000080"/><rect x="11" y="10" width="3" height="1" fill="#ffffff"/><rect x="14" y="10" width="1" height="1" fill="#a0a0a0"/><rect x="1" y="11" width="1" height="1" fill="#a0a0a0"/><rect x="2" y="11" width="12" height="1" fill="#ffffff"/><rect x="14" y="11" width="1" height="1" fill="#a0a0a0"/><rect x="0" y="12" width="16" height="1" fill="#a0a0a0"/><rect x="1" y="13" width="1" height="1" fill="#a0a0a0"/><rect x="14" y="13" width="1" height="1" fill="#a0a0a0"/><rect x="1" y="14" width="1" height="1" fill="#a0a0a0"/><rect x="14" y="14" width="1" height="1" fill="#a0a0a0"/></svg>
<svg class="a" style="left:679px;top:101px" width="16" height="15" shape-rendering="crispEdges"><rect x="1" y="0" width="1" height="1" fill="#a0a0a0"/><rect x="14" y="0" width="1" height="1" fill="#a0a0a0"/><rect x="1" y="1" width="1" height="1" fill="#a0a0a0"/><rect x="14" y="1" width="1" height="1" fill="#a0a0a0"/><rect x="0" y="2" width="16" height="1" fill="#a0a0a0"/><rect x="1" y="3" width="1" height="1" fill="#a0a0a0"/><rect x="2" y="3" width="12" height="1" fill="#ffffff"/><rect x="14" y="3" width="1" height="1" fill="#a0a0a0"/><rect x="1" y="4" width="1" height="1" fill="#a0a0a0"/><rect x="2" y="4" width="8" height="1" fill="#ffffff"/><rect x="10" y="4" width="1" height="1" fill="#000080"/><rect x="11" y="4" width="3" height="1" fill="#ffffff"/><rect x="14" y="4" width="1" height="1" fill="#a0a0a0"/><rect x="1" y="5" width="1" height="1" fill="#a0a0a0"/><rect x="2" y="5" width="7" height="1" fill="#ffffff"/><rect x="9" y="5" width="3" height="1" fill="#000080"/><rect x="12" y="5" width="2" height="1" fill="#ffffff"/><rect x="14" y="5" width="1" height="1" fill="#a0a0a0"/><rect x="1" y="6" width="1" height="1" fill="#a0a0a0"/><rect x="2" y="6" width="1" height="1" fill="#ffffff"/><rect x="3" y="6" width="3" height="1" fill="#000000"/><rect x="6" y="6" width="4" height="1" fill="#ffffff"/><rect x="10" y="6" width="1" height="1" fill="#000080"/><rect x="11" y="6" width="3" height="1" fill="#ffffff"/><rect x="14" y="6" width="1" height="1" fill="#a0a0a0"/><rect x="1" y="7" width="1" height="1" fill="#a0a0a0"/><rect x="2" y="7" width="8" height="1" fill="#ffffff"/><rect x="10" y="7" width="1" height="1" fill="#000080"/><rect x="11" y="7" width="3" height="1" fill="#ffffff"/><rect x="14" y="7" width="1" height="1" fill="#a0a0a0"/><rect x="1" y="8" width="1" height="1" fill="#a0a0a0"/><rect x="2" y="8" width="1" height="1" fill="#ffffff"/><rect x="3" y="8" width="5" height="1" fill="#000000"/><rect x="8" y="8" width="2" height="1" fill="#ffffff"/><rect x="10" y="8" width="1" height="1" fill="#000080"/><rect x="11" y="8" width="3" height="1" fill="#ffffff"/><rect x="14" y="8" width="1" height="1" fill="#a0a0a0"/><rect x="1" y="9" width="1" height="1" fill="#a0a0a0"/><rect x="2" y="9" width="7" height="1" fill="#ffffff"/><rect x="9" y="9" width="3" height="1" fill="#000080"/><rect x="12" y="9" width="2" height="1" fill="#ffffff"/><rect x="14" y="9" width="1" height="1" fill="#a0a0a0"/><rect x="1" y="10" width="1" height="1" fill="#a0a0a0"/><rect x="2" y="10" width="8" height="1" fill="#ffffff"/><rect x="10" y="10" width="1" height="1" fill="#000080"/><rect x="11" y="10" width="3" height="1" fill="#ffffff"/><rect x="14" y="10" width="1" height="1" fill="#a0a0a0"/><rect x="1" y="11" width="1" height="1" fill="#a0a0a0"/><rect x="2" y="11" width="12" height="1" fill="#ffffff"/><rect x="14" y="11" width="1" height="1" fill="#a0a0a0"/><rect x="0" y="12" width="16" height="1" fill="#a0a0a0"/><rect x="1" y="13" width="1" height="1" fill="#a0a0a0"/><rect x="14" y="13" width="1" height="1" fill="#a0a0a0"/><rect x="1" y="14" width="1" height="1" fill="#a0a0a0"/><rect x="14" y="14" width="1" height="1" fill="#a0a0a0"/></svg>
<svg class="a" style="left:702px;top:101px" width="16" height="15" shape-rendering="crispEdges"><rect x="1" y="0" width="1" height="1" fill="#a0a0a0"/><rect x="14" y="0" width="1" height="1" fill="#a0a0a0"/><rect x="1" y="1" width="1" height="1" fill="#a0a0a0"/><rect x="14" y="1" width="1" height="1" fill="#a0a0a0"/><rect x="0" y="2" width="16" height="1" fill="#a0a0a0"/><rect x="1" y="3" width="1" height="1" fill="#a0a0a0"/><rect x="2" y="3" width="12" height="1" fill="#ffffff"/><rect x="14" y="3" width="1" height="1" fill="#a0a0a0"/><rect x="1" y="4" width="1" height="1" fill="#a0a0a0"/><rect x="2" y="4" width="8" height="1" fill="#ffffff"/><rect x="10" y="4" width="1" height="1" fill="#000080"/><rect x="11" y="4" width="3" height="1" fill="#ffffff"/><rect x="14" y="4" width="1" height="1" fill="#a0a0a0"/><rect x="1" y="5" width="1" height="1" fill="#a0a0a0"/><rect x="2" y="5" width="8" height="1" fill="#ffffff"/><rect x="10" y="5" width="1" height="1" fill="#000080"/><rect x="11" y="5" width="3" height="1" fill="#ffffff"/><rect x="14" y="5" width="1" height="1" fill="#a0a0a0"/><rect x="1" y="6" width="1" height="1" fill="#a0a0a0"/><rect x="2" y="6" width="8" height="1" fill="#ffffff"/><rect x="10" y="6" width="1" height="1" fill="#000080"/><rect x="11" y="6" width="3" height="1" fill="#ffffff"/><rect x="14" y="6" width="1" height="1" fill="#a0a0a0"/><rect x="1" y="7" width="1" height="1" fill="#a0a0a0"/><rect x="2" y="7" width="1" height="1" fill="#ffffff"/><rect x="3" y="7" width="3" height="1" fill="#000000"/><rect x="6" y="7" width="4" height="1" fill="#ffffff"/><rect x="10" y="7" width="1" height="1" fill="#000080"/><rect x="11" y="7" width="3" height="1" fill="#ffffff"/><rect x="14" y="7" width="1" height="1" fill="#a0a0a0"/><rect x="1" y="8" width="1" height="1" fill="#a0a0a0"/><rect x="2" y="8" width="8" height="1" fill="#ffffff"/><rect x="10" y="8" width="1" height="1" fill="#000080"/><rect x="11" y="8" width="3" height="1" fill="#ffffff"/><rect x="14" y="8" width="1" height="1" fill="#a0a0a0"/><rect x="1" y="9" width="1" height="1" fill="#a0a0a0"/><rect x="2" y="9" width="1" height="1" fill="#ffffff"/><rect x="3" y="9" width="5" height="1" fill="#000000"/><rect x="8" y="9" width="1" height="1" fill="#ffffff"/><rect x="9" y="9" width="3" height="1" fill="#000080"/><rect x="12" y="9" width="2" height="1" fill="#ffffff"/><rect x="14" y="9" width="1" height="1" fill="#a0a0a0"/><rect x="1" y="10" width="1" height="1" fill="#a0a0a0"/><rect x="2" y="10" width="8" height="1" fill="#ffffff"/><rect x="10" y="10" width="1" height="1" fill="#000080"/><rect x="11" y="10" width="3" height="1" fill="#ffffff"/><rect x="14" y="10" width="1" height="1" fill="#a0a0a0"/><rect x="1" y="11" width="1" height="1" fill="#a0a0a0"/><rect x="2" y="11" width="12" height="1" fill="#ffffff"/><rect x="14" y="11" width="1" height="1" fill="#a0a0a0"/><rect x="0" y="12" width="16" height="1" fill="#a0a0a0"/><rect x="1" y="13" width="1" height="1" fill="#a0a0a0"/><rect x="14" y="13" width="1" height="1" fill="#a0a0a0"/><rect x="1" y="14" width="1" height="1" fill="#a0a0a0"/><rect x="14" y="14" width="1" height="1" fill="#a0a0a0"/></svg>
<svg class="a" style="left:192px;top:138px" width="14" height="9" shape-rendering="crispEdges"><rect x="1" y="0" width="12" height="1" fill="#000000"/><rect x="0" y="1" width="1" height="1" fill="#000000"/><rect x="1" y="1" width="12" height="1" fill="#ffffff"/><rect x="13" y="1" width="1" height="1" fill="#000000"/><rect x="0" y="2" width="1" height="1" fill="#000000"/><rect x="1" y="2" width="1" height="1" fill="#ffffff"/><rect x="2" y="2" width="10" height="1" fill="#000000"/><rect x="12" y="2" width="1" height="1" fill="#ffffff"/><rect x="13" y="2" width="1" height="1" fill="#000000"/><rect x="0" y="3" width="1" height="1" fill="#000000"/><rect x="1" y="3" width="1" height="1" fill="#ffffff"/><rect x="2" y="3" width="1" height="1" fill="#000000"/><rect x="3" y="3" width="10" height="1" fill="#ffffff"/><rect x="13" y="3" width="1" height="1" fill="#000000"/><rect x="0" y="4" width="1" height="1" fill="#000000"/><rect x="1" y="4" width="1" height="1" fill="#ffffff"/><rect x="2" y="4" width="3" height="1" fill="#000000"/><rect x="5" y="4" width="1" height="1" fill="#ffffff"/><rect x="6" y="4" width="1" height="1" fill="#808080"/><rect x="7" y="4" width="1" height="1" fill="#ffffff"/><rect x="8" y="4" width="1" height="1" fill="#000000"/><rect x="9" y="4" width="1" height="1" fill="#ffffff"/><rect x="10" y="4" width="2" height="1" fill="#000000"/><rect x="12" y="4" width="1" height="1" fill="#ffffff"/><rect x="13" y="4" width="1" height="1" fill="#000000"/><rect x="0" y="5" width="1" height="1" fill="#000000"/><rect x="1" y="5" width="5" height="1" fill="#ffffff"/><rect x="6" y="5" width="4" height="1" fill="#808080"/><rect x="10" y="5" width="3" height="1" fill="#ffffff"/><rect x="13" y="5" width="1" height="1" fill="#000000"/><rect x="0" y="6" width="1" height="1" fill="#000000"/><rect x="1" y="6" width="1" height="1" fill="#ffffff"/><rect x="2" y="6" width="10" height="1" fill="#808080"/><rect x="12" y="6" width="1" height="1" fill="#ffffff"/><rect x="13" y="6" width="1" height="1" fill="#000000"/><rect x="0" y="7" width="1" height="1" fill="#000000"/><rect x="1" y="7" width="12" height="1" fill="#ffffff"/><rect x="13" y="7" width="1" height="1" fill="#000000"/><rect x="1" y="8" width="12" height="1" fill="#000000"/></svg>
<svg class="a" style="left:217px;top:138px" width="10" height="9" shape-rendering="crispEdges"><rect x="0" y="0" width="10" height="1" fill="#000000"/><rect x="1" y="1" width="2" height="1" fill="#000000"/><rect x="8" y="1" width="2" height="1" fill="#000000"/><rect x="2" y="2" width="2" height="1" fill="#000000"/><rect x="9" y="2" width="1" height="1" fill="#000000"/><rect x="3" y="3" width="2" height="1" fill="#000000"/><rect x="4" y="4" width="2" height="1" fill="#000000"/><rect x="3" y="5" width="2" height="1" fill="#000000"/><rect x="2" y="6" width="2" height="1" fill="#000000"/><rect x="9" y="6" width="1" height="1" fill="#000000"/><rect x="1" y="7" width="2" height="1" fill="#000000"/><rect x="8" y="7" width="2" height="1" fill="#000000"/><rect x="0" y="8" width="10" height="1" fill="#000000"/></svg>
<div class="a" style="left:240px;top:140px;width:10px;height:1px;background:#000"></div>
<div class="a" style="left:240px;top:143px;width:10px;height:1px;background:#000"></div>
<svg class="a" style="left:11px;top:168px" width="15" height="16" shape-rendering="crispEdges"><rect x="11" y="0" width="1" height="1" fill="#000000"/><rect x="11" y="1" width="2" height="1" fill="#000000"/><rect x="8" y="2" width="4" height="1" fill="#000000"/><rect x="12" y="2" width="1" height="1" fill="#00ff00"/><rect x="13" y="2" width="1" height="1" fill="#000000"/><rect x="6" y="3" width="1" height="1" fill="#000000"/><rect x="7" y="3" width="1" height="1" fill="#ffffff"/><rect x="8" y="3" width="3" height="1" fill="#ffff00"/><rect x="11" y="3" width="1" height="1" fill="#000000"/><rect x="12" y="3" width="2" height="1" fill="#00ff00"/><rect x="14" y="3" width="1" height="1" fill="#000000"/><rect x="6" y="4" width="1" height="1" fill="#000000"/><rect x="7" y="4" width="2" height="1" fill="#ffff00"/><rect x="9" y="4" width="1" height="1" fill="#ffffff"/><rect x="10" y="4" width="1" height="1" fill="#ffff00"/><rect x="11" y="4" width="1" height="1" fill="#000000"/><rect x="12" y="4" width="1" height="1" fill="#00ff00"/><rect x="13" y="4" width="1" height="1" fill="#000000"/><rect x="0" y="5" width="7" height="1" fill="#000000"/><rect x="7" y="5" width="1" height="1" fill="#ffff00"/><rect x="8" y="5" width="1" height="1" fill="#ffffff"/><rect x="9" y="5" width="2" height="1" fill="#ffff00"/><rect x="11" y="5" width="2" height="1" fill="#000000"/><rect x="0" y="6" width="1" height="1" fill="#000000"/><rect x="1" y="6" width="1" height="1" fill="#800080"/><rect x="2" y="6" width="1" height="1" fill="#c0c0c0"/><rect x="3" y="6" width="1" height="1" fill="#800080"/><rect x="4" y="6" width="1" height="1" fill="#c0c0c0"/><rect x="5" y="6" width="1" height="1" fill="#800080"/><rect x="6" y="6" width="1" height="1" fill="#000000"/><rect x="7" y="6" width="3" height="1" fill="#ffff00"/><rect x="10" y="6" width="1" height="1" fill="#ffffff"/><rect x="11" y="6" width="1" height="1" fill="#000000"/><rect x="0" y="7" width="1" height="1" fill="#000000"/><rect x="1" y="7" width="1" height="1" fill="#c0c0c0"/><rect x="2" y="7" width="1" height="1" fill="#800080"/><rect x="3" y="7" width="1" height="1" fill="#c0c0c0"/><rect x="4" y="7" width="1" height="1" fill="#800080"/><rect x="5" y="7" width="1" height="1" fill="#c0c0c0"/><rect x="6" y="7" width="1" height="1" fill="#000000"/><rect x="7" y="7" width="1" height="1" fill="#ffff00"/><rect x="8" y="7" width="1" height="1" fill="#ffffff"/><rect x="9" y="7" width="2" height="1" fill="#ffff00"/><rect x="11" y="7" width="1" height="1" fill="#ffffff"/><rect x="0" y="8" width="1" height="1" fill="#000000"/><rect x="1" y="8" width="1" height="1" fill="#800080"/><rect x="2" y="8" width="1" height="1" fill="#c0c0c0"/><rect x="3" y="8" width="1" height="1" fill="#800080"/><rect x="4" y="8" width="1" height="1" fill="#c0c0c0"/><rect x="5" y="8" width="1" height="1" fill="#800080"/><rect x="6" y="8" width="1" height="1" fill="#000000"/><rect x="7" y="8" width="3" height="1" fill="#ffff00"/><rect x="10" y="8" width="1" height="1" fill="#ffffff"/><rect x="0" y="9" width="1" height="1" fill="#000000"/><rect x="1" y="9" width="1" height="1" fill="#c0c0c0"/><rect x="2" y="9" width="1" height="1" fill="#800080"/><rect x="3" y="9" width="1" height="1" fill="#c0c0c0"/><rect x="4" y="9" width="1" height="1" fill="#800080"/><rect x="5" y="9" width="1" height="1" fill="#c0c0c0"/><rect x="6" y="9" width="1" height="1" fill="#000000"/><rect x="7" y="9" width="1" height="1" fill="#ffffff"/><rect x="8" y="9" width="2" height="1" fill="#ffff00"/><rect x="10" y="9" width="1" height="1" fill="#000000"/><rect x="0" y="10" width="1" height="1" fill="#000000"/><rect x="1" y="10" width="1" height="1" fill="#800080"/><rect x="2" y="10" width="1" height="1" fill="#c0c0c0"/><rect x="3" y="10" width="1" height="1" fill="#800080"/><rect x="4" y="10" width="1" height="1" fill="#c0c0c0"/><rect x="5" y="10" width="1" height="1" fill="#800080"/><rect x="6" y="10" width="1" height="1" fill="#000000"/><rect x="7" y="10" width="1" height="1" fill="#00ffff"/><rect x="8" y="10" width="3" height="1" fill="#000000"/><rect x="0" y="11" width="6" height="1" fill="#000000"/><rect x="6" y="11" width="1" height="1" fill="#00ffff"/><rect x="7" y="11" width="1" height="1" fill="#ffffff"/><rect x="8" y="11" width="1" height="1" fill="#00ffff"/><rect x="4" y="12" width="1" height="1" fill="#000000"/><rect x="5" y="12" width="1" height="1" fill="#00ffff"/><rect x="6" y="12" width="1" height="1" fill="#ffffff"/><rect x="7" y="12" width="1" height="1" fill="#00ffff"/><rect x="8" y="12" width="1" height="1" fill="#ffffff"/><rect x="9" y="12" width="1" height="1" fill="#00ffff"/><rect x="10" y="12" width="1" height="1" fill="#000000"/><rect x="3" y="13" width="1" height="1" fill="#000000"/><rect x="4" y="13" width="1" height="1" fill="#00ffff"/><rect x="5" y="13" width="1" height="1" fill="#ffffff"/><rect x="6" y="13" width="1" height="1" fill="#00ffff"/><rect x="7" y="13" width="1" height="1" fill="#ffffff"/><rect x="8" y="13" width="1" height="1" fill="#00ffff"/><rect x="9" y="13" width="1" height="1" fill="#ffffff"/><rect x="10" y="13" width="1" height="1" fill="#00ffff"/><rect x="11" y="13" width="1" height="1" fill="#000000"/><rect x="2" y="14" width="1" height="1" fill="#000000"/><rect x="3" y="14" width="1" height="1" fill="#00ffff"/><rect x="4" y="14" width="1" height="1" fill="#ffffff"/><rect x="5" y="14" width="1" height="1" fill="#00ffff"/><rect x="6" y="14" width="1" height="1" fill="#ffffff"/><rect x="7" y="14" width="1" height="1" fill="#00ffff"/><rect x="8" y="14" width="1" height="1" fill="#ffffff"/><rect x="9" y="14" width="1" height="1" fill="#00ffff"/><rect x="10" y="14" width="1" height="1" fill="#ffffff"/><rect x="11" y="14" width="1" height="1" fill="#00ffff"/><rect x="12" y="14" width="1" height="1" fill="#000000"/><rect x="2" y="15" width="11" height="1" fill="#000000"/></svg>
<svg class="a" style="left:11px;top:191px" width="15" height="15" shape-rendering="crispEdges"><rect x="11" y="0" width="1" height="1" fill="#000000"/><rect x="11" y="1" width="2" height="1" fill="#000000"/><rect x="0" y="2" width="10" height="1" fill="#000000"/><rect x="11" y="2" width="1" height="1" fill="#000000"/><rect x="12" y="2" width="1" height="1" fill="#00ff00"/><rect x="13" y="2" width="1" height="1" fill="#000000"/><rect x="0" y="3" width="1" height="1" fill="#000000"/><rect x="1" y="3" width="3" height="1" fill="#ffffff"/><rect x="4" y="3" width="1" height="1" fill="#000000"/><rect x="5" y="3" width="4" height="1" fill="#ffffff"/><rect x="9" y="3" width="1" height="1" fill="#000000"/><rect x="11" y="3" width="1" height="1" fill="#000000"/><rect x="12" y="3" width="2" height="1" fill="#00ff00"/><rect x="14" y="3" width="1" height="1" fill="#000000"/><rect x="0" y="4" width="1" height="1" fill="#000000"/><rect x="1" y="4" width="3" height="1" fill="#ffffff"/><rect x="4" y="4" width="1" height="1" fill="#000000"/><rect x="5" y="4" width="4" height="1" fill="#ffffff"/><rect x="9" y="4" width="1" height="1" fill="#000000"/><rect x="11" y="4" width="1" height="1" fill="#000000"/><rect x="12" y="4" width="1" height="1" fill="#00ff00"/><rect x="13" y="4" width="1" height="1" fill="#000000"/><rect x="0" y="5" width="1" height="1" fill="#000000"/><rect x="1" y="5" width="2" height="1" fill="#ffffff"/><rect x="3" y="5" width="7" height="1" fill="#000080"/><rect x="10" y="5" width="3" height="1" fill="#000000"/><rect x="0" y="6" width="3" height="1" fill="#000000"/><rect x="3" y="6" width="1" height="1" fill="#000080"/><rect x="4" y="6" width="1" height="1" fill="#ffff00"/><rect x="5" y="6" width="1" height="1" fill="#c0c0c0"/><rect x="6" y="6" width="1" height="1" fill="#ffff00"/><rect x="7" y="6" width="1" height="1" fill="#c0c0c0"/><rect x="8" y="6" width="1" height="1" fill="#ffff00"/><rect x="9" y="6" width="1" height="1" fill="#000080"/><rect x="10" y="6" width="3" height="1" fill="#000000"/><rect x="0" y="7" width="1" height="1" fill="#000000"/><rect x="1" y="7" width="2" height="1" fill="#ffffff"/><rect x="3" y="7" width="1" height="1" fill="#000080"/><rect x="4" y="7" width="1" height="1" fill="#c0c0c0"/><rect x="5" y="7" width="1" height="1" fill="#ffff00"/><rect x="6" y="7" width="1" height="1" fill="#c0c0c0"/><rect x="7" y="7" width="1" height="1" fill="#ffff00"/><rect x="8" y="7" width="1" height="1" fill="#c0c0c0"/><rect x="9" y="7" width="1" height="1" fill="#000080"/><rect x="10" y="7" width="2" height="1" fill="#ffffff"/><rect x="12" y="7" width="1" height="1" fill="#000000"/><rect x="0" y="8" width="1" height="1" fill="#000000"/><rect x="1" y="8" width="2" height="1" fill="#ffffff"/><rect x="3" y="8" width="1" height="1" fill="#000080"/><rect x="4" y="8" width="1" height="1" fill="#ffff00"/><rect x="5" y="8" width="1" height="1" fill="#c0c0c0"/><rect x="6" y="8" width="1" height="1" fill="#ffff00"/><rect x="7" y="8" width="1" height="1" fill="#c0c0c0"/><rect x="8" y="8" width="1" height="1" fill="#ffff00"/><rect x="9" y="8" width="1" height="1" fill="#000080"/><rect x="10" y="8" width="2" height="1" fill="#ffffff"/><rect x="12" y="8" width="1" height="1" fill="#000000"/><rect x="0" y="9" width="1" height="1" fill="#000000"/><rect x="1" y="9" width="2" height="1" fill="#ffffff"/><rect x="3" y="9" width="7" height="1" fill="#000080"/><rect x="10" y="9" width="2" height="1" fill="#ffffff"/><rect x="12" y="9" width="1" height="1" fill="#000000"/><rect x="0" y="10" width="13" height="1" fill="#000000"/><rect x="0" y="11" width="1" height="1" fill="#000000"/><rect x="1" y="11" width="3" height="1" fill="#ffffff"/><rect x="4" y="11" width="1" height="1" fill="#000000"/><rect x="5" y="11" width="4" height="1" fill="#ffffff"/><rect x="9" y="11" width="1" height="1" fill="#000000"/><rect x="10" y="11" width="2" height="1" fill="#ffffff"/><rect x="12" y="11" width="1" height="1" fill="#000000"/><rect x="0" y="12" width="1" height="1" fill="#000000"/><rect x="1" y="12" width="3" height="1" fill="#ffffff"/><rect x="4" y="12" width="1" height="1" fill="#000000"/><rect x="5" y="12" width="4" height="1" fill="#ffffff"/><rect x="9" y="12" width="1" height="1" fill="#000000"/><rect x="10" y="12" width="2" height="1" fill="#ffffff"/><rect x="12" y="12" width="1" height="1" fill="#000000"/><rect x="0" y="13" width="1" height="1" fill="#000000"/><rect x="1" y="13" width="3" height="1" fill="#ffffff"/><rect x="4" y="13" width="1" height="1" fill="#000000"/><rect x="5" y="13" width="4" height="1" fill="#ffffff"/><rect x="9" y="13" width="1" height="1" fill="#000000"/><rect x="10" y="13" width="2" height="1" fill="#ffffff"/><rect x="12" y="13" width="1" height="1" fill="#000000"/><rect x="0" y="14" width="13" height="1" fill="#000000"/></svg>
<svg class="a" style="left:10px;top:214px" width="16" height="16" shape-rendering="crispEdges"><rect x="12" y="0" width="1" height="1" fill="#000000"/><rect x="12" y="1" width="2" height="1" fill="#000000"/><rect x="12" y="2" width="1" height="1" fill="#000000"/><rect x="13" y="2" width="1" height="1" fill="#00ff00"/><rect x="14" y="2" width="1" height="1" fill="#000000"/><rect x="12" y="3" width="1" height="1" fill="#000000"/><rect x="13" y="3" width="2" height="1" fill="#00ff00"/><rect x="15" y="3" width="1" height="1" fill="#000000"/><rect x="4" y="4" width="5" height="1" fill="#000000"/><rect x="12" y="4" width="1" height="1" fill="#000000"/><rect x="13" y="4" width="1" height="1" fill="#00ff00"/><rect x="14" y="4" width="1" height="1" fill="#000000"/><rect x="2" y="5" width="2" height="1" fill="#000000"/><rect x="4" y="5" width="1" height="1" fill="#ffffff"/><rect x="5" y="5" width="2" height="1" fill="#ffff00"/><rect x="7" y="5" width="1" height="1" fill="#000000"/><rect x="8" y="5" width="2" height="1" fill="#00ffff"/><rect x="10" y="5" width="4" height="1" fill="#000000"/><rect x="1" y="6" width="1" height="1" fill="#000000"/><rect x="2" y="6" width="1" height="1" fill="#ffff00"/><rect x="3" y="6" width="1" height="1" fill="#ffffff"/><rect x="4" y="6" width="2" height="1" fill="#ffff00"/><rect x="6" y="6" width="1" height="1" fill="#ffffff"/><rect x="7" y="6" width="1" height="1" fill="#000000"/><rect x="8" y="6" width="1" height="1" fill="#00ffff"/><rect x="9" y="6" width="1" height="1" fill="#ffffff"/><rect x="10" y="6" width="2" height="1" fill="#00ffff"/><rect x="12" y="6" width="1" height="1" fill="#000000"/><rect x="14" y="6" width="1" height="1" fill="#000000"/><rect x="1" y="7" width="1" height="1" fill="#000000"/><rect x="2" y="7" width="2" height="1" fill="#ffff00"/><rect x="4" y="7" width="1" height="1" fill="#ffffff"/><rect x="5" y="7" width="2" height="1" fill="#ffff00"/><rect x="7" y="7" width="1" height="1" fill="#000000"/><rect x="8" y="7" width="1" height="1" fill="#ffffff"/><rect x="9" y="7" width="1" height="1" fill="#00ffff"/><rect x="10" y="7" width="1" height="1" fill="#ffffff"/><rect x="11" y="7" width="1" height="1" fill="#00ffff"/><rect x="12" y="7" width="1" height="1" fill="#000000"/><rect x="14" y="7" width="2" height="1" fill="#000000"/><rect x="0" y="8" width="1" height="1" fill="#000000"/><rect x="1" y="8" width="1" height="1" fill="#ffff00"/><rect x="2" y="8" width="1" height="1" fill="#ffffff"/><rect x="3" y="8" width="2" height="1" fill="#ffff00"/><rect x="5" y="8" width="1" height="1" fill="#ffffff"/><rect x="6" y="8" width="1" height="1" fill="#ffff00"/><rect x="7" y="8" width="1" height="1" fill="#000000"/><rect x="8" y="8" width="1" height="1" fill="#00ffff"/><rect x="9" y="8" width="1" height="1" fill="#ffffff"/><rect x="10" y="8" width="1" height="1" fill="#00ffff"/><rect x="11" y="8" width="1" height="1" fill="#ffffff"/><rect x="12" y="8" width="1" height="1" fill="#00ffff"/><rect x="13" y="8" width="1" height="1" fill="#000000"/><rect x="0" y="9" width="1" height="1" fill="#000000"/><rect x="1" y="9" width="2" height="1" fill="#ffff00"/><rect x="3" y="9" width="1" height="1" fill="#ffffff"/><rect x="4" y="9" width="2" height="1" fill="#ffff00"/><rect x="6" y="9" width="1" height="1" fill="#ffffff"/><rect x="7" y="9" width="7" height="1" fill="#000000"/><rect x="0" y="10" width="1" height="1" fill="#000000"/><rect x="1" y="10" width="1" height="1" fill="#ffff00"/><rect x="2" y="10" width="1" height="1" fill="#ffffff"/><rect x="3" y="10" width="2" height="1" fill="#ffff00"/><rect x="5" y="10" width="1" height="1" fill="#ffffff"/><rect x="6" y="10" width="1" height="1" fill="#ffff00"/><rect x="7" y="10" width="1" height="1" fill="#c0c0c0"/><rect x="8" y="10" width="1" height="1" fill="#800080"/><rect x="9" y="10" width="1" height="1" fill="#c0c0c0"/><rect x="10" y="10" width="1" height="1" fill="#800080"/><rect x="11" y="10" width="1" height="1" fill="#c0c0c0"/><rect x="12" y="10" width="1" height="1" fill="#800080"/><rect x="13" y="10" width="1" height="1" fill="#000000"/><rect x="0" y="11" width="1" height="1" fill="#000000"/><rect x="1" y="11" width="2" height="1" fill="#ffff00"/><rect x="3" y="11" width="1" height="1" fill="#ffffff"/><rect x="4" y="11" width="2" height="1" fill="#ffff00"/><rect x="6" y="11" width="1" height="1" fill="#800080"/><rect x="7" y="11" width="1" height="1" fill="#c0c0c0"/><rect x="8" y="11" width="1" height="1" fill="#800080"/><rect x="9" y="11" width="1" height="1" fill="#c0c0c0"/><rect x="10" y="11" width="1" height="1" fill="#800080"/><rect x="11" y="11" width="1" height="1" fill="#c0c0c0"/><rect x="12" y="11" width="1" height="1" fill="#800080"/><rect x="13" y="11" width="1" height="1" fill="#000000"/><rect x="1" y="12" width="1" height="1" fill="#000000"/><rect x="2" y="12" width="1" height="1" fill="#ffff00"/><rect x="3" y="12" width="1" height="1" fill="#ffffff"/><rect x="4" y="12" width="1" height="1" fill="#ffff00"/><rect x="5" y="12" width="1" height="1" fill="#800080"/><rect x="6" y="12" width="1" height="1" fill="#c0c0c0"/><rect x="7" y="12" width="1" height="1" fill="#800080"/><rect x="8" y="12" width="1" height="1" fill="#c0c0c0"/><rect x="9" y="12" width="1" height="1" fill="#800080"/><rect x="10" y="12" width="1" height="1" fill="#c0c0c0"/><rect x="11" y="12" width="1" height="1" fill="#800080"/><rect x="12" y="12" width="1" height="1" fill="#000000"/><rect x="1" y="13" width="2" height="1" fill="#000000"/><rect x="3" y="13" width="1" height="1" fill="#ffffff"/><rect x="4" y="13" width="1" height="1" fill="#800080"/><rect x="5" y="13" width="1" height="1" fill="#c0c0c0"/><rect x="6" y="13" width="1" height="1" fill="#800080"/><rect x="7" y="13" width="1" height="1" fill="#c0c0c0"/><rect x="8" y="13" width="1" height="1" fill="#800080"/><rect x="9" y="13" width="1" height="1" fill="#c0c0c0"/><rect x="10" y="13" width="1" height="1" fill="#800080"/><rect x="11" y="13" width="1" height="1" fill="#c0c0c0"/><rect x="12" y="13" width="1" height="1" fill="#000000"/><rect x="2" y="14" width="2" height="1" fill="#000000"/><rect x="4" y="14" width="1" height="1" fill="#800080"/><rect x="5" y="14" width="1" height="1" fill="#c0c0c0"/><rect x="6" y="14" width="1" height="1" fill="#800080"/><rect x="7" y="14" width="1" height="1" fill="#c0c0c0"/><rect x="8" y="14" width="1" height="1" fill="#800080"/><rect x="9" y="14" width="1" height="1" fill="#c0c0c0"/><rect x="10" y="14" width="1" height="1" fill="#800080"/><rect x="11" y="14" width="2" height="1" fill="#000000"/><rect x="4" y="15" width="7" height="1" fill="#000000"/></svg>
<svg class="a" style="left:11px;top:237px" width="15" height="17" shape-rendering="crispEdges"><rect x="11" y="0" width="1" height="1" fill="#000000"/><rect x="11" y="1" width="2" height="1" fill="#000000"/><rect x="11" y="2" width="1" height="1" fill="#000000"/><rect x="12" y="2" width="1" height="1" fill="#00ff00"/><rect x="13" y="2" width="1" height="1" fill="#000000"/><rect x="11" y="3" width="1" height="1" fill="#000000"/><rect x="12" y="3" width="2" height="1" fill="#00ff00"/><rect x="14" y="3" width="1" height="1" fill="#000000"/><rect x="11" y="4" width="1" height="1" fill="#000000"/><rect x="12" y="4" width="1" height="1" fill="#00ff00"/><rect x="13" y="4" width="1" height="1" fill="#000000"/><rect x="11" y="5" width="2" height="1" fill="#000000"/><rect x="11" y="6" width="1" height="1" fill="#000000"/><rect x="10" y="7" width="1" height="1" fill="#ffffff"/><rect x="11" y="7" width="1" height="1" fill="#0000ff"/><rect x="0" y="8" width="7" height="1" fill="#000000"/><rect x="9" y="8" width="1" height="1" fill="#000080"/><rect x="10" y="8" width="1" height="1" fill="#0000ff"/><rect x="11" y="8" width="1" height="1" fill="#ffffff"/><rect x="0" y="9" width="1" height="1" fill="#000000"/><rect x="1" y="9" width="6" height="1" fill="#ffffff"/><rect x="8" y="9" width="2" height="1" fill="#000080"/><rect x="10" y="9" width="1" height="1" fill="#0000ff"/><rect x="11" y="9" width="1" height="1" fill="#000080"/><rect x="0" y="10" width="1" height="1" fill="#000000"/><rect x="1" y="10" width="6" height="1" fill="#ffffff"/><rect x="7" y="10" width="4" height="1" fill="#000080"/><rect x="0" y="11" width="1" height="1" fill="#000000"/><rect x="1" y="11" width="5" height="1" fill="#ffffff"/><rect x="6" y="11" width="1" height="1" fill="#000080"/><rect x="7" y="11" width="1" height="1" fill="#ffffff"/><rect x="8" y="11" width="2" height="1" fill="#000080"/><rect x="0" y="12" width="1" height="1" fill="#000000"/><rect x="1" y="12" width="4" height="1" fill="#ffffff"/><rect x="5" y="12" width="1" height="1" fill="#000080"/><rect x="6" y="12" width="1" height="1" fill="#ffffff"/><rect x="7" y="12" width="2" height="1" fill="#000080"/><rect x="0" y="13" width="1" height="1" fill="#000000"/><rect x="1" y="13" width="3" height="1" fill="#ffffff"/><rect x="4" y="13" width="1" height="1" fill="#000080"/><rect x="5" y="13" width="1" height="1" fill="#ffffff"/><rect x="6" y="13" width="2" height="1" fill="#000080"/><rect x="0" y="14" width="1" height="1" fill="#000000"/><rect x="1" y="14" width="2" height="1" fill="#ffffff"/><rect x="3" y="14" width="1" height="1" fill="#0000ff"/><rect x="4" y="14" width="1" height="1" fill="#000080"/><rect x="5" y="14" width="1" height="1" fill="#0000ff"/><rect x="6" y="14" width="1" height="1" fill="#000080"/><rect x="0" y="15" width="2" height="1" fill="#000000"/><rect x="2" y="15" width="3" height="1" fill="#0000ff"/><rect x="2" y="16" width="1" height="1" fill="#0000ff"/></svg>
<svg class="a" style="left:12px;top:260px" width="16" height="14" shape-rendering="crispEdges"><rect x="11" y="0" width="1" height="1" fill="#000000"/><rect x="11" y="1" width="2" height="1" fill="#000000"/><rect x="0" y="2" width="12" height="1" fill="#000000"/><rect x="12" y="2" width="1" height="1" fill="#00ff00"/><rect x="13" y="2" width="1" height="1" fill="#000000"/><rect x="0" y="3" width="1" height="1" fill="#000000"/><rect x="1" y="3" width="9" height="1" fill="#000080"/><rect x="10" y="3" width="1" height="1" fill="#000000"/><rect x="11" y="3" width="3" height="1" fill="#00ff00"/><rect x="14" y="3" width="1" height="1" fill="#000000"/><rect x="0" y="4" width="1" height="1" fill="#000000"/><rect x="1" y="4" width="9" height="1" fill="#ffffff"/><rect x="10" y="4" width="1" height="1" fill="#000000"/><rect x="11" y="4" width="2" height="1" fill="#00ff00"/><rect x="13" y="4" width="1" height="1" fill="#000000"/><rect x="0" y="5" width="1" height="1" fill="#000000"/><rect x="1" y="5" width="1" height="1" fill="#ffffff"/><rect x="2" y="5" width="2" height="1" fill="#000000"/><rect x="4" y="5" width="1" height="1" fill="#ffffff"/><rect x="5" y="5" width="4" height="1" fill="#000000"/><rect x="9" y="5" width="1" height="1" fill="#ffffff"/><rect x="10" y="5" width="1" height="1" fill="#000000"/><rect x="11" y="5" width="1" height="1" fill="#00ff00"/><rect x="12" y="5" width="1" height="1" fill="#000000"/><rect x="0" y="6" width="1" height="1" fill="#000000"/><rect x="1" y="6" width="4" height="1" fill="#ffffff"/><rect x="5" y="6" width="1" height="1" fill="#000000"/><rect x="6" y="6" width="4" height="1" fill="#ffffff"/><rect x="10" y="6" width="2" height="1" fill="#000000"/><rect x="0" y="7" width="1" height="1" fill="#000000"/><rect x="1" y="7" width="1" height="1" fill="#ffffff"/><rect x="2" y="7" width="2" height="1" fill="#000000"/><rect x="4" y="7" width="1" height="1" fill="#ffffff"/><rect x="5" y="7" width="7" height="1" fill="#000000"/><rect x="0" y="8" width="1" height="1" fill="#000000"/><rect x="1" y="8" width="10" height="1" fill="#ffffff"/><rect x="11" y="8" width="1" height="1" fill="#000000"/><rect x="0" y="9" width="1" height="1" fill="#000000"/><rect x="1" y="9" width="1" height="1" fill="#ffffff"/><rect x="2" y="9" width="8" height="1" fill="#000000"/><rect x="10" y="9" width="1" height="1" fill="#ffffff"/><rect x="11" y="9" width="1" height="1" fill="#000000"/><rect x="0" y="10" width="1" height="1" fill="#000000"/><rect x="1" y="10" width="10" height="1" fill="#ffffff"/><rect x="11" y="10" width="1" height="1" fill="#000000"/><rect x="0" y="11" width="1" height="1" fill="#000000"/><rect x="1" y="11" width="1" height="1" fill="#ffffff"/><rect x="2" y="11" width="2" height="1" fill="#000000"/><rect x="4" y="11" width="1" height="1" fill="#ffffff"/><rect x="5" y="11" width="5" height="1" fill="#000000"/><rect x="10" y="11" width="1" height="1" fill="#ffffff"/><rect x="11" y="11" width="1" height="1" fill="#000000"/><rect x="0" y="12" width="1" height="1" fill="#000000"/><rect x="1" y="12" width="10" height="1" fill="#ffffff"/><rect x="11" y="12" width="1" height="1" fill="#000000"/><rect x="0" y="13" width="12" height="1" fill="#000000"/></svg>
<svg class="a" style="left:10px;top:292px" width="17" height="14" shape-rendering="crispEdges"><rect x="11" y="0" width="1" height="1" fill="#a0a0a0"/><rect x="0" y="1" width="8" height="1" fill="#a0a0a0"/><rect x="11" y="1" width="1" height="1" fill="#a0a0a0"/><rect x="0" y="2" width="1" height="1" fill="#a0a0a0"/><rect x="1" y="2" width="6" height="1" fill="#ffffff"/><rect x="7" y="2" width="1" height="1" fill="#a0a0a0"/><rect x="9" y="2" width="5" height="1" fill="#a0a0a0"/><rect x="0" y="3" width="1" height="1" fill="#a0a0a0"/><rect x="1" y="3" width="1" height="1" fill="#ffffff"/><rect x="2" y="3" width="2" height="1" fill="#a0a0a0"/><rect x="4" y="3" width="1" height="1" fill="#ffffff"/><rect x="5" y="3" width="11" height="1" fill="#a0a0a0"/><rect x="0" y="4" width="1" height="1" fill="#a0a0a0"/><rect x="1" y="4" width="6" height="1" fill="#ffffff"/><rect x="7" y="4" width="1" height="1" fill="#a0a0a0"/><rect x="9" y="4" width="5" height="1" fill="#a0a0a0"/><rect x="0" y="5" width="1" height="1" fill="#a0a0a0"/><rect x="1" y="5" width="1" height="1" fill="#ffffff"/><rect x="2" y="5" width="2" height="1" fill="#a0a0a0"/><rect x="4" y="5" width="1" height="1" fill="#ffffff"/><rect x="5" y="5" width="2" height="1" fill="#a0a0a0"/><rect x="7" y="5" width="1" height="1" fill="#ffffff"/><rect x="8" y="5" width="1" height="1" fill="#a0a0a0"/><rect x="11" y="5" width="1" height="1" fill="#a0a0a0"/><rect x="0" y="6" width="1" height="1" fill="#a0a0a0"/><rect x="1" y="6" width="6" height="1" fill="#ffffff"/><rect x="7" y="6" width="1" height="1" fill="#a0a0a0"/><rect x="11" y="6" width="1" height="1" fill="#a0a0a0"/><rect x="0" y="7" width="1" height="1" fill="#a0a0a0"/><rect x="1" y="7" width="1" height="1" fill="#ffffff"/><rect x="2" y="7" width="2" height="1" fill="#a0a0a0"/><rect x="4" y="7" width="1" height="1" fill="#ffffff"/><rect x="5" y="7" width="2" height="1" fill="#a0a0a0"/><rect x="7" y="7" width="1" height="1" fill="#ffffff"/><rect x="8" y="7" width="1" height="1" fill="#a0a0a0"/><rect x="0" y="8" width="1" height="1" fill="#a0a0a0"/><rect x="1" y="8" width="6" height="1" fill="#ffffff"/><rect x="7" y="8" width="1" height="1" fill="#a0a0a0"/><rect x="0" y="9" width="1" height="1" fill="#a0a0a0"/><rect x="1" y="9" width="1" height="1" fill="#ffffff"/><rect x="2" y="9" width="2" height="1" fill="#a0a0a0"/><rect x="4" y="9" width="1" height="1" fill="#ffffff"/><rect x="5" y="9" width="2" height="1" fill="#a0a0a0"/><rect x="7" y="9" width="1" height="1" fill="#ffffff"/><rect x="8" y="9" width="1" height="1" fill="#a0a0a0"/><rect x="0" y="10" width="1" height="1" fill="#a0a0a0"/><rect x="1" y="10" width="6" height="1" fill="#ffffff"/><rect x="7" y="10" width="1" height="1" fill="#a0a0a0"/><rect x="0" y="11" width="1" height="1" fill="#a0a0a0"/><rect x="1" y="11" width="1" height="1" fill="#ffffff"/><rect x="2" y="11" width="2" height="1" fill="#a0a0a0"/><rect x="4" y="11" width="1" height="1" fill="#ffffff"/><rect x="5" y="11" width="2" height="1" fill="#a0a0a0"/><rect x="7" y="11" width="1" height="1" fill="#ffffff"/><rect x="8" y="11" width="1" height="1" fill="#a0a0a0"/><rect x="0" y="12" width="1" height="1" fill="#a0a0a0"/><rect x="1" y="12" width="6" height="1" fill="#ffffff"/><rect x="7" y="12" width="1" height="1" fill="#a0a0a0"/><rect x="0" y="13" width="8" height="1" fill="#a0a0a0"/></svg>
<svg class="a" style="left:10px;top:315px" width="16" height="15" shape-rendering="crispEdges"><rect x="9" y="0" width="2" height="1" fill="#000000"/><rect x="9" y="1" width="1" height="1" fill="#000000"/><rect x="10" y="1" width="1" height="1" fill="#c0c0c0"/><rect x="11" y="1" width="1" height="1" fill="#000000"/><rect x="0" y="2" width="8" height="1" fill="#000080"/><rect x="8" y="2" width="1" height="1" fill="#000000"/><rect x="9" y="2" width="3" height="1" fill="#c0c0c0"/><rect x="12" y="2" width="1" height="1" fill="#000000"/><rect x="0" y="3" width="1" height="1" fill="#000080"/><rect x="1" y="3" width="6" height="1" fill="#ffffff"/><rect x="7" y="3" width="1" height="1" fill="#000000"/><rect x="8" y="3" width="5" height="1" fill="#c0c0c0"/><rect x="13" y="3" width="1" height="1" fill="#000000"/><rect x="0" y="4" width="1" height="1" fill="#000080"/><rect x="1" y="4" width="1" height="1" fill="#ffffff"/><rect x="2" y="4" width="2" height="1" fill="#000080"/><rect x="4" y="4" width="2" height="1" fill="#ffffff"/><rect x="6" y="4" width="1" height="1" fill="#000000"/><rect x="7" y="4" width="1" height="1" fill="#ff0000"/><rect x="8" y="4" width="6" height="1" fill="#c0c0c0"/><rect x="14" y="4" width="1" height="1" fill="#000000"/><rect x="0" y="5" width="1" height="1" fill="#000080"/><rect x="1" y="5" width="1" height="1" fill="#ffffff"/><rect x="2" y="5" width="1" height="1" fill="#000080"/><rect x="3" y="5" width="3" height="1" fill="#ffffff"/><rect x="6" y="5" width="1" height="1" fill="#000000"/><rect x="7" y="5" width="1" height="1" fill="#ff0000"/><rect x="8" y="5" width="5" height="1" fill="#c0c0c0"/><rect x="13" y="5" width="1" height="1" fill="#000000"/><rect x="0" y="6" width="2" height="1" fill="#000080"/><rect x="2" y="6" width="5" height="1" fill="#ffffff"/><rect x="7" y="6" width="1" height="1" fill="#000000"/><rect x="8" y="6" width="1" height="1" fill="#ff0000"/><rect x="9" y="6" width="3" height="1" fill="#c0c0c0"/><rect x="12" y="6" width="1" height="1" fill="#000000"/><rect x="0" y="7" width="2" height="1" fill="#000080"/><rect x="2" y="7" width="6" height="1" fill="#ffffff"/><rect x="8" y="7" width="1" height="1" fill="#000000"/><rect x="9" y="7" width="1" height="1" fill="#ff0000"/><rect x="10" y="7" width="1" height="1" fill="#c0c0c0"/><rect x="11" y="7" width="1" height="1" fill="#000000"/><rect x="12" y="7" width="1" height="1" fill="#000080"/><rect x="0" y="8" width="2" height="1" fill="#000080"/><rect x="2" y="8" width="7" height="1" fill="#ffffff"/><rect x="9" y="8" width="2" height="1" fill="#000000"/><rect x="11" y="8" width="1" height="1" fill="#ffffff"/><rect x="12" y="8" width="1" height="1" fill="#000080"/><rect x="0" y="9" width="2" height="1" fill="#000080"/><rect x="2" y="9" width="10" height="1" fill="#ffffff"/><rect x="12" y="9" width="1" height="1" fill="#000080"/><rect x="0" y="10" width="1" height="1" fill="#000080"/><rect x="1" y="10" width="1" height="1" fill="#ffffff"/><rect x="2" y="10" width="1" height="1" fill="#000080"/><rect x="3" y="10" width="9" height="1" fill="#ffffff"/><rect x="12" y="10" width="1" height="1" fill="#000080"/><rect x="0" y="11" width="1" height="1" fill="#000080"/><rect x="1" y="11" width="11" height="1" fill="#ffffff"/><rect x="12" y="11" width="1" height="1" fill="#000080"/><rect x="0" y="12" width="1" height="1" fill="#000080"/><rect x="1" y="12" width="2" height="1" fill="#ffff00"/><rect x="3" y="12" width="1" height="1" fill="#ffffff"/><rect x="4" y="12" width="2" height="1" fill="#ffff00"/><rect x="6" y="12" width="1" height="1" fill="#ffffff"/><rect x="7" y="12" width="2" height="1" fill="#ffff00"/><rect x="9" y="12" width="1" height="1" fill="#ffffff"/><rect x="10" y="12" width="2" height="1" fill="#ffff00"/><rect x="12" y="12" width="1" height="1" fill="#000080"/><rect x="0" y="13" width="1" height="1" fill="#000080"/><rect x="1" y="13" width="2" height="1" fill="#ffff00"/><rect x="3" y="13" width="1" height="1" fill="#ffffff"/><rect x="4" y="13" width="2" height="1" fill="#ffff00"/><rect x="6" y="13" width="1" height="1" fill="#ffffff"/><rect x="7" y="13" width="2" height="1" fill="#ffff00"/><rect x="9" y="13" width="1" height="1" fill="#ffffff"/><rect x="10" y="13" width="2" height="1" fill="#ffff00"/><rect x="12" y="13" width="1" height="1" fill="#000080"/><rect x="0" y="14" width="13" height="1" fill="#000080"/></svg>
<svg class="a" style="left:10px;top:336px" width="16" height="16" shape-rendering="crispEdges"><rect x="10" y="0" width="3" height="1" fill="#000000"/><rect x="9" y="1" width="1" height="1" fill="#000000"/><rect x="13" y="1" width="1" height="1" fill="#000000"/><rect x="5" y="2" width="3" height="1" fill="#000000"/><rect x="9" y="2" width="1" height="1" fill="#000000"/><rect x="2" y="3" width="1" height="1" fill="#000000"/><rect x="5" y="3" width="1" height="1" fill="#000000"/><rect x="8" y="3" width="2" height="1" fill="#000000"/><rect x="1" y="4" width="1" height="1" fill="#000000"/><rect x="3" y="4" width="1" height="1" fill="#000000"/><rect x="5" y="4" width="3" height="1" fill="#000000"/><rect x="9" y="4" width="1" height="1" fill="#000000"/><rect x="13" y="4" width="1" height="1" fill="#000000"/><rect x="1" y="5" width="3" height="1" fill="#000000"/><rect x="5" y="5" width="1" height="1" fill="#000000"/><rect x="8" y="5" width="1" height="1" fill="#000000"/><rect x="10" y="5" width="3" height="1" fill="#000000"/><rect x="1" y="6" width="1" height="1" fill="#000000"/><rect x="3" y="6" width="1" height="1" fill="#000000"/><rect x="5" y="6" width="3" height="1" fill="#000000"/><rect x="1" y="7" width="1" height="1" fill="#000000"/><rect x="3" y="7" width="1" height="1" fill="#000000"/><rect x="14" y="7" width="2" height="1" fill="#000080"/><rect x="12" y="8" width="2" height="1" fill="#000080"/><rect x="0" y="9" width="2" height="1" fill="#000080"/><rect x="11" y="9" width="2" height="1" fill="#000080"/><rect x="1" y="10" width="3" height="1" fill="#000080"/><rect x="10" y="10" width="2" height="1" fill="#000080"/><rect x="2" y="11" width="3" height="1" fill="#000080"/><rect x="9" y="11" width="2" height="1" fill="#000080"/><rect x="3" y="12" width="3" height="1" fill="#000080"/><rect x="8" y="12" width="2" height="1" fill="#000080"/><rect x="4" y="13" width="5" height="1" fill="#000080"/><rect x="5" y="14" width="3" height="1" fill="#000080"/><rect x="6" y="15" width="1" height="1" fill="#000080"/></svg>
<svg class="a" style="left:10px;top:363px" width="16" height="11" shape-rendering="crispEdges"><rect x="2" y="0" width="2" height="1" fill="#000000"/><rect x="6" y="0" width="3" height="1" fill="#000000"/><rect x="12" y="0" width="3" height="1" fill="#000000"/><rect x="1" y="1" width="1" height="1" fill="#000000"/><rect x="4" y="1" width="1" height="1" fill="#000000"/><rect x="6" y="1" width="1" height="1" fill="#000000"/><rect x="9" y="1" width="1" height="1" fill="#000000"/><rect x="11" y="1" width="1" height="1" fill="#000000"/><rect x="15" y="1" width="1" height="1" fill="#000000"/><rect x="1" y="2" width="1" height="1" fill="#000000"/><rect x="4" y="2" width="1" height="1" fill="#000000"/><rect x="6" y="2" width="1" height="1" fill="#000000"/><rect x="9" y="2" width="1" height="1" fill="#000000"/><rect x="11" y="2" width="1" height="1" fill="#000000"/><rect x="1" y="3" width="4" height="1" fill="#000000"/><rect x="6" y="3" width="3" height="1" fill="#000000"/><rect x="11" y="3" width="1" height="1" fill="#000000"/><rect x="1" y="4" width="1" height="1" fill="#000000"/><rect x="4" y="4" width="1" height="1" fill="#000000"/><rect x="6" y="4" width="1" height="1" fill="#000000"/><rect x="9" y="4" width="1" height="1" fill="#000000"/><rect x="11" y="4" width="1" height="1" fill="#000000"/><rect x="15" y="4" width="1" height="1" fill="#000000"/><rect x="1" y="5" width="1" height="1" fill="#000000"/><rect x="4" y="5" width="1" height="1" fill="#000000"/><rect x="6" y="5" width="3" height="1" fill="#000000"/><rect x="12" y="5" width="3" height="1" fill="#000000"/><rect x="3" y="8" width="3" height="1" fill="#ff0000"/><rect x="11" y="8" width="3" height="1" fill="#ff0000"/><rect x="2" y="9" width="1" height="1" fill="#ff0000"/><rect x="6" y="9" width="1" height="1" fill="#ff0000"/><rect x="10" y="9" width="1" height="1" fill="#ff0000"/><rect x="14" y="9" width="1" height="1" fill="#ff0000"/><rect x="0" y="10" width="2" height="1" fill="#ff0000"/><rect x="7" y="10" width="3" height="1" fill="#ff0000"/><rect x="15" y="10" width="1" height="1" fill="#ff0000"/></svg>
<svg class="a" style="left:11px;top:386px" width="15" height="11" shape-rendering="crispEdges"><rect x="2" y="0" width="3" height="1" fill="#000000"/><rect x="9" y="0" width="3" height="1" fill="#000000"/><rect x="2" y="1" width="1" height="1" fill="#000000"/><rect x="3" y="1" width="1" height="1" fill="#ffffff"/><rect x="4" y="1" width="1" height="1" fill="#000000"/><rect x="9" y="1" width="1" height="1" fill="#000000"/><rect x="10" y="1" width="1" height="1" fill="#ffffff"/><rect x="11" y="1" width="1" height="1" fill="#000000"/><rect x="1" y="2" width="5" height="1" fill="#000000"/><rect x="8" y="2" width="5" height="1" fill="#000000"/><rect x="1" y="3" width="1" height="1" fill="#000000"/><rect x="2" y="3" width="1" height="1" fill="#ffffff"/><rect x="3" y="3" width="3" height="1" fill="#000000"/><rect x="8" y="3" width="1" height="1" fill="#000000"/><rect x="9" y="3" width="1" height="1" fill="#ffffff"/><rect x="10" y="3" width="3" height="1" fill="#000000"/><rect x="0" y="4" width="15" height="1" fill="#000000"/><rect x="0" y="5" width="15" height="1" fill="#000000"/><rect x="0" y="6" width="6" height="1" fill="#000000"/><rect x="6" y="6" width="1" height="1" fill="#ffff00"/><rect x="7" y="6" width="8" height="1" fill="#000000"/><rect x="0" y="7" width="6" height="1" fill="#000000"/><rect x="9" y="7" width="6" height="1" fill="#000000"/><rect x="0" y="8" width="6" height="1" fill="#000000"/><rect x="9" y="8" width="6" height="1" fill="#000000"/><rect x="0" y="9" width="1" height="1" fill="#000000"/><rect x="1" y="9" width="1" height="1" fill="#ffff00"/><rect x="2" y="9" width="4" height="1" fill="#000000"/><rect x="9" y="9" width="4" height="1" fill="#000000"/><rect x="13" y="9" width="1" height="1" fill="#ffff00"/><rect x="14" y="9" width="1" height="1" fill="#000000"/><rect x="0" y="10" width="6" height="1" fill="#000000"/><rect x="9" y="10" width="6" height="1" fill="#000000"/></svg>
<svg class="a" style="left:10px;top:408px" width="16" height="13" shape-rendering="crispEdges"><rect x="0" y="0" width="16" height="1" fill="#000000"/><rect x="0" y="1" width="1" height="1" fill="#000000"/><rect x="1" y="1" width="2" height="1" fill="#ffffff"/><rect x="3" y="1" width="13" height="1" fill="#000000"/><rect x="0" y="2" width="1" height="1" fill="#000000"/><rect x="1" y="2" width="2" height="1" fill="#ffffff"/><rect x="3" y="2" width="1" height="1" fill="#000000"/><rect x="4" y="2" width="11" height="1" fill="#ffffff"/><rect x="15" y="2" width="1" height="1" fill="#000000"/><rect x="0" y="3" width="1" height="1" fill="#000000"/><rect x="1" y="3" width="2" height="1" fill="#ffffff"/><rect x="3" y="3" width="1" height="1" fill="#000000"/><rect x="4" y="3" width="11" height="1" fill="#808080"/><rect x="15" y="3" width="1" height="1" fill="#000000"/><rect x="0" y="4" width="2" height="1" fill="#000000"/><rect x="2" y="4" width="1" height="1" fill="#ffffff"/><rect x="3" y="4" width="1" height="1" fill="#000000"/><rect x="4" y="4" width="4" height="1" fill="#ffffff"/><rect x="8" y="4" width="1" height="1" fill="#808080"/><rect x="9" y="4" width="6" height="1" fill="#ffffff"/><rect x="15" y="4" width="1" height="1" fill="#000000"/><rect x="0" y="5" width="1" height="1" fill="#000000"/><rect x="1" y="5" width="2" height="1" fill="#ffffff"/><rect x="3" y="5" width="1" height="1" fill="#000000"/><rect x="4" y="5" width="11" height="1" fill="#808080"/><rect x="15" y="5" width="1" height="1" fill="#000000"/><rect x="0" y="6" width="2" height="1" fill="#000000"/><rect x="2" y="6" width="1" height="1" fill="#ffffff"/><rect x="3" y="6" width="1" height="1" fill="#000000"/><rect x="4" y="6" width="4" height="1" fill="#ffffff"/><rect x="8" y="6" width="1" height="1" fill="#808080"/><rect x="9" y="6" width="6" height="1" fill="#ffffff"/><rect x="15" y="6" width="1" height="1" fill="#000000"/><rect x="0" y="7" width="1" height="1" fill="#000000"/><rect x="1" y="7" width="2" height="1" fill="#ffffff"/><rect x="3" y="7" width="1" height="1" fill="#000000"/><rect x="4" y="7" width="11" height="1" fill="#808080"/><rect x="15" y="7" width="1" height="1" fill="#000000"/><rect x="0" y="8" width="2" height="1" fill="#000000"/><rect x="2" y="8" width="1" height="1" fill="#ffffff"/><rect x="3" y="8" width="1" height="1" fill="#000000"/><rect x="4" y="8" width="4" height="1" fill="#ffffff"/><rect x="8" y="8" width="1" height="1" fill="#808080"/><rect x="9" y="8" width="6" height="1" fill="#ffffff"/><rect x="15" y="8" width="1" height="1" fill="#000000"/><rect x="0" y="9" width="1" height="1" fill="#000000"/><rect x="1" y="9" width="2" height="1" fill="#ffffff"/><rect x="3" y="9" width="1" height="1" fill="#000000"/><rect x="4" y="9" width="11" height="1" fill="#808080"/><rect x="15" y="9" width="1" height="1" fill="#000000"/><rect x="0" y="10" width="1" height="1" fill="#000000"/><rect x="1" y="10" width="2" height="1" fill="#ffffff"/><rect x="3" y="10" width="1" height="1" fill="#000000"/><rect x="4" y="10" width="4" height="1" fill="#ffffff"/><rect x="8" y="10" width="1" height="1" fill="#808080"/><rect x="9" y="10" width="6" height="1" fill="#ffffff"/><rect x="15" y="10" width="1" height="1" fill="#000000"/><rect x="0" y="11" width="1" height="1" fill="#000000"/><rect x="1" y="11" width="2" height="1" fill="#ffffff"/><rect x="3" y="11" width="1" height="1" fill="#000000"/><rect x="4" y="11" width="11" height="1" fill="#ffffff"/><rect x="15" y="11" width="1" height="1" fill="#000000"/><rect x="0" y="12" width="16" height="1" fill="#000000"/></svg>
<svg class="a" style="left:10px;top:438px" width="16" height="15" shape-rendering="crispEdges"><rect x="12" y="0" width="1" height="1" fill="#a0a0a0"/><rect x="12" y="1" width="1" height="1" fill="#a0a0a0"/><rect x="11" y="2" width="3" height="1" fill="#a0a0a0"/><rect x="9" y="3" width="7" height="1" fill="#a0a0a0"/><rect x="11" y="4" width="3" height="1" fill="#a0a0a0"/><rect x="12" y="5" width="1" height="1" fill="#a0a0a0"/><rect x="12" y="6" width="1" height="1" fill="#a0a0a0"/><rect x="0" y="8" width="12" height="1" fill="#000000"/><rect x="1" y="9" width="1" height="1" fill="#000000"/><rect x="2" y="9" width="4" height="1" fill="#ffffff"/><rect x="6" y="9" width="3" height="1" fill="#ffff00"/><rect x="9" y="9" width="2" height="1" fill="#ffffff"/><rect x="11" y="9" width="1" height="1" fill="#000000"/><rect x="2" y="10" width="1" height="1" fill="#000000"/><rect x="3" y="10" width="2" height="1" fill="#ffffff"/><rect x="5" y="10" width="1" height="1" fill="#ffff00"/><rect x="6" y="10" width="1" height="1" fill="#808000"/><rect x="7" y="10" width="1" height="1" fill="#ffff00"/><rect x="8" y="10" width="1" height="1" fill="#808000"/><rect x="9" y="10" width="1" height="1" fill="#ffffff"/><rect x="10" y="10" width="1" height="1" fill="#000000"/><rect x="3" y="11" width="1" height="1" fill="#000000"/><rect x="4" y="11" width="2" height="1" fill="#ffffff"/><rect x="6" y="11" width="1" height="1" fill="#ffff00"/><rect x="7" y="11" width="1" height="1" fill="#808000"/><rect x="8" y="11" width="1" height="1" fill="#ffffff"/><rect x="9" y="11" width="1" height="1" fill="#000000"/><rect x="4" y="12" width="5" height="1" fill="#000000"/><rect x="4" y="13" width="1" height="1" fill="#000000"/><rect x="5" y="13" width="3" height="1" fill="#ffffff"/><rect x="8" y="13" width="1" height="1" fill="#000000"/><rect x="4" y="14" width="5" height="1" fill="#000000"/></svg>
<svg class="a" style="left:10px;top:461px" width="16" height="16" shape-rendering="crispEdges"><rect x="3" y="0" width="4" height="1" fill="#000080"/><rect x="2" y="1" width="2" height="1" fill="#000080"/><rect x="6" y="1" width="2" height="1" fill="#000080"/><rect x="2" y="2" width="2" height="1" fill="#000080"/><rect x="6" y="2" width="2" height="1" fill="#000080"/><rect x="1" y="3" width="8" height="1" fill="#000080"/><rect x="1" y="4" width="2" height="1" fill="#000080"/><rect x="7" y="4" width="2" height="1" fill="#000080"/><rect x="0" y="5" width="2" height="1" fill="#000080"/><rect x="8" y="5" width="2" height="1" fill="#000080"/><rect x="0" y="6" width="2" height="1" fill="#000080"/><rect x="8" y="6" width="2" height="1" fill="#000080"/><rect x="2" y="8" width="1" height="1" fill="#000080"/><rect x="3" y="9" width="1" height="1" fill="#000080"/><rect x="9" y="9" width="7" height="1" fill="#000000"/><rect x="4" y="10" width="1" height="1" fill="#000080"/><rect x="6" y="10" width="1" height="1" fill="#000080"/><rect x="13" y="10" width="2" height="1" fill="#000000"/><rect x="5" y="11" width="2" height="1" fill="#000080"/><rect x="12" y="11" width="2" height="1" fill="#000000"/><rect x="4" y="12" width="3" height="1" fill="#000080"/><rect x="11" y="12" width="2" height="1" fill="#000000"/><rect x="10" y="13" width="2" height="1" fill="#000000"/><rect x="9" y="14" width="7" height="1" fill="#000000"/><rect x="9" y="15" width="7" height="1" fill="#000000"/></svg>
<svg class="a" style="left:10px;top:483px" width="16" height="16" shape-rendering="crispEdges"><rect x="0" y="0" width="8" height="1" fill="#000080"/><rect x="6" y="1" width="2" height="1" fill="#000080"/><rect x="5" y="2" width="2" height="1" fill="#000080"/><rect x="3" y="3" width="2" height="1" fill="#000080"/><rect x="2" y="4" width="2" height="1" fill="#000080"/><rect x="0" y="5" width="8" height="1" fill="#000080"/><rect x="2" y="7" width="1" height="1" fill="#000080"/><rect x="3" y="8" width="1" height="1" fill="#000080"/><rect x="10" y="8" width="3" height="1" fill="#000000"/><rect x="4" y="9" width="1" height="1" fill="#000080"/><rect x="6" y="9" width="1" height="1" fill="#000080"/><rect x="9" y="9" width="2" height="1" fill="#000000"/><rect x="12" y="9" width="2" height="1" fill="#000000"/><rect x="5" y="10" width="2" height="1" fill="#000080"/><rect x="9" y="10" width="2" height="1" fill="#000000"/><rect x="12" y="10" width="2" height="1" fill="#000000"/><rect x="4" y="11" width="3" height="1" fill="#000080"/><rect x="8" y="11" width="2" height="1" fill="#000000"/><rect x="13" y="11" width="2" height="1" fill="#000000"/><rect x="8" y="12" width="7" height="1" fill="#000000"/><rect x="7" y="13" width="2" height="1" fill="#000000"/><rect x="14" y="13" width="2" height="1" fill="#000000"/><rect x="7" y="14" width="2" height="1" fill="#000000"/><rect x="14" y="14" width="2" height="1" fill="#000000"/><rect x="7" y="15" width="2" height="1" fill="#000000"/><rect x="14" y="15" width="2" height="1" fill="#000000"/></svg>
<svg class="a" style="left:11px;top:516px" width="14" height="13" shape-rendering="crispEdges"><rect x="0" y="0" width="14" height="1" fill="#000000"/><rect x="0" y="1" width="1" height="1" fill="#000000"/><rect x="1" y="1" width="6" height="1" fill="#ffffff"/><rect x="7" y="1" width="1" height="1" fill="#000000"/><rect x="8" y="1" width="5" height="1" fill="#ffffff"/><rect x="13" y="1" width="1" height="1" fill="#000000"/><rect x="0" y="2" width="1" height="1" fill="#000000"/><rect x="1" y="2" width="6" height="1" fill="#ffffff"/><rect x="7" y="2" width="1" height="1" fill="#000000"/><rect x="8" y="2" width="5" height="1" fill="#ffffff"/><rect x="13" y="2" width="1" height="1" fill="#000000"/><rect x="0" y="3" width="14" height="1" fill="#000000"/><rect x="0" y="6" width="8" height="1" fill="#000000"/><rect x="0" y="7" width="1" height="1" fill="#000000"/><rect x="1" y="7" width="6" height="1" fill="#ffffff"/><rect x="7" y="7" width="1" height="1" fill="#000000"/><rect x="0" y="8" width="1" height="1" fill="#000000"/><rect x="1" y="8" width="6" height="1" fill="#ffffff"/><rect x="7" y="8" width="1" height="1" fill="#000000"/><rect x="0" y="9" width="8" height="1" fill="#000000"/><rect x="0" y="10" width="1" height="1" fill="#000000"/><rect x="1" y="10" width="6" height="1" fill="#ffffff"/><rect x="7" y="10" width="1" height="1" fill="#000000"/><rect x="0" y="11" width="1" height="1" fill="#000000"/><rect x="1" y="11" width="6" height="1" fill="#ffffff"/><rect x="7" y="11" width="1" height="1" fill="#000000"/><rect x="0" y="12" width="8" height="1" fill="#000000"/></svg>
<svg class="a" style="left:10px;top:539px" width="16" height="12" shape-rendering="crispEdges"><rect x="0" y="0" width="15" height="1" fill="#a0a0a0"/><rect x="0" y="1" width="1" height="1" fill="#a0a0a0"/><rect x="1" y="1" width="6" height="1" fill="#ffffff"/><rect x="7" y="1" width="1" height="1" fill="#a0a0a0"/><rect x="8" y="1" width="6" height="1" fill="#ffffff"/><rect x="14" y="1" width="1" height="1" fill="#a0a0a0"/><rect x="0" y="2" width="1" height="1" fill="#a0a0a0"/><rect x="1" y="2" width="6" height="1" fill="#ffffff"/><rect x="7" y="2" width="1" height="1" fill="#a0a0a0"/><rect x="8" y="2" width="6" height="1" fill="#ffffff"/><rect x="14" y="2" width="1" height="1" fill="#a0a0a0"/><rect x="0" y="3" width="15" height="1" fill="#a0a0a0"/><rect x="15" y="4" width="1" height="1" fill="#a0a0a0"/><rect x="0" y="5" width="8" height="1" fill="#a0a0a0"/><rect x="11" y="5" width="1" height="1" fill="#a0a0a0"/><rect x="14" y="5" width="2" height="1" fill="#a0a0a0"/><rect x="0" y="6" width="1" height="1" fill="#a0a0a0"/><rect x="1" y="6" width="6" height="1" fill="#ffffff"/><rect x="7" y="6" width="1" height="1" fill="#a0a0a0"/><rect x="11" y="6" width="4" height="1" fill="#a0a0a0"/><rect x="0" y="7" width="1" height="1" fill="#a0a0a0"/><rect x="1" y="7" width="6" height="1" fill="#ffffff"/><rect x="7" y="7" width="1" height="1" fill="#a0a0a0"/><rect x="12" y="7" width="2" height="1" fill="#a0a0a0"/><rect x="0" y="8" width="8" height="1" fill="#a0a0a0"/><rect x="11" y="8" width="4" height="1" fill="#a0a0a0"/><rect x="0" y="9" width="1" height="1" fill="#a0a0a0"/><rect x="1" y="9" width="6" height="1" fill="#ffffff"/><rect x="7" y="9" width="1" height="1" fill="#a0a0a0"/><rect x="10" y="9" width="2" height="1" fill="#a0a0a0"/><rect x="14" y="9" width="2" height="1" fill="#a0a0a0"/><rect x="0" y="10" width="1" height="1" fill="#a0a0a0"/><rect x="1" y="10" width="6" height="1" fill="#ffffff"/><rect x="7" y="10" width="1" height="1" fill="#a0a0a0"/><rect x="10" y="10" width="1" height="1" fill="#a0a0a0"/><rect x="15" y="10" width="1" height="1" fill="#a0a0a0"/><rect x="0" y="11" width="8" height="1" fill="#a0a0a0"/></svg>
</body></html>
